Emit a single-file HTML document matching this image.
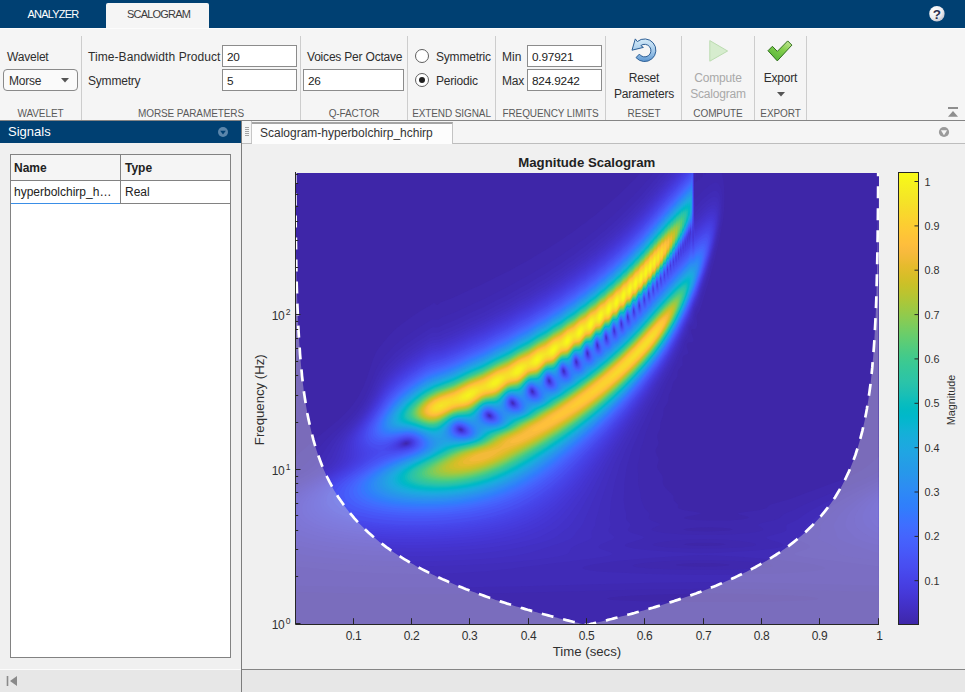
<!DOCTYPE html>
<html lang="en">
<head>
<meta charset="utf-8">
<title>Wavelet Time-Frequency Analyzer</title>
<style>
html,body{margin:0;padding:0;}
body{width:965px;height:692px;overflow:hidden;position:relative;background:#f0f0f0;font-family:"Liberation Sans",sans-serif;font-size:12px;color:#1f1f1f;}
.abs{position:absolute;}
#topbar{left:0;top:0;width:965px;height:28px;background:#004072;}
.ttab{position:absolute;top:3px;height:25px;line-height:23px;text-align:center;font-size:11px;color:#fff;letter-spacing:-0.8px;}
#tab1{left:20px;width:66px;}
#tab2{left:106px;width:101px;padding-left:2px;background:#f5f5f5;color:#3c3c3c;border-radius:2px 2px 0 0;}
#strip{left:0;top:28px;width:965px;height:91px;background:#f5f5f5;border-top:1px solid #fcfcfc;box-sizing:content-box;border-bottom:1px solid #858585;}
.sep{position:absolute;top:36px;width:1px;height:84px;background:#cdcdcd;}
.tl{position:absolute;font-size:12px;line-height:14px;color:#2e2e2e;white-space:nowrap;letter-spacing:-0.2px;}
.sl{position:absolute;top:108px;font-size:10px;line-height:12px;color:#5a5a5a;text-align:center;white-space:nowrap;letter-spacing:-0.1px;}
.inp{position:absolute;height:20px;border:1px solid #8c8c8c;background:#fff;box-sizing:content-box;font-size:11.8px;line-height:22px;color:#222;text-indent:4px;letter-spacing:-0.2px;}
.radio{position:absolute;width:12px;height:12px;border:1px solid #5f5f5f;border-radius:50%;background:#fff;}
.radio.on::after{content:"";position:absolute;left:3px;top:3px;width:6px;height:6px;border-radius:50%;background:#1f1f1f;}
.btxt{position:absolute;font-size:12px;line-height:16px;text-align:center;color:#2e2e2e;white-space:nowrap;letter-spacing:-0.2px;}
#sighead{left:0;top:121px;width:241px;height:22px;background:#004072;color:#fff;font-size:13px;line-height:22px;}
#leftbody{left:0;top:121px;width:242px;height:549px;background:#f0f0f0;border-right:1px solid #7d7d7d;box-sizing:border-box;}
#tbl{left:10px;top:154px;width:219px;height:502px;border:1px solid #828282;background:#fff;}
#docstrip{left:242px;top:121px;width:723px;height:22px;background:#f5f5f5;border-bottom:1px solid #bdbdbd;}
#doctab{left:252px;top:122px;width:201px;height:22px;background:#fdfdfd;border:1px solid #c3c3c3;border-top:2px solid #a4a4a4;border-left:none;border-bottom:none;box-sizing:border-box;font-size:12px;line-height:19px;color:#333;text-indent:8px;white-space:nowrap;}
#status{left:0;top:669px;width:965px;height:23px;background:#e7e7e7;border-top:1px solid #858585;box-sizing:border-box;}
#fig{left:242px;top:144px;width:723px;height:525px;background:#f0f0f0;}
svg text{font-family:"Liberation Sans",sans-serif;}
</style>
</head>
<body>
<div id="topbar" class="abs">
  <div id="tab1" class="ttab">ANALYZER</div>
  <div id="tab2" class="ttab">SCALOGRAM</div>
  <svg class="abs" style="left:928px;top:5px" width="18" height="18" viewBox="0 0 18 18"><defs><radialGradient id="gh" cx="0.35" cy="0.3" r="0.8"><stop offset="0" stop-color="#ffffff"/><stop offset="0.6" stop-color="#ececf0"/><stop offset="1" stop-color="#b9bcc8"/></radialGradient></defs><circle cx="8.9" cy="8.8" r="7.7" fill="url(#gh)"/><text x="8.9" y="13.6" text-anchor="middle" font-size="13.5" font-weight="bold" fill="#2b3050">?</text></svg>
</div>
<div id="strip" class="abs"></div>
<!-- WAVELET section -->
<div class="tl" style="left:7px;top:50px">Wavelet</div>
<div class="abs" style="left:3px;top:69px;width:73px;height:20px;border:1px solid #8a8a8a;border-radius:4px;background:#fafafa"></div>
<div class="tl" style="left:9px;top:74px">Morse</div>
<svg class="abs" style="left:61px;top:78px" width="8" height="5" viewBox="0 0 8 5"><path d="M0 0h8l-4 4.5z" fill="#555"/></svg>
<div class="sl" style="left:0;width:81px">WAVELET</div>
<div class="sep" style="left:81px"></div>
<!-- MORSE PARAMETERS -->
<div class="tl" style="left:88px;top:50px;letter-spacing:0.07px">Time-Bandwidth Product</div>
<div class="tl" style="left:88px;top:74px">Symmetry</div>
<div class="inp" style="left:222px;top:45px;width:73px">20</div>
<div class="inp" style="left:222px;top:69px;width:73px">5</div>
<div class="sl" style="left:82px;width:218px">MORSE PARAMETERS</div>
<div class="sep" style="left:300px"></div>
<!-- Q-FACTOR -->
<div class="tl" style="left:307px;top:50px">Voices Per Octave</div>
<div class="inp" style="left:303px;top:69px;width:99px">26</div>
<div class="sl" style="left:301px;width:106px">Q-FACTOR</div>
<div class="sep" style="left:407px"></div>
<!-- EXTEND SIGNAL -->
<div class="radio" style="left:415px;top:49px"></div>
<div class="radio on" style="left:415px;top:73px"></div>
<div class="tl" style="left:436px;top:50px">Symmetric</div>
<div class="tl" style="left:436px;top:74px">Periodic</div>
<div class="sl" style="left:408px;width:87px">EXTEND SIGNAL</div>
<div class="sep" style="left:495px"></div>
<!-- FREQUENCY LIMITS -->
<div class="tl" style="left:502px;top:50px;letter-spacing:0.1px">Min</div>
<div class="tl" style="left:502px;top:74px">Max</div>
<div class="inp" style="left:527px;top:45px;width:73px">0.97921</div>
<div class="inp" style="left:527px;top:69px;width:73px">824.9242</div>
<div class="sl" style="left:496px;width:109px">FREQUENCY LIMITS</div>
<div class="sep" style="left:605px"></div>
<!-- RESET -->
<svg class="abs" style="left:626px;top:34px" width="36" height="32" viewBox="0 0 36 32"><defs><linearGradient id="gr" x1="0" y1="0" x2="0" y2="1"><stop offset="0" stop-color="#d4eaf8"/><stop offset="0.55" stop-color="#a3c9ea"/><stop offset="1" stop-color="#5b95d0"/></linearGradient></defs><path d="M11.3 7.6A11.3 11.3 0 1 1 10 23.6L13.4 20.1A6.3 6.3 0 1 0 14.8 11.6L17.4 13.4 6 16.2 9.3 4.9z" fill="url(#gr)" stroke="#2d5f96" stroke-width="1" stroke-linejoin="round"/></svg>
<div class="btxt" style="left:607px;width:74px;top:70px">Reset<br>Parameters</div>
<div class="sl" style="left:607px;width:74px">RESET</div>
<div class="sep" style="left:681px"></div>
<!-- COMPUTE -->
<svg class="abs" style="left:706px;top:36px" width="26" height="30" viewBox="0 0 26 30"><path d="M3.8 4.6L21.6 15 3.8 25.2z" fill="#d6ecce" stroke="#bcdcb1" stroke-width="1" stroke-linejoin="round"/></svg>
<div class="btxt" style="left:682px;width:72px;top:70px;color:#a9a9a9">Compute<br>Scalogram</div>
<div class="sl" style="left:682px;width:72px">COMPUTE</div>
<div class="sep" style="left:754px"></div>
<!-- EXPORT -->
<svg class="abs" style="left:762px;top:34px" width="36" height="32" viewBox="0 0 36 32"><defs><linearGradient id="gc" x1="1" y1="0" x2="0.3" y2="1"><stop offset="0" stop-color="#cdeaa0"/><stop offset="0.45" stop-color="#86cf4e"/><stop offset="1" stop-color="#55b53a"/></linearGradient></defs><path d="M6 16.7L10.4 12.3 15.3 17.4 25.7 6.9 29.9 11.1 15.3 26.9z" fill="url(#gc)" stroke="#2f6f1c" stroke-width="1" stroke-linejoin="round"/></svg>
<div class="btxt" style="left:755px;width:51px;top:70px">Export</div>
<svg class="abs" style="left:776.5px;top:92px" width="8" height="5" viewBox="0 0 8 5"><path d="M0 0h8l-4 4.5z" fill="#555"/></svg>
<div class="sl" style="left:755px;width:51px">EXPORT</div>
<div class="sep" style="left:806px"></div>
<svg class="abs" style="left:947px;top:106px" width="12" height="12" viewBox="0 0 12 12"><path d="M1 2h10" stroke="#8e8e8e" stroke-width="2"/><path d="M6 5l5 5.8H1z" fill="#8e8e8e"/></svg>
<!-- Signals panel -->
<div id="leftbody" class="abs"></div>
<div id="sighead" class="abs"><span style="margin-left:8px">Signals</span>
  <svg class="abs" style="left:217px;top:5px" width="12" height="12" viewBox="0 0 12 12"><circle cx="6" cy="6" r="5" fill="#5b86ab"/><path d="M3.2 4.7h5.6L6 8.5z" fill="#004072"/></svg>
</div>
<div id="tbl" class="abs">
  <div class="abs" style="left:0;top:0;width:219px;height:25px;border-bottom:1px solid #828282;background:#f5f5f5"></div>
  <div class="abs" style="left:109px;top:0;width:1px;height:48px;background:#828282"></div>
  <div class="abs" style="left:0;top:26px;width:219px;height:22px;border-bottom:1px solid #828282"></div>
  <div class="abs" style="left:0;top:48px;width:109px;height:1px;background:#3a8ee6"></div>
  <div class="abs" style="left:3px;top:6px;font-weight:bold;font-size:12px;line-height:14px;color:#222">Name</div>
  <div class="abs" style="left:114px;top:6px;font-weight:bold;font-size:12px;line-height:14px;color:#222">Type</div>
  <div class="abs" style="left:3px;top:30px;font-size:12px;line-height:14px;color:#222;white-space:nowrap">hyperbolchirp_h…</div>
  <div class="abs" style="left:114px;top:30px;font-size:12px;line-height:14px;color:#222">Real</div>
</div>
<!-- Document tab strip -->
<div id="docstrip" class="abs"></div>
<div class="abs" style="left:242px;top:121px;width:9px;height:22px;background:#f5f5f5;border-right:1px solid #c6c6c6"></div>
<svg class="abs" style="left:244px;top:126px" width="6" height="11" viewBox="0 0 6 11"><path d="M1 1.5h4M1 3.5h4M1 5.5h4M1 7.5h4M1 9.5h4" stroke="#a3a3a3" stroke-width="1"/></svg>
<div id="doctab" class="abs">Scalogram-hyperbolchirp_hchirp</div>
<svg class="abs" style="left:938px;top:126px" width="12" height="12" viewBox="0 0 12 12"><circle cx="6" cy="6" r="5.1" fill="#9a9a9a"/><path d="M2.9 4.2h6.2L6 9.2z" fill="#f5f5f5"/></svg>
<!-- status bar -->
<div id="status" class="abs"></div>
<div class="abs" style="left:0;top:669px;width:241px;height:1px;background:#fbfbfb"></div>
<div class="abs" style="left:241px;top:669px;width:1px;height:23px;background:#7d7d7d"></div>
<svg class="abs" style="left:6px;top:675px" width="12" height="12" viewBox="0 0 12 12"><path d="M1.5 1v10" stroke="#8a8a8a" stroke-width="1.6"/><path d="M11 1v10L4 6z" fill="#8a8a8a"/></svg>
<svg class="abs" style="left:0;top:0" width="965" height="692" viewBox="0 0 965 692">
<text x="586.8" y="166.7" text-anchor="middle" font-size="13.2" font-weight="bold" fill="#222">Magnitude Scalogram</text>
<defs><clipPath id="axc"><rect x="296" y="173" width="583" height="451"/></clipPath></defs>
<g transform="translate(296,173)">
<rect x="0" y="0" width="583" height="451" fill="#3e26a8"/>
<path fill="#3f28ae" d="M343.8 0l56.4 0 -0.5 7.5 0.2 1 0.6 0.6 2 -3 1 1.4 0.6 -2 0.4 -2.7 1 2.2 1 -1.6 0.5 -3.4 1.2 0 0.3 1.6 1 -0.4 0.2 -1.2 16.2 0 1.5 7.5 0.6 6 0.4 12 -0.4 12 -1.1 10 -2.8 16 -5.1 22 -6.9 25 -7.8 26 -0.9 2 -1.9 2.7 -0.6 1.3 -0.2 2 0.5 7 -0.5 3 -1.2 1.5 -3 0 -1 0.5 -0.3 1 0.3 2.7 1.9 5.3 0.1 2.5 -1 1.3 -4 0.3 -1 0.6 -0.7 1.3 0 2 1.6 6 -0.4 1 -0.5 0.4 -3 1.4 -1 0.8 -0.8 1.4 -0.3 2 0.3 5 -0.4 1 -3.8 4 -0.7 2 -0.4 5 -1.1 2 -2.5 3 -1 2 -1.2 6 -2.2 4 -0.7 2 -0.4 5 -0.5 2 -3.3 5 -0.8 2 -0.5 6 -2.7 7 -0.3 6 -2.3 5 -0.6 2 0 2 1.1 4 0.2 2 -0.7 2 -2.1 4 -0.2 2 0.5 2 2.1 4 0.5 2 -0.2 2 -1.4 4 0 2 0.8 2 3.7 5 1 2 0.4 2 -0.3 4 0.9 3 1.6 2 6.2 6 1.7 2 0.4 1 0.1 3 0.3 1 4 4 0 3 0.9 1 4.7 1.5 15 2.5 2.8 1 -3.7 1 -10.9 2 -2.6 1 0.5 1 4.8 1 4.1 0.4 16 0.7 18 -0.2 14 -1 5.7 -0.9 1.8 -1 -1.5 -1.1 -7.9 -1.9 -2.3 -1 4.2 -1 17 -2.3 7.1 -1.7 1.6 -1 1.7 -2 1.8 -1 17.8 -5 51.4 -19 11.6 -5 9.5 -5 7.3 -5 10.2 -8.7 0.5 0 0 167.2 -583 0 0 -168.2 0.5 0 15.9 -14.3 25.5 -21 7.6 -7.3 7 -8 6 -8.7 5 -9.7 4 -10.5 5.8 -17.8 3.2 -7.1 2 -2.9 10 -12.2 5 -5.2 6 -5.3 13 -9.6 10 -6.4 8 -4.5 3 -2.4 1 0.1 2 1.9 1 0.2 3 -2.6 13.1 -5 15.9 -7.5 14 -6.2 13 -6.8 13 -6.3 10 -5.8 9 -4.7 10 -6.2 8 -4.5 7 -4.8 7 -4.2 7 -5.1 6.1 -3.9 6.9 -5.4 5 -3.3 5 -4.2 5 -3.6 5 -4.5 4 -2.9 16 -14.3 3 -3.3 4 -3.5 3 -3.4 3 -2.6 3 -3.8 1 -0.4 1 -1.5 1 -0.8zM398.5 4.1l0 8.8 0.9 -5.4 -0.2 -2zM360.5 421.5l-22.6 1 -14.4 1 -9 1 -3.8 1 2.4 1 4.4 0.5 21 1.1 35 0.8 43 0.2 44 -0.2 35 -0.8 21 -1.2 4 -0.4 2.3 -1 -3.8 -1 -9 -1 -14.4 -1 -37.1 -1.4 -49 -0.5zM402.5 354.5l-12 1 -3.2 1 3.3 1 3.9 0.4 17 0.5 18 -0.6 3.7 -0.3 3.5 -1 -2.8 -1 -8.4 -0.8 -11 -0.4zM390.5 370.5l-3.2 1 6.6 1 14.6 0.4 14.8 -0.4 6.6 -1 -2.9 -1 -12.5 -0.8 -13 0.1zM389.5 390.5l-9.4 1 0.4 1 5 0.5 8.9 0.5 12.1 0.2 12.7 -0.2 8.3 -0.5 5.5 -0.5 0.2 -1 -9.4 -1 -9.3 -0.4 -13 0z"/>
<path fill="#3f29b2" d="M357.1 0l41.2 0 -0.1 14.5 0.3 10.1 1 1 8.9 -9.1 6.1 -5.1 4 -1.8 2 -0.1 1 0.4 2 2.1 1.7 4.5 1 6 0.3 8 -0.3 9 -1.2 10 -2 12 -2.9 13 -5 19 -6.2 21 -5.8 18 -3.6 7.3 -1.3 9.7 -1 2 -2.3 2 -0.8 1 -0.7 2 -0.7 7 -0.5 1 -2.7 3.4 -0.8 1.6 -1.8 7 -3.2 6 -2.5 7 -3.1 6 -3.1 7 -4.3 8 -6.8 16 -4.6 9 -9.5 24 -2.5 9 -2.8 8 -1 8 -1.7 7 -0.2 3 0.5 7 -0.1 9 2.3 9 1 8 3.5 8 4.7 5 0.2 1 -1.1 3 0.2 1 0.9 1 1.9 1 7.8 3 0.7 1 -1 1 -6.6 3 -0.7 1 0.9 1 2.9 1 8.9 1.4 15 1.3 20 0.9 17 -0.1 18 -0.8 15 -1.3 9.3 -1.4 3.3 -1 1.2 -1 -0.4 -1 -4.8 -3 0 -1 2.1 -1 13 -3 5.3 -1.8 1.9 -1.2 2.9 -3 1.7 -1 10 -4 9.5 -5 58.5 -25 8.5 -4 7 -3.9 0.5 0 0 120.4 -97.5 -2.6 -69 -0.7 -70 0.8 -134 3.6 -61 1 -70 -0.2 -81.5 -1.8 0 -121.1 1.3 -0.5 4.2 -3 5.6 -5 3.5 -4 9.4 -12 4.4 -5 5.9 -6 17.2 -16.3 5 -5.3 4 -4.9 5 -7.3 4 -7.3 4 -8.9 5.6 -14 2.9 -6 3.2 -5 5.3 -6.5 8 -8.4 9 -7.6 13 -9 15 -9.3 2 -0.8 3 0.8 2 -0.2 4 -2.4 12 -4.6 16 -7.6 14.5 -6.4 12.5 -6.6 11 -5.3 10 -5.8 10 -5.2 9 -5.7 8 -4.4 8 -5.4 8 -4.9 6 -4.4 7 -4.5 5 -4 6 -4.1 5 -4.3 5 -3.5 5 -4.5 4 -2.9 5 -4.8 3 -2.2 4 -4 4 -3.4 3 -3.2 3 -2.6 3 -3.3 4 -3.8 2 -2.4 3 -2.8 2 -2.6 3 -3 2 -2.7 3 -3 2 -2.8 1 -0.8 1.6 -2.1zM393.5 366.5l-12 0.7 -13 1.4 -9 1.6 -1.1 0.3 -1.7 1 1.1 1 3.7 0.8 10 1.1 17 0.8 20 0.3 20 -0.3 17 -0.8 10 -1.1 3.5 -0.8 1.2 -1 -1.6 -1 -5.1 -1.2 -9 -1.3 -11 -1 -21 -0.9zM109.5 270.3l-0.2 0.2 0.2 0.2 1 0.1 0.4 -0.3 -0.4 -0.4zM384.5 387.5l-17 0.8 -15.3 1.2 -8.1 1 -5.1 1 -2.3 1 0.9 1 3.9 0.8 12.4 1.2 23.6 0.9 30 0.4 30 -0.4 23 -0.9 12 -1.1 4 -0.9 0.7 -1 -2.4 -1 -7.3 -1.2 -11 -1.2 -15 -1.1 -28 -0.8z"/>
<path fill="#402bb7" d="M364 0l34 0 0.1 22.5 0.4 7.6 1 3.8 7 -7.6 6 -5.4 3 -2 2 -0.8 2 -0.2 1 0.3 1 0.6 1.3 1.7 0.9 2 0.8 3.2 0.6 7.8 -0.4 10 -0.8 7 -1.9 11 -5.1 22 -6 21 -7.8 24 -1.5 4 -3.1 6.6 -1.6 8.4 -0.9 2 -2.9 4 -2.1 8 -3.5 6.6 -2.7 7.4 -6 13 -6.6 13 -4.7 8.3 -7.6 15.7 -5 9 -11.4 23.9 -7.2 17.1 -4.7 15 -0.9 4 -2.2 14 -0.8 19 1 8 1.5 5 -0.2 5 0.9 2 3 3 0.5 1 -0.1 1 -2.5 4 0.2 1 1 1 1.9 1 9.7 3 2.5 1 0.9 1 -1.1 1 -2.6 1 -13.3 4 -1.7 1 -0.5 1 1.1 1 3.6 1.1 6 1.1 9 1.1 28 2.2 27 1.3 17 -0.3 32 -1.9 20 -1.9 10.7 -1.7 3.1 -1 1.3 -1 -0.3 -1 -1.6 -1 -2.5 -1 -10 -3 -2.3 -1 -0.6 -1 1.4 -1 12.8 -3.5 4.1 -1.5 1.4 -1 0.6 -1 -0.5 -3 0.2 -1 0.9 -1 10.6 -5 8 -6 15.8 -9 13.8 -7 43.1 -20.3 0.5 0 0 108.5 -102.5 -2.8 -64 -0.8 -61 0.7 -136.6 3.7 -62.2 1 -73.2 -0.1 -83.5 -1.7 0 -109 0.5 0 4.2 -2.2 6.7 -4 4.1 -3 4 -3.7 4 -5 7.2 -11.3 5.1 -7 6.2 -7 13.5 -14 6 -7 5 -7 4 -6.8 4 -8.1 6.3 -14.1 2.7 -5.1 3.3 -4.9 4.7 -5.7 8 -8.2 8 -6.7 13 -9 14 -8.7 3 -1.1 3 0.3 2 -0.2 5 -2.5 10.7 -4.2 16.3 -7.7 13 -5.7 13 -6.8 11 -5.3 12 -6.8 9 -4.7 9 -5.7 8 -4.4 8 -5.4 7.5 -4.5 6.5 -4.8 6 -3.8 7 -5.5 5 -3.3 5 -4.3 5 -3.5 5 -4.5 4 -2.9 16 -14.4 18 -18.1 10 -11.3 6 -7.5 2 -1.8 2 -2.8 1 -0.8zM392.5 382.5l-39 2.5 -35 3.3 -22.3 3.2 -7.8 2 -1.7 1 0.2 1 0.6 0.3 1.9 0.7 4.1 0.8 9 1.1 12 0.9 40 1.8 49 0.8 50 -0.5 38 -1.4 15 -0.9 11 -1 8 -1.4 3.1 -1.2 -0.2 -1 -1.9 -1 -8.3 -2 -13.2 -2 -23.5 -2.6 -34 -2.8 -31 -1.9 -12 -0.2zM109.5 269.8l-0.8 0.7 0.8 0.6 1 0 1 -0.6 -1 -1zM164.5 256.3l-0.3 0.2 0.3 0.4 0.6 -0.4zM193.5 242.2l-0.5 0.3 0.5 0.5 0.4 -0.5zM236.5 218.1l-0.4 0.4 0.4 0.4 0.3 -0.4z"/>
<path fill="#412dbb" d="M368.5 0l29.2 0 -0.1 13.5 0.8 19 0.1 13.6 1 -6.7 3 -3.6 6 -6 5 -4.1 3 -1.6 2 -0.4 1 0.2 2 1.4 0.7 1.2 1.4 5 0.4 9 -1 11 -3.1 17 -5.9 23 -4.8 16 -6.4 19 -1.8 5 -2.5 5 -2.6 10 -3.4 5.8 -2.6 8.2 -3.4 6.8 -3.4 8.2 -6.2 13 -5.9 11 -6.5 11.2 -6.6 12.8 -6.4 11 -12 22.5 -9.1 18.5 -6.9 17 -4.5 16 -3.9 19 -0.8 8 -0.2 6 -0.8 5 1.2 4 0.1 2 -2 4 -0.2 1 0.2 1 0.6 1 3.7 3 1 1 0.3 1 -0.6 1 -1.4 1 -11.7 5 -1.4 1 -0.6 1 0.2 1 1.8 1.3 10.1 3.7 1.5 1 -0.3 1 -2.4 1 -4.3 1 -12.8 2 -76.8 9.6 -29 3.1 -34 2.1 -20 0.6 -20 0.1 -20 -0.2 -21 -0.7 -34 -2.2 -41.5 -4.4 0 -86.1 0.5 0 7.6 -3.9 8.7 -5 5.5 -4 5 -5 3.2 -4.7 6 -11.3 4.5 -7 5.7 -7 13.8 -15.4 7 -9.4 6 -10.3 7.7 -15.9 3.3 -6 4 -5.8 5.4 -6.2 7.6 -7.3 8 -6.4 11 -7.6 13 -8.1 3 -1.3 6 -0.4 5 -2.3 11 -4.4 16 -7.6 13 -5.6 14 -7.4 10 -4.7 11 -6.3 10 -5.2 9 -5.7 8.4 -4.7 7.6 -5.2 8 -4.8 6 -4.5 6 -3.8 7 -5.4 5 -3.4 5 -4.2 5 -3.6 5 -4.5 4 -2.9 16 -14.3 3 -3.3 3 -2.5 3 -3.4 3 -2.7 3 -3.5 3 -2.8 3 -3.7 2 -1.8 2 -2.7 3 -3.1 2 -2.7 2 -2 2 -2.7 2 -1.9 2 -2.8 5 -5.4 1 -1.4zM109.5 269.4l-1.4 1.1 0.4 0.7 0.6 0.3 1.4 -0.1 1.5 -0.9 -0.5 -1.1zM164.5 256l-0.6 0.5 0.6 0.7 1 -0.7zM193.5 242l-0.8 0.5 0.8 0.7 0.6 -0.7zM216.5 229.4l0 1.2 0.4 -0.1zM236.5 217.9l-0.5 0.6 0.5 0.7 0.4 -0.7zM291.5 179.9l-0.2 0.6 0.2 0.4 0.2 -0.4zM581.3 308.5l1.7 -0.6 0 85.5 -65.2 -7.9 -12.9 -2 -4.2 -1 -2.3 -1 0 -1 1.8 -1 10.3 -3.4 2.7 -1.6 0.3 -0.7 -0.4 -1.3 -1.3 -1 -10.7 -5 -1.1 -1 -0.2 -1 0.8 -1 5.9 -3.4 2 -1.6 0.7 -2 0 -3 1.2 -2 7 -5 4.2 -4 2.6 -2 13.4 -9 18.9 -10.6z"/>
<path fill="#422ebf" d="M372 0l25.5 0 0 20.3 0.7 13.2 0.3 14.6 1 -5.2 11 -10.7 3 -2.2 3 -1.5 2 -0.1 1 0.3 1 0.8 1 1.5 1 3.2 0.5 7.3 -0.8 11 -2.2 13 -4.1 17 -4.8 17 -9 27 -4.6 10.8 -2.2 8.2 -3.7 7 -2.4 7 -6.9 15 -7.5 15 -12.1 21 -6.6 12 -20.6 35.1 -9.3 16.9 -7.7 16 -6.5 17 -7.1 21 -3.4 13 -1.7 5 -0.7 6 -3.5 6 -0.1 2 0.5 3 -0.3 1 -0.8 1 -3.4 2 -10 4 -4.1 2 -2.5 2 -1.9 4 -1.2 1 -2.1 1 -3.2 1 -10.4 2 -14.9 2 -19 2 -20.7 1.8 -25 1.5 -25 1 -25 0.5 -26 -0.1 -24 -0.5 -25 -1.1 -25 -1.7 -26.5 -2.3 0 -77.2 0.5 0 11.2 -5.9 10.3 -6 5.5 -4 4.9 -5 3.2 -5 5.3 -12 3.5 -6 4.4 -6 12.7 -15 6 -7.9 6 -9.7 8.5 -16.4 3.4 -6 4.1 -5.8 5 -5.7 7 -6.7 8 -6.4 11 -7.6 13 -8.1 3 -1.2 5 -0.4 2 -0.5 5 -2.3 10 -4 16 -7.6 13.1 -5.7 12.9 -6.8 11 -5.2 11 -6.4 10 -5.2 9 -5.6 8.5 -4.8 7.5 -5.1 8 -4.8 6 -4.5 6 -3.8 7 -5.5 5 -3.3 5 -4.3 5 -3.5 5 -4.5 4 -2.9 16 -14.4 3 -3.2 3 -2.6 3 -3.3 3 -2.7 3 -3.5 3 -2.8 3 -3.7 2 -1.8 2 -2.7 3 -3.1 2 -2.8 2 -1.9 2 -2.8 2 -1.9 2 -2.7 8 -8.9 1.5 -2zM109.5 269.1l-0.9 0.4 -1 1 0.2 1 1.7 0.4 1 -0.1 1 -0.4 1 -0.9 -0.1 -1 -0.9 -0.5zM164.5 255.8l-0.9 0.7 0.9 1 1.1 0 0.2 -1zM192.5 242.4l1 1.1 0.8 -1 -0.8 -0.7zM216.5 229.2l-0.4 0.3 0.1 1 0.3 0.3 1 -0.2 -0.4 -1.1zM236.5 217.8l-0.7 0.7 0.7 0.9 0.6 -0.9zM253.5 207.4l-0.7 0.1 0.3 1 0.4 0.3 0.2 -0.3zM267.5 197.2l-0.2 0.3 0.2 1.3 0.4 -0.3zM280.5 188.3l-0.3 0.2 0.3 1.3zM291.5 179.6l-0.3 0.9 0.3 0.7 0.3 -0.7zM301.5 171.7l-0.3 0.8 0.3 0.6zM581.3 311.5l1.7 -0.6 0 76.6 -24.4 -3 -8.1 -1.5 -5.4 -1.5 -2 -1 -1 -1 -1.2 -4 -2.2 -2 -4 -2 -9.3 -4 -2.7 -2 -0.5 -1 0.2 -1 1.9 -3 0.8 -2 -0.5 -4 0.2 -2 1.4 -2 8.1 -9 9.7 -8 8.8 -6 13.5 -8z"/>
<path fill="#4230c3" d="M374.9 0l22.5 0 0.1 25.1 0.6 8.4 0.4 16.1 1 -3.8 1 -0.4 7 -7.1 5 -4.2 3 -1.6 2 -0.4 2 0.8 1.2 1.6 1 3 0.4 4 0 5 -0.5 6 -2.6 15 -4.1 17 -7.9 26 -5.9 17 -3.6 8.1 -2.6 8.9 -3.4 6.5 -3.3 8.5 -7.4 16 -6.7 13 -5.1 9 -7.4 12 -6.9 12 -20.2 32.7 -13.2 22.3 -9 17 -25.9 58 -1.9 2.8 -3.9 4.2 -2.5 4 -1.6 1.9 -3.2 2.1 -5.8 2.4 -28 9.2 -9 2.5 -10.5 1.9 -12.5 1.6 -14.7 1.4 -18.3 1.3 -24 1 -25 0.6 -25 -0.1 -24 -0.7 -24 -1.2 -23 -1.8 -17.2 -2.1 -12.3 -2.2 0 -67.2 0.5 0 14 -7.6 10.3 -6 7 -5 4.1 -4 2.2 -3 1.4 -2.5 4.7 -12.5 4.2 -8 4.3 -6 10.8 -13.3 5 -6.7 6 -9.5 8.3 -15.5 3.5 -6 4.2 -5.7 5 -5.5 7 -6.6 7 -5.5 10 -7 13 -8.1 4 -1.8 7 -1 14 -5.8 16 -7.6 14.6 -6.4 12.4 -6.5 11 -5.3 12 -6.9 9 -4.6 10 -6.3 8 -4.4 8 -5.5 6 -3.5 7 -5.2 6.1 -3.8 6.9 -5.4 5 -3.3 5 -4.3 5 -3.5 5 -4.5 4 -3 4 -3.8 5 -4 3 -3.2 4 -3.3 3 -3.3 3 -2.5 17 -17.9 7 -8.5 2 -1.9 2 -2.8 2 -1.9 2 -2.7 2 -2 8 -9.5 1 -0.8 1.4 -1.9zM108.5 269.2l-1.5 1.3 0 1 1.5 0.7 3 -0.5 1.5 -1.2 0 -1 -1.5 -0.8 -1 -0.1zM163.5 256.3l0 0.4 1 1 1 0.1 0.5 -0.3 0 -1 -0.5 -0.5 -1 -0.4zM192.5 241.9l-0.2 0.6 0.9 1 1.1 0 0.2 -1 -1 -0.9zM216.5 229l-0.7 0.5 0.2 1 0.5 0.5 1 -0.1 0.3 -0.4 -0.3 -0.8zM236.5 217.6l-0.9 0.9 0.9 1.1 0.7 -1.1zM252.5 207.3l0.3 1.2 0.7 0.5 0.4 -0.5 -0.2 -1 -0.2 -0.3zM267.5 197l-0.4 0.5 0.4 1.5 0.7 -0.5zM280.5 188.1l-0.5 0.4 0.1 1 0.4 0.5 0.3 -0.5zM291.5 179.4l-0.4 1.1 0.4 0.9 0.4 -0.9zM301.5 171.4l-0.4 1.1 0.4 0.8 0.3 -0.8zM580.9 314.5l2.1 -0.9 0 66.4 -6.5 -1.7 -25 -8.6 -7.6 -3.2 -1.4 -1 -1.6 -2 -0.8 -4 -2.3 -6 0 -1 0.7 -2 4.7 -8 2.6 -3 5.1 -5 4.9 -4 6.9 -5 7.9 -5z"/>
<path fill="#4331c8" d="M377.5 0l19.9 0 0.1 28.1 1 22.8 1 -2.3 1 -0.3 8 -8.1 5 -3.7 2 -0.9 2 -0.1 1 0.4 1 0.9 1 2.1 0.7 3.6 0.1 5 -1.2 12 -3.1 15 -5.1 19 -8.8 27 -2.9 8 -2.7 5.8 -3.3 10.2 -2.7 5.2 -3.6 8.8 -7 15 -6.7 13 -5.2 9 -15.9 26 -34.6 54 -8.8 15 -14.1 27 -12.6 22 -7.3 11 -2.5 3 -10.7 8.5 -3.7 2.5 -5.3 2.4 -8.4 2.6 -18.6 4.4 -18 3.3 -19 2.6 -20 1.8 -23 1.1 -24 0.6 -25 -0.2 -24 -0.9 -20 -1.4 -18 -1.9 -17 -2.7 -18.5 -3.7 0 -56.8 0.5 0 28 -16.2 7 -5 4.1 -4 2.2 -3 1.5 -3 4 -13 1.8 -4 2.2 -4 4.1 -6 10.1 -12.9 6 -8.4 5 -8.3 7.4 -13.4 3.7 -6 4.7 -6 5.2 -5.5 6 -5.4 7 -5.4 9 -6.2 13 -8.2 4 -1.7 7 -1.1 15.7 -6.5 15.3 -7.3 13.1 -5.7 12.9 -6.8 11 -5.2 11 -6.4 10 -5.1 9 -5.7 8.6 -4.8 7.4 -5.1 8 -4.8 6 -4.5 7 -4.5 6 -4.8 5 -3.3 5 -4.2 5 -3.6 5 -4.5 4 -2.9 4 -3.9 5 -4 3 -3.1 4 -3.3 3 -3.3 3 -2.5 17 -17.9 2 -2.7 3 -3.1 2 -2.8 2 -1.9 2 -2.8 2 -1.9 2 -2.7 2 -1.9 5 -6.1 4 -4.3 2 -2.7 2 -1.9zM109.5 268.5l-2.2 1 -0.9 1 -0.2 1 0.3 0.3 1.3 0.7 2.7 -0.1 2 -0.8 1 -1.1 0 -1 -1 -0.9 -1 -0.3zM164.5 255.4l-1 0.4 -0.4 0.7 0.6 1 0.8 0.4 1 0.1 0.9 -0.5 -0.1 -1 -0.8 -0.7zM192.5 241.5l-0.4 1 0.4 0.7 1 0.7 1.2 -0.4 -0.2 -1.3 -1 -0.8zM216.5 228.8l-0.9 0.7 0.2 1 0.7 0.7 1 0 0.5 -0.7 -0.4 -1zM236.5 217.4l-0.7 0.1 -0.4 1 1.1 1.3 0.7 -0.3 0.2 -1zM252.5 207l-0.2 0.5 0.2 1 1 0.8 0.6 -0.8 -0.2 -1 -0.4 -0.5zM267.5 196.8l-0.5 0.7 0 1 0.5 0.7 1 -0.7zM280.5 187.9l-0.7 0.6 0.1 1 0.6 0.8 0.5 -0.8zM291.5 179.2l-0.5 1.3 0.5 1.1 0.5 -1.1zM301.5 171.2l-0.5 1.3 0.5 1.1 0.4 -1.1zM310.5 164.1l-0.4 0.4 0.4 1.4zM325.5 149.9l-0.3 0.6 0.3 1.4zM337.5 136.8l0 1.9 0.2 -1.2zM582.1 316.5l0.9 -0.2 0 56 -6.5 -1.4 -8.4 -2.4 -5.4 -2 -3.2 -1.7 -2.8 -2.3 -6 -7 -1.1 -2 -0.4 -2 1.1 -5 1.5 -4 1.9 -3 4.3 -5 4.2 -4 6.3 -5z"/>
<path fill="#4433cc" d="M379.5 0l17.9 0 0.1 30.5 1 21.6 2 -1.5 8 -7.9 5 -3.6 2 -0.7 2 0.1 1 0.7 0.9 1.3 0.6 2 0.6 4 -0.1 5 -1.7 13 -3.9 17 -6.8 23 -6.1 18 -4.5 10.6 -3.5 10.4 -3.5 7.1 -3.7 8.9 -6.7 14 -9.1 17 -20 32 -33.4 50 -9 14 -20.1 33.9 -14 20.1 -3.2 4 -5.8 6.1 -3 2.7 -3 2.1 -10 5.7 -8 3.6 -9 2.8 -15 3.3 -18 2.9 -18 2.1 -19 1.5 -22 1.1 -23 0.3 -24 -0.3 -22 -1 -20 -1.6 -20 -2.4 -17 -2.9 -14.5 -3.3 0 -48.9 0.5 0 32.8 -19.8 6.6 -5 3.8 -4 1.4 -2 1.5 -3 3.5 -14 1.6 -4 2.1 -4 4 -6 9.7 -12.8 5 -7.1 15.5 -26.1 4.5 -5.8 5 -5.3 6 -5.4 8 -6.2 10 -6.8 11 -6.8 4 -1.6 7 -1.3 14.2 -5.8 15.8 -7.5 14.8 -6.5 12.2 -6.4 11.6 -5.6 11.4 -6.6 9 -4.6 9 -5.7 8 -4.4 9 -6.1 6.1 -3.6 6.9 -5 6.2 -4 6.8 -5.3 5 -3.3 5 -4.3 5 -3.5 5 -4.5 4 -3 4 -3.8 5 -4 3 -3.2 4 -3.3 3 -3.3 3 -2.5 17 -17.9 7 -8.5 2 -1.9 2 -2.8 2 -1.9 2 -2.7 2 -2 11 -13 1 -0.8 3 -3.5zM108.5 268.5l-1.8 1 -0.9 1 -0.3 1 0.8 1 2.2 0.5 2 -0.3 2 -0.7 1.5 -1.5 0 -1 -1.5 -1.3 -2 -0.2zM163.5 255.4l-0.6 1.1 0.6 1.1 1 0.5 1 0.1 1.2 -0.7 -0.2 -1 -1 -1 -1 -0.3zM192.5 241.3l-0.6 1.2 0.6 1 1 0.6 1 -0.2 0.5 -0.4 -0.1 -1 -1.4 -1.2zM215.5 229.3l0.1 1.2 0.9 0.9 1 0.1 0.7 -1 -0.7 -1.3 -1 -0.6zM235.5 217.3l-0.2 1.2 0.5 1 0.7 0.5 1 -0.4 0 -1.1 -0.6 -1 -0.4 -0.3zM252.5 206.6l-0.3 0.9 0.2 1 1.1 1 0.7 -1 -0.2 -1 -0.5 -0.7zM267.5 196.6l-0.7 0.9 0.1 1 0.6 0.9 1 -0.3 0.1 -0.6 -0.3 -1zM280.5 187.7l-1 0.8 0.3 1 0.7 1 0.6 -1zM291.5 179l-0.5 0.5 -0.1 1 0.6 1.3 0.6 -1.3zM301.5 171.1l-0.5 0.4 -0.1 1 0.6 1.3 0.5 -1.3zM310.5 163.8l-0.7 0.7 0.7 1.6 0.2 -0.6zM318.5 157l-0.5 0.5 0.5 1.3zM325.5 149.7l-0.4 0.8 0.4 1.6 0.2 -1.6zM331.5 142.8l0 2.2 0.3 -0.5zM337.5 136.5l0 2.5 0.3 -1.5zM581.7 319.5l1.3 -0.5 0 47.9 -4.7 -1.4 -4.8 -2.2 -5 -3 -5 -3.6 -2.3 -2.2 -1.4 -2 -0.6 -2 -0.3 -3 0.1 -3 0.9 -3 1.6 -3 2.7 -4 2.7 -3 4.3 -4z"/>
<path fill="#4434d0" d="M381.2 0l16.1 0 0.2 32.6 1 20.7 1 1 1 -1.6 6 -6 4 -3.4 3 -1.8 2 -0.6 2 0.5 1 1.2 1 2.8 0.4 4.1 -0.3 6 -0.9 7 -1.7 9 -4.9 19 -7 22 -4.3 12 -4.2 10 -3.6 10 -2.5 5 -4.3 10 -6.3 13 -5.8 11 -5.2 9 -17.8 28 -45.5 66 -19.1 29.7 -13.2 17.3 -5.8 6.8 -4 4.1 -8 6.7 -7 4.3 -12 5.3 -11.2 3.8 -12.6 3 -15.2 2.6 -18 2.1 -20 1.6 -24 1.1 -24 0.2 -24 -0.5 -23 -1.4 -21 -2.1 -18 -2.8 -13 -2.9 -12.5 -4.3 0 -39.9 0.5 0 12.8 -8.7 22.9 -14 6.6 -5 3.9 -4 2 -3 1.2 -3 2.3 -13 1.8 -5 2.1 -4 3.9 -6 13.5 -18.7 15 -24.8 4.3 -5.5 5.7 -5.9 6 -5.3 7 -5.4 9 -6.1 11 -7 4 -1.8 9 -2 13.4 -5.5 15.6 -7.4 15 -6.6 12 -6.4 11.8 -5.6 11.2 -6.5 9 -4.6 9 -5.7 8 -4.4 8 -5.5 7.3 -4.3 6.7 -5 7 -4.5 6 -4.7 5 -3.3 5 -4.3 5 -3.5 5 -4.5 4 -3 4 -3.8 5 -4.1 3 -3.1 4 -3.3 3 -3.3 3 -2.5 17 -17.9 7 -8.5 2 -2 2 -2.7 2 -1.9 2 -2.8 2 -1.9 11 -13 4 -4.2 1 -1.7 0.7 -0.5zM382.5 78.4l-0.2 2.1 0.2 2 0.2 -2zM394.5 57.1l-0.3 2.4 0.3 2.1zM108.5 268.2l-2.4 1.3 -1 1 -0.3 1 0.4 1 2.3 0.8 3 -0.2 3 -1.4 0.9 -1.2 0.1 -1 -0.7 -1 -1.3 -0.6 -2 -0.2zM163.5 255.2l-0.5 0.3 -0.3 1 0.8 1.3 2 0.7 1 -0.4 0.5 -0.6 -0.2 -1 -1 -1 -1.3 -0.5zM192.5 241.1l-0.6 0.4 -0.2 1 0.5 1 1.3 0.7 1 0 0.7 -0.7 -0.1 -1 -1.6 -1.4zM216.5 228.4l-1 0.5 -0.3 0.6 0.2 1 1.1 1.1 1 0.1 0.4 -0.2 0.5 -1 -0.9 -1.6zM235.5 217.1l-0.4 1.4 0.4 0.9 1 0.8 1 -0.2 0.2 -1.5 -0.6 -1 -0.6 -0.5zM252.5 206.4l-0.5 1.1 0.2 1 1.3 1.2 0.9 -1.2 -0.2 -1 -0.7 -0.9zM267.5 196.4l-0.8 1.1 0.1 1 0.7 1.2 1 -0.1 0.2 -1.1 -0.2 -0.9zM280.5 187.5l-1 0.5 -0.1 0.5 0.2 1 0.9 1.2 0.7 -1.2zM291.5 178.8l-0.7 0.7 -0.1 1 0.8 1.5 0.6 -0.5 0.2 -1zM301.5 170.9l-0.7 0.6 -0.1 1 0.8 1.5 0.6 -1.5zM310.5 163.6l-1 0.9 1 1.9 0.3 -0.9zM318.5 156.7l-0.9 0.8 0.9 1.6zM325.5 149.4l-0.5 1.1 0.5 1.9 0.3 -1.9zM331.5 142.6l-0.2 0.9 0.2 1.8 0.5 -0.8zM337.5 136.3l-0.2 1.2 0.2 1.7 0.4 -1.7zM352.5 119.5l0 2.3 0.2 -1.3zM364.5 104.3l0 2.6 0.2 -1.4zM374.5 90.9l-0.2 1.6 0.2 1.9 0.2 -1.9zM581.8 322.5l0.7 -0.6 0.5 0 0 38.8 -1.5 -0.5 -5.3 -2.7 -3.2 -2 -2.4 -2 -1.7 -2 -1.1 -2 -0.9 -3 -0.3 -2 0 -2 0.8 -3 1.4 -3 1.8 -3 4.4 -5z"/>
<path fill="#4536d4" d="M383 0l14.3 0 0.1 30.5 0.7 19 0.4 4.9 1 2.2 1 -2.1 6 -5.8 4 -3.3 3 -1.7 2 -0.4 1 0.3 1 0.7 1 1.9 0.5 2.3 0.2 5 -0.5 6 -2.8 15 -2.7 11 -3.2 11 -8.1 24 -5.4 13.1 -2.7 7.9 -8.6 19 -10.1 20 -8.9 15 -18.3 28 -12.6 18 -32.4 45 -18.4 26.7 -5 6.6 -7 8.2 -6 6.7 -6 6 -8 6.5 -9 5.6 -10 4.4 -12 4 -14 3.4 -15 2.6 -18 2.2 -21 1.6 -24 0.9 -25 0.1 -24 -0.9 -22 -1.8 -19 -2.4 -15 -2.9 -13 -3.8 -11.5 -4.7 0 -31.1 0.5 0 5.9 -4.9 7 -5 26.8 -17 5.3 -4 4 -4 2 -3 1.2 -3 0.6 -3 0.4 -7 0.7 -4 1.4 -4 2.4 -5 3.8 -6 12.5 -17.7 14 -22.8 5 -6.4 6 -6.1 6 -5.2 7 -5.2 19 -12.4 4 -1.8 9 -2.1 13 -5.3 16 -7.6 14.7 -6.4 12.3 -6.5 11.5 -5.5 11.5 -6.6 9 -4.7 10 -6.2 8 -4.5 7 -4.8 7 -4.2 7 -5.1 7 -4.5 6 -4.8 5 -3.3 5 -4.3 5 -3.5 5 -4.5 4 -2.9 4 -3.9 5 -4 3 -3.1 4 -3.4 3 -3.2 3 -2.5 17 -17.9 2 -2.7 3 -3.1 2 -2.8 2 -1.9 2 -2.8 2 -1.9 2 -2.7 2 -1.9 8 -9.6 7 -7.7 1 -1.5 2 -1.9zM384.5 74.3l0 3.6 0.2 -1.4zM394.5 56.7l-0.4 3.8 0.4 1.8 0.3 -2.8zM110.5 267.4l-3 0.9 -2 1.2 -1 1 -0.4 1 0.2 1 1.7 1 2.5 0.2 3 -0.6 2.8 -1.6 0.6 -1 0.1 -1 -0.6 -1 -1.9 -1zM163.5 255l-0.8 0.5 -0.2 0.6 0.4 1.4 1.6 1 2 -0.1 0.7 -0.9 -0.1 -1 -0.6 -0.7 -1 -0.7zM192.5 240.9l-0.9 0.6 -0.1 1 0.5 1 1.5 0.9 1 0.1 1 -1 -0.2 -1 -0.8 -1 -1 -0.6zM215.5 228.5l-0.4 1 0.4 1.4 1 0.9 1 0.1 0.8 -0.4 0.3 -1 -1.1 -1.8 -1 -0.5zM235.5 216.9l-0.4 0.6 -0.1 1 0.4 1 1.1 0.9 1 -0.1 0.5 -0.8 -0.5 -1.7 -1 -1zM252.5 206.2l-0.6 1.3 0.2 1 0.4 0.7 1 0.7 0.8 -0.4 0.2 -0.6 -0.2 -1.4 -0.8 -1.1zM267.5 196.3l-0.9 1.2 0.1 1 0.8 1.4 1 0 0.4 -1.4 -0.3 -1zM280.5 187.3l-1 0.2 -0.2 1 0.2 1.1 1 1.3 0.6 -0.4 0.3 -1 -0.2 -1zM291.5 178.6l-0.8 0.9 -0.1 1 0.9 1.8 0.8 -0.8 0.1 -1zM301.5 170.7l-0.9 0.8 0 1 0.9 1.7 0.5 -0.7 0.2 -1zM310.5 163.4l-1 0.2 -0.1 0.9 1.1 2.2 0.4 -1.2zM317.5 156.4l0 1.4 1 1.6 0.3 -0.9 -0.3 -2zM325.5 149.3l-0.6 1.2 0.6 2.1 0.4 -1.1zM331.5 142.4l-0.3 1.1 0.3 2.1 0.6 -1.1zM337.5 136.2l-0.3 1.3 0.3 2 0.5 -1zM343.5 131.3l-0.3 1.2 0.3 1.2zM348.5 125.9l-0.2 0.6 0.2 1.4zM352.5 119.3l0 2.8 0.3 -1.6zM364.5 104.1l0 3.1 0.3 -1.7zM371.5 95.2l-0.2 1.3 0.2 2.2 0.2 -2.2zM374.5 90.7l-0.3 1.8 0.3 2.2 0.3 -2.2zM382.5 78.2l-0.3 2.3 0.3 2.4 0.3 -2.4zM582.3 325.5l0.7 -0.2 0 29.6 -0.5 0 -3 -2 -3.3 -3.4 -2.3 -4 -0.7 -3 0.5 -4 1.5 -4 2.6 -4z"/>
<path fill="#4538d7" d="M384.7 0l12.5 0 0.2 30.5 0.6 21 0.2 3 1.3 3.8 1 -2.1 5 -4.8 4 -3.4 3 -1.9 2 -0.6 1 0.1 1 0.5 1.1 1.4 0.8 3 0.1 5 -0.5 6 -1.1 7 -2 9 -5.8 21 -8.2 24 -4.4 10.2 -3.5 9.8 -7.8 17 -7 14 -10.2 18 -15.7 24 -18.4 26 -33.5 45 -17.9 24.6 -10 11.9 -13 13.2 -9 7.4 -10 6.1 -10 4.6 -12 4 -15 3.7 -17 2.9 -19 2.2 -22 1.5 -24 0.6 -25 -0.3 -23 -1.3 -22 -2.3 -18 -3.1 -15 -3.9 -10 -3.9 -4.9 -2.9 -3.1 -2.6 -0.5 0 0 -20.2 0.5 0 5.7 -6.2 6 -5 8.5 -6 23.4 -15 5 -4 3.7 -4 1.9 -3 0.9 -3 0.3 -10 0.8 -5 1.4 -4 2 -4 3.8 -6 11.6 -16.7 13.2 -21.3 5.6 -7 6.2 -6.2 6 -5.1 7 -5.1 18 -11.7 5 -2.1 8 -1.9 14.6 -5.9 15.4 -7.3 13 -5.7 13 -6.8 11 -5.3 11 -6.3 10 -5.2 9 -5.7 8.5 -4.7 7.5 -5.2 8 -4.8 6 -4.5 7 -4.4 6 -4.8 5 -3.3 5 -4.3 5 -3.5 5 -4.5 4 -3 4 -3.8 5 -4 3 -3.2 4 -3.3 3 -3.3 3 -2.5 17 -17.9 2 -2.6 3 -3.2 2 -2.7 2 -1.9 2 -2.8 2 -1.9 2 -2.7 2 -1.9 8 -9.6 7 -7.7 1 -1.5 4 -3.9zM391.5 65.3l0 3.8 0.2 -2.6zM394.5 56.3l-0.7 5.2 -0.6 2 0.3 3.3 0.6 -3.3 0.4 -0.4 0.2 -1.6 0.1 -3zM397.5 59.2l-0.7 0.3 -0.2 1 0.9 4.3zM109.5 267.3l-3 1.1 -1.7 1.1 -1.5 2 0.2 1.2 0.9 0.8 1.1 0.4 3 0.1 4 -0.9 2.3 -1.6 0.6 -1 0.1 -1 -1 -1.4 -2 -0.9zM162.5 255.4l-0.3 1.1 0.3 0.8 1.4 1.2 1.6 0.4 1 -0.2 1 -1.1 -0.2 -1.1 -1.8 -1.6 -2 -0.2zM191.5 241.3l-0.2 1.2 1.2 1.7 2 0.5 1 -0.7 0.2 -0.5 -0.2 -1 -1 -1.2 -1 -0.6 -1 0zM215.5 228.3l-0.6 1.2 0.6 1.6 1 0.9 1 0.2 1 -0.5 0.2 -1.2 -0.3 -1 -0.9 -1 -1 -0.4zM235.5 216.6l-0.6 0.9 -0.1 1 0.4 1 1.3 1.1 1 0 0.6 -1.1 -0.1 -1 -0.5 -1 -1 -0.9zM252.5 206l-0.7 1.5 0.2 1 0.5 0.9 1 0.7 1 -0.5 0.2 -1.1 -0.9 -2zM267.5 196.1l-0.7 0.4 -0.3 0.7 0 1.3 1 1.6 1 0.1 0.4 -0.7 0.1 -1 -0.5 -1.4zM279.5 187.3l-0.3 1.2 0.2 1 1.1 1.6 0.9 -0.6 -0.1 -2 -0.8 -1.4zM291.5 178.4l-1 1.1 0 1 1 2 1 -1 -0.3 -2zM301.5 170.5l-1 1 0 1 1 2 0.7 -1 0.1 -1zM309.5 163.3l0 2.1 1 1.5 0.5 -1.4 0 -1 -0.5 -1.3zM317.5 156.1l0 2.1 1 1.4 0.4 -1.1 -0.3 -2 -0.1 -0.3zM325.5 149.1l-0.5 0.4 -0.3 1 0.8 2.4 0.5 -1.4zM331.5 142.2l-0.3 1.3 0.3 2.3 0.5 -0.3 0.3 -1zM337.5 136l-0.3 1.5 0.3 2.2 0.6 -1.2zM343.5 131.1l-0.4 0.4 -0.1 1 0.5 1.6 0.2 -1.6zM348.5 125.5l-0.4 1 0.4 1.7zM352.5 119.1l0 3.2 0.4 -1.8zM364.5 103.9l0 3.5 0.3 -1.9zM371.5 95l-0.3 1.5 0.3 2.6 0.3 -2.6zM374.5 90.4l-0.3 2.1 0.3 2.5 0.3 -2.5zM382.5 77.9l-0.3 2.6 0.3 2.8 0.4 -2.8zM384.5 73.9l0 4.5 0.3 -1.9zM582.2 330.5l0.3 -0.5 0.5 0 0 17.8 -0.7 -0.3 -2.1 -3 -0.7 -2 -0.4 -2 0 -2 0.6 -3z"/>
<path fill="#463adb" d="M385.7 0l11.5 0 0.1 30.5 0.6 24 0.3 2 0.3 0.3 1 3 1 -2 5 -4.8 4 -3.3 3 -1.7 2 -0.4 1 0.2 0.9 0.7 1 2 0.4 2 0.1 5 -0.6 6 -1.4 8 -1.8 8 -5 18 -8.2 24 -4.4 10.4 -3.5 9.6 -7.8 17 -8 16 -9.2 16 -17.3 26 -18.8 26 -49.4 64.5 -10 11.8 -13 12.9 -9 7.5 -9 5.9 -11 5.5 -12 4.4 -15 3.9 -17 3.1 -18 2.2 -21 1.6 -25 0.8 -24 -0.3 -23 -1.2 -21 -2.3 -18 -3.1 -8 -2 -7 -2.1 -5.4 -2.1 -4.6 -2.3 -3.9 -2.7 -3.1 -2.9 -1.6 -2.1 -1.2 -3 -0.4 -2 0.2 -3 0.5 -2 1.3 -3 1.9 -3 2.5 -3 5.1 -5 6.3 -5 7.2 -5 17.1 -11 5.6 -4 4.5 -4 2.5 -3 1.6 -3 0.7 -3 -0.5 -9 0.3 -4 1.1 -4 2.2 -5 3.5 -6 11.6 -16.9 12.7 -20.1 5.3 -6.7 6 -6 6 -5 6 -4.5 11 -7.4 8 -5 5 -2.1 9 -2.2 12.5 -5.1 15.5 -7.4 15 -6.6 12 -6.3 11.9 -5.7 11.1 -6.4 9 -4.7 9 -5.7 8 -4.4 8 -5.4 7.3 -4.4 6.7 -4.9 7 -4.5 6 -4.8 5 -3.3 5 -4.3 5 -3.5 5 -4.5 4 -2.9 4 -3.9 4.3 -3.4 3.7 -3.7 4 -3.4 3 -3.2 3 -2.6 17 -17.9 2 -2.6 3 -3.1 2 -2.8 2 -1.9 2 -2.8 2 -1.9 2 -2.7 5 -5.4 5 -6.1 7 -7.6 1 -1.5 4 -4 1.2 -1.8zM389.5 68.4l-0.3 2.1 0.3 2.5 0.3 -2.5zM391.5 64.5l-0.4 3 0.4 2.7 0.5 -3.7zM394.5 55.9l-0.7 4.6 -0.9 3 0.6 4.5 1.3 -6.5 0.1 -3zM396.5 57l0 6.7 1 2.7 0.3 -7.9 -0.3 -1.2zM108.5 267.3l-2.9 1.2 -2.4 2 -0.6 1 -0.2 1 0.7 1 1.4 0.7 2 0.3 4 -0.4 3.7 -1.6 1.1 -1 0.6 -1 0 -1 -0.4 -1 -1.2 -1 -2.8 -0.7zM163.5 254.5l-1.4 1 -0.2 1 0.6 1.2 2 1.2 2 0 0.8 -0.4 0.5 -1 -0.2 -1 -0.8 -1 -1.3 -0.8zM192.5 240.5l-1.3 1 -0.1 1 0.4 1 2 1.3 1 0.1 1 -0.4 0.5 -1 -0.5 -1.4 -1 -1zM215.5 228l-0.8 1.5 0.8 1.9 1 0.7 1 0.3 1 -0.4 0.4 -0.5 0 -1 -0.4 -1.1 -1 -1.1 -1 -0.4zM235.5 216.4l-0.8 1.1 0.4 2 1.4 1.3 1 0 0.8 -1.3 -0.1 -1 -0.7 -1.2 -0.9 -0.8zM252.5 205.8l-0.6 0.7 -0.1 2 0.7 1.2 1 0.6 1 -0.3 0.4 -1.5 -0.3 -1 -1.1 -1.5zM267.5 195.9l-1 0.7 -0.1 1.9 1.1 1.8 1 0.2 0.6 -1 0 -1 -0.6 -1.7zM279.5 187l-0.4 1.5 0.2 1 1.2 1.8 1.1 -0.8 -0.2 -2 -0.9 -1.6zM291.5 178.3l-1 0.7 -0.1 0.5 0.3 2 0.8 1.2 1 -0.5 0.1 -0.7 -0.3 -2zM301.5 170.3l-1 0.6 -0.1 0.6 0.1 1.4 1 1.8 0.9 -1.2 -0.3 -2zM309.5 163l-0.1 2.5 1.1 1.6 0.4 -0.6 0.1 -2 -0.5 -1.5zM317.5 155.8l0 2.7 1 1.4 0.5 -1.4 -0.3 -2 -0.2 -0.5zM325.5 148.9l-0.7 0.6 -0.2 1 0.9 2.6 0.5 -1.6zM331.5 142l-0.4 1.5 0.4 2.5 0.9 -0.5 0 -1zM337.5 135.8l-0.4 1.7 0.4 2.4 0.5 -0.4 0.2 -1zM343.5 130.8l-0.6 0.7 0 1 0.6 1.9 0.3 -1.9zM348.5 125.3l-0.5 1.2 0.5 2.1 0.2 -2.1zM352.5 118.9l-0.2 1.6 0.2 2.1 0.5 -1.1zM364.5 103.7l-0.2 1.8 0.2 2.2 0.4 -2.2zM371.5 94.8l-0.3 1.7 0.3 2.9 0.3 -2.9zM374.5 90.2l-0.3 2.3 0.3 2.8 0.4 -2.8zM377.5 87l-0.2 1.5 0.2 2.4zM382.5 77.7l-0.4 2.8 0.4 3.2 0.4 -3.2zM384.5 73.6l-0.2 2.9 0.2 2.4 0.4 -2.4z"/>
<path fill="#463cde" d="M387 0l10.1 0 0.6 52.5 -0.2 3 -1 0.1 -0.3 5.9 0.3 4.1 1 2 1 -9.6 1 3.1 1 -1.8 7 -6.5 3 -2.2 3 -1.1 1 0 1.4 1 0.6 1 0.7 3 0.1 4 -0.5 6 -3 15 -5.6 20 -8 23 -3.7 8.7 -4.3 11.3 -7.4 16 -7.6 15 -9.2 16 -16.8 25 -21.3 29 -46.4 58.8 -11 12.8 -11 10.9 -10 8.6 -10 6.9 -10 5.4 -12 4.8 -14 4 -15 3.1 -17 2.4 -19 1.8 -24 1.1 -25 0.1 -24 -1.1 -21 -2.1 -18 -3 -8 -1.8 -7 -2 -6 -2.3 -5 -2.4 -4 -2.6 -3 -2.7 -2 -2.7 -0.9 -2 -0.5 -2 -0.1 -3 0.5 -2 1.1 -3 1.8 -3 2.4 -3 5 -5 6.2 -5 28.1 -19 4.7 -4 3.3 -4 1.4 -3 0.3 -2 0 -2 -1.1 -7 0.2 -5 1 -4 2.1 -5 3 -5 10.5 -15.6 12.3 -19.4 5.5 -7 6.2 -6.2 5 -4.3 7 -5.3 18 -11.8 5 -2.3 10 -2.7 13.4 -5.4 15.6 -7.4 13 -5.7 14 -7.3 10 -4.8 11 -6.3 10 -5.2 9 -5.7 8.3 -4.6 7.7 -5.2 7.9 -4.8 6.1 -4.5 7 -4.5 6 -4.8 5 -3.3 5 -4.3 5 -3.5 5 -4.5 4 -2.9 4 -3.9 5 -4 3 -3.2 4 -3.3 3 -3.2 3 -2.6 17 -17.9 2 -2.6 3 -3.1 2 -2.8 2 -1.9 2 -2.8 2 -1.9 2 -2.7 2 -1.9 8 -9.6 7 -7.6 1 -1.5 3 -3.3 1 -0.8 1 -1.6 1 -0.7zM387.5 73.4l-0.2 1.1 0.2 1.5zM389.5 67.9l-0.5 2.6 0.5 3.4 0.5 -3.4 -0.2 -2zM391.5 64l-0.4 1.5 -0.2 2 0.6 3.6 0.7 -5.6 0 -1zM394.5 55.6l-1 5.3 -0.7 0.6 -0.3 1 0.4 4 0.6 2.5 1.5 -7.5 0 -3zM107.5 267.3l-2.6 1.2 -2.5 2 -0.9 2 0.4 1 1.6 1 1 0.2 2 0.2 3 -0.3 3 -0.8 2 -1.1 1.3 -1.2 0.5 -1 0.1 -1 -0.4 -1 -1 -1 -1.5 -0.7 -3 -0.2zM163.5 254.3l-1 0.4 -0.6 0.8 -0.2 1 0.8 1.5 1 0.7 2 0.6 1 -0.1 1.2 -0.7 0.4 -1 -0.3 -1 -0.8 -1 -1.5 -1zM192.5 240.3l-1 0.4 -0.6 0.8 0 1 0.4 1 1.1 1 1.1 0.5 2 -0.2 0.7 -1.3 -0.2 -1 -1.5 -1.6zM215.5 227.8l-0.7 0.7 -0.2 1 0.8 2 1.1 0.8 1 0.3 1 -0.3 0.6 -0.8 0 -1 -0.4 -1 -1.2 -1.4 -1 -0.4zM235.5 216.2l-1 1.3 0.4 2 0.6 0.9 1 0.6 1 0.1 0.7 -0.6 0.3 -1 -0.2 -1 -0.5 -1 -1 -1zM252.5 205.6l-0.8 0.9 0 2 0.8 1.4 1 0.6 1 -0.2 0.5 -0.8 -0.3 -2 -1.2 -1.7zM266.5 196.3l-0.3 1.2 0.3 1.6 1 1.4 1 0.2 0.8 -1.2 -0.3 -2 -0.5 -0.9 -1 -0.9zM279.5 186.8l-0.5 1.7 0.2 1 0.3 1 1.2 1 0.8 -0.3 0.2 -0.7 -0.2 -2 -1 -1.7zM291.5 178.1l-1 0.5 -0.2 0.9 0.3 2 0.9 1.4 1 -0.2 0.3 -1.2 -0.4 -2zM300.5 170.5l0 2.8 1 1.6 0.7 -0.4 0.3 -0.9 -0.1 -1.1 -0.9 -2.4zM309.5 162.7l-0.1 2.8 1.1 1.9 0.6 -0.9 0 -2 -0.6 -1.7zM317.5 155.5l-0.1 3 1.1 1.7 0.4 -0.7 0.1 -2 -0.5 -1.7zM325.5 148.7l-0.9 0.8 -0.1 1 1 2.9 0.6 -1.9zM331.5 141.8l-0.4 1.7 0.4 2.8 1 -0.3 0.1 -0.5 -0.3 -2zM337.5 135.6l-0.4 1.9 0.4 2.7 0.8 -0.7 0.1 -1zM343.5 130.6l-0.8 0.9 0 1 0.8 2.2 0.3 -2.2zM348.5 125.1l-0.5 0.4 -0.2 1 0.7 2.4 0.3 -1.4zM352.5 118.7l-0.3 1.8 0.3 2.4 0.6 -1.4zM357.5 115.4l-0.4 1.1 0.4 1.2zM364.5 103.5l-0.3 2 0.3 2.5 0.5 -2.5zM368.5 100.3l-0.3 1.2 0.3 2.4zM371.5 94.6l-0.4 1.9 0.4 3.2 0.4 -3.2zM374.5 90l-0.4 2.5 0.4 3.1 0.4 -3.1zM377.5 86.7l-0.3 1.8 0.3 2.9 0.3 -2.9zM379.5 82.4l0 3 0.3 -0.9zM382.5 77.4l-0.4 3.1 0.4 3.6 0.5 -3.6zM384.5 73.3l-0.3 3.2 0.3 2.9 0.4 -0.9 0.1 -2z"/>
<path fill="#463ee1" d="M388.1 0l9 0 0.5 50.5 -0.1 3 -1 1 -0.4 5 0.1 5 0.6 3 0.7 1.1 1 -9.3 1 2.9 1 -1.5 4 -3.9 3 -2.6 3 -2 2 -0.8 2 0.1 1 0.9 0.6 1.1 0.6 3 0 5 -0.7 6 -3.2 15 -5.8 20 -7 20 -3.5 8 -4.6 12 -8 17 -6.6 13 -10.5 18 -15.7 23 -19.2 26 -20.4 25.6 -33 40.1 -8 8.8 -8 7.8 -11 9.4 -9 6.4 -10 5.7 -11 4.8 -13 4.2 -15 3.5 -18 2.9 -18 1.9 -24 1.3 -24 0.2 -24 -1 -21 -2 -18 -2.8 -8 -1.9 -6.6 -1.9 -6.4 -2.4 -5 -2.4 -4 -2.6 -2.9 -2.6 -1.5 -2 -1 -2 -0.7 -2 -0.2 -3 0.4 -2 1 -3 1.8 -3 2.3 -3 4.9 -5 6.1 -5 27.7 -19 4.5 -4 2.5 -3 1.5 -3 0.4 -3 -1.8 -8 -0.2 -5 0.8 -4 2 -5 4.1 -7 20.9 -32 5.4 -6.8 6 -6.1 5 -4.3 7 -5.3 10 -6.8 8 -5 5 -2.3 10 -2.7 14 -5.7 14 -6.7 14.4 -6.3 12.6 -6.6 11.3 -5.4 11.7 -6.7 9 -4.7 9 -5.7 8.8 -4.9 8.2 -5.6 7 -4.2 6 -4.4 7 -4.5 6 -4.8 5 -3.3 5 -4.3 5 -3.5 5 -4.5 4 -2.9 4 -3.9 5 -4 3 -3.2 4 -3.3 3 -3.2 3 -2.6 17 -17.9 2 -2.6 3 -3.1 2 -2.8 2 -1.9 2 -2.8 2 -1.9 2 -2.7 5 -5.4 5 -6.1 4 -4.2 2 -2.6 1 -0.8 4 -4.8 1 -0.8 1 -1.6 1 -0.7 1.6 -2.1zM389.5 67.4l-0.4 1.1 -0.2 2 0.6 4.2 0.5 -2.2 0.2 -3 -0.1 -1zM394.5 55.3l-1 5 -1 0.5 -0.3 1.7 -0.7 1 -0.6 2 0 4 0.6 2.4 0.6 -2.4 0.4 -3.7 0.4 2.7 0.6 1.5 1.2 -5.5 0.4 -5zM109.5 266.4l-3.4 1.1 -3.3 2 -1.9 2 -0.3 1 0.1 1 1 1 1.8 0.6 5 0 5 -1.4 1.9 -1.2 0.9 -1 0.6 -2 -0.4 -1 -0.9 -1 -1.1 -0.6 -2 -0.6zM162.5 254.4l-0.9 1.1 -0.1 1 0.3 1 1 1 2.7 1 1 -0.1 1.5 -0.9 0.3 -1 -0.2 -1 -1.6 -1.7 -2 -0.7zM191.5 240.4l-0.8 1.1 0 1 0.4 1 1 1 1.4 0.7 1 0.1 1 -0.3 0.7 -0.5 0.2 -1 -0.9 -2 -2 -1.3 -1 -0.1zM215.5 227.6l-0.9 0.9 -0.2 1 0.8 2 1.3 1 1 0.3 1 -0.2 0.8 -1.1 -0.4 -2 -1.4 -1.6 -1 -0.4zM235.5 216l-0.6 0.5 -0.5 1 0.3 2 0.8 1.1 1 0.6 1 0.1 1 -0.8 0 -2 -1.4 -2 -0.6 -0.4zM252.5 205.4l-1 1.1 0.1 2 0.9 1.6 1 0.6 1 -0.1 0.7 -1.1 -0.3 -2 -1.4 -1.9zM266.5 196l-0.4 1.5 0.4 1.9 1 1.3 1 0.2 0.6 -0.4 0.4 -1 -0.4 -2 -0.6 -1.1 -1 -0.8zM279.5 186.6l-0.6 1.9 0.5 2 1.1 1.2 1 -0.1 0.4 -1.1 -0.2 -2 -1.2 -1.9zM290.5 178.3l-0.3 1.2 0.3 2.1 1 1.5 1 -0.1 0.4 -1.5 -0.4 -2 -1 -1.6zM300.5 170.3l-0.3 1.2 0.3 2 1 1.6 1 -0.6 0 -2 -1 -2.5zM309.5 162.5l-0.3 1 0.1 2 0.2 0.8 1 1.3 0.7 -1.1 0 -2 -0.7 -1.9zM317.5 155.3l-0.3 1.2 0.1 2 0.2 0.7 1 1.2 0.5 -0.9 0.1 -2 -0.6 -1.9zM324.5 149.3l0 2.2 1 2.1 0.6 -1.1 0 -2 -0.6 -2zM331.5 141.6l-0.5 1.9 0.2 2 0.3 1 1 0.1 0 -2.8zM337.5 135.4l-0.5 2.1 0.5 2.9 1 -0.9 -0.2 -2zM343.5 130.4l-1 1.1 0.4 2 0.6 1.4 0.4 -2.4zM348.5 124.9l-0.7 0.6 -0.1 1 0.8 2.7 0.3 -1.7zM352.5 118.6l-0.3 1.9 0.3 2.6 0.5 -0.6 0.2 -1zM357.5 115.1l-0.8 0.4 0.8 2.6zM361.5 110.5l-0.5 1 0.5 1.5zM364.5 103.4l-0.3 2.1 0.3 2.8 0.5 -1.8zM368.5 100l-0.4 1.5 0.4 2.8 0.2 -1.8zM371.5 94.4l-0.4 2.1 0.4 3.5 0.4 -3.5zM374.5 89.8l-0.4 2.7 0.4 3.5 0.5 -3.5zM377.5 86.4l-0.4 2.1 0.4 3.4 0.3 -3.4zM379.5 82l0 4 0.4 -0.5 0.1 -1zM382.5 77.2l-0.5 3.3 0.5 4.1 0.6 -4.1zM384.5 73.1l-0.3 3.4 0.3 3.5 0.6 -2.5zM386.5 72.2l0 1.4 1 3.6 0.3 -3.7 -0.3 -1z"/>
<path fill="#4740e3" d="M389.1 0l8 0 0.4 49.5 -0.4 3 -0.6 1 -0.5 7 0 4 0.5 3.8 1 1.3 1 -9 1 2.7 6 -6 5 -3.6 2 -0.7 1 0 1 0.5 1 1.5 0.7 3.5 0 4 -0.7 6 -1.5 8 -2 8 -5 17 -6.9 20 -3.6 8.3 -4.5 11.7 -9.9 21 -10.3 19 -9.6 15 -18.3 26 -12.2 16 -10.2 12.7 -42 50.1 -8 8.8 -8 7.9 -11 9.4 -10 7.3 -10 5.9 -11 5 -13 4.4 -13 3.2 -16 2.9 -18 2.1 -23 1.6 -24 0.4 -24 -0.8 -22 -1.9 -18 -2.8 -8 -1.8 -7 -2.1 -6 -2.2 -5 -2.4 -4.3 -2.7 -2.7 -2.5 -1.8 -2.5 -1 -2 -0.5 -2 0 -3 0.4 -2 1.3 -3 3.4 -5 4.9 -5 6.1 -5 21.9 -15 5.3 -4 4.4 -4 2.4 -3 1.4 -3 0.1 -2 -0.4 -2 -2.1 -6 -0.6 -5 0.7 -4 1.8 -5 3.9 -7 19.5 -30 5.9 -7.6 6 -6 6 -5.1 6 -4.5 11 -7.5 7 -4.4 5 -2.3 10 -2.7 14 -5.7 14 -6.7 14.8 -6.5 12.2 -6.4 11.7 -5.6 11.3 -6.5 9 -4.7 9 -5.7 8 -4.4 8 -5.5 7.2 -4.2 6.8 -5 7 -4.5 6 -4.8 5 -3.3 5 -4.3 5 -3.5 5 -4.5 4 -2.9 4 -3.9 4.2 -3.3 3.8 -3.8 4 -3.4 3 -3.2 3 -2.5 17 -17.9 2 -2.7 3 -3.1 2 -2.8 2 -1.9 2 -2.8 2 -1.9 2 -2.7 2 -1.9 8 -9.6 4 -4.2 2 -2.6 1 -0.8 1 -1.5 4 -4.1 1 -1.5 1 -0.8 1 -1.6 1 -0.8zM389.5 66.9l-0.7 1.6 -0.1 2 0.2 3 0.6 2 0.7 -3 0.2 -4 -0.1 -1zM394.5 55l-1 4.8 -1 0.2 -0.6 2.5 -0.6 1 -0.6 2 0.1 5 0.7 2.3 0.7 -2.3 0.3 -2.3 0.3 1.3 0.7 1.3 1.4 -6.3 0.3 -5zM108.5 266.4l-4 1.5 -3.6 2.6 -1.3 2 -0.1 1 0.6 1 1.4 0.7 2 0.4 3 0.1 3 -0.4 3 -0.8 2 -0.9 2.3 -2.1 0.5 -2 -0.3 -1 -1.5 -1.5 -3 -1zM162.5 254.2l-1.2 1.3 -0.1 1 0.4 1 0.9 1.1 1 0.6 2 0.5 2 -0.4 0.9 -0.8 0.2 -1 -0.3 -1 -1.8 -1.9 -2 -0.7zM191.5 240.2l-1 1.3 0 1 0.4 1 0.9 1 1.7 0.9 1 0.1 1 -0.2 1 -0.8 0.2 -1 -0.3 -1 -0.9 -1.2 -2 -1.3 -1 -0.1zM215.5 227.4l-1.1 1.1 -0.2 1 0.3 1.2 1 1.4 1 0.6 2 0.2 0.5 -0.4 0.6 -1 -0.5 -2 -1.6 -1.7 -1 -0.5zM235.5 215.8l-0.9 0.7 -0.3 1 0.3 2 0.9 1.3 1 0.6 1.1 0.1 1.2 -1 -0.1 -2 -1.2 -1.9 -1 -0.7zM252.5 205.2l-1.1 1.3 0 2 1.1 1.8 1 0.6 1 0 0.8 -1.4 -0.3 -2 -1.4 -2zM267.5 195.4l-1 0.4 -0.3 0.7 -0.1 2 1 2 1.4 0.7 0.9 -0.7 0.1 -2 -0.8 -2zM279.5 186.4l-0.7 2.1 0.5 2 1.2 1.5 1 -0.2 0.5 -1.3 -0.2 -2 -1.3 -2.1zM290.5 178.1l-0.4 1.4 0.4 2.4 1 1.4 1 0 0.5 -1.8 -0.4 -2 -1.1 -1.7zM300.5 170l-0.3 1.5 0.2 2 1.1 1.9 1 -0.5 0.1 -2.4 -1.1 -2.7zM309.5 162.3l-0.4 1.2 0.1 2 0.3 1.1 1 1.2 0.9 -1.3 -0.1 -2 -0.8 -2.1zM317.5 155.1l-0.3 1.4 0.1 2 0.2 1 1 1.2 0.6 -1.2 0.1 -2 -0.7 -2.1zM325.5 148.3l-1 0.7 -0.1 1.5 0.1 1.2 1 2.1 0.7 -1.3 0.1 -1zM331.5 141.5l-0.5 2 0.1 2 0.4 1.3 1 0.2 0.2 -1.5 -0.2 -2zM337.5 135.3l-0.5 2.2 0.5 3.2 1 -0.4 0.1 -0.8 -0.2 -2zM343.5 130.2l-0.8 0.3 -0.2 1 0.2 2 0.8 1.7 0.5 -2.7zM348.5 124.6l-0.9 0.9 -0.1 1 1 3 0.4 -2zM352.5 118.4l-0.4 2.1 0.4 2.9 0.8 -0.9 0 -1zM356.5 114.8l0 1.3 1 2.5 0.2 -2.1 -0.2 -1.7zM360.5 109.9l0 1.1 1 2.5 0 -3.4zM364.5 103.2l-0.3 2.3 0.3 3 0.6 -2zM368.5 99.8l-0.5 1.7 0.5 3.2 0.3 -2.2zM371.5 94.2l-0.5 2.3 0.5 3.9 0.5 -3.9zM374.5 89.6l-0.5 2.9 0.5 3.8 0.5 -3.8zM377.5 86.2l-0.5 2.3 0.5 3.8 0.4 -2.8zM379.5 81.7l0 4.9 0.4 -0.1 0.4 -1zM382.5 77l-0.5 3.5 0.5 4.5 0.4 -1.5 0.2 -3zM384.5 72.8l-0.4 3.7 0.4 4 0.7 -1 0.1 -1 -0.2 -3zM386.5 71.1l0 3.9 1 3.1 0.5 -2.6 -0.1 -3z"/>
<path fill="#4742e6" d="M390.1 0l6.9 0 0.4 47.5 -0.2 3 -0.7 2.1 -0.7 9.9 0.7 6.9 1 1.1 1 -8.4 1 2.1 6 -5.7 4 -2.9 2 -0.9 2 0.1 1 0.9 0.4 0.8 0.7 3 0 4 -0.6 6 -3 14 -4.9 17 -7.3 21 -7.7 19 -7.9 17 -7.2 14 -10 17 -17.3 25 -19 25 -19.2 23.4 -34 39.2 -7 7.5 -7 6.8 -10 8.6 -11 8 -10 6 -11 5.2 -13 4.6 -13 3.3 -16 3 -17 2.2 -23 1.6 -23 0.5 -23 -0.7 -22 -1.9 -18 -2.8 -8 -1.8 -7 -2 -6 -2.2 -5 -2.5 -4 -2.6 -2.5 -2.4 -1.6 -2 -1 -2 -0.5 -2 -0.1 -3 0.4 -2 1.1 -3 3.4 -5 4.8 -5 6.1 -5 20.3 -14 6.7 -5 4.3 -4 2.4 -3 1.1 -3 -0.2 -2 -3.1 -7 -0.6 -2.1 -0.4 -2.9 0.4 -4 1.7 -5 4.3 -8 18.3 -28 5.7 -7.4 6 -6.1 6 -5.1 6 -4.5 11 -7.5 7 -4.3 5 -2.3 10.1 -2.8 12.9 -5.2 15 -7.2 15 -6.6 12 -6.3 11.9 -5.7 11.1 -6.4 9 -4.6 9 -5.7 8 -4.5 8 -5.4 7.4 -4.4 6.6 -4.9 7 -4.5 6 -4.8 5 -3.3 5 -4.2 5 -3.6 5 -4.5 4 -2.9 4 -3.9 4.3 -3.4 3.7 -3.7 4 -3.3 3 -3.3 3 -2.5 17 -17.9 2 -2.7 3 -3.1 2 -2.8 2 -1.9 2 -2.7 2 -1.9 2 -2.8 2 -1.9 5 -6.1 1 -0.8 8 -9.5 1 -0.7 4 -4.9 1 -0.7 1 -1.6 1 -0.8 3.6 -4.4zM394.5 54.6l-1 4.8 -1 0 -0.5 2.1 -1 2 -0.5 2 -1 1 -0.9 2 0.1 5 0.8 2.8 0.6 -1.8 0.4 -3.7 0.3 1.7 0.7 1.1 1 -3.1 1 1.2 0.6 -2.2 0.9 -4 0.3 -3 -0.1 -4zM107.5 266.3l-4 1.8 -3.4 2.4 -1.6 2 -0.2 1 0.3 1 1.4 1 2.5 0.5 6 -0.2 3 -0.7 3 -1.2 2 -1.4 0.8 -1 0.5 -2 -0.3 -1 -0.8 -1 -1.2 -0.9 -2 -0.7 -2 -0.2zM162.5 254l-1 0.8 -0.5 1.7 0.3 1 1.2 1.3 1 0.6 2 0.5 2 -0.3 1 -0.8 0.4 -1.3 -0.3 -1 -1.1 -1.4 -1 -0.7 -2 -0.7zM191.5 240l-1 1.1 -0.2 1.4 1.2 2 1 0.7 2 0.5 1 -0.1 1 -0.7 0.4 -1.4 -0.3 -1 -1.1 -1.5 -2 -1.2zM215.5 227.2l-1.3 1.3 -0.1 1 0.4 1.6 1 1.2 1 0.6 2 0.2 0.9 -0.6 0.4 -1 -0.5 -2 -1.8 -1.9 -1 -0.4zM234.5 216.4l-0.4 2.1 0.9 2 1.5 1.1 1 0.2 1 -0.5 0.5 -0.8 0.1 -1 -0.7 -2 -0.8 -1 -1.1 -0.7 -1 -0.2zM252.5 205l-0.7 0.5 -0.6 1 0.1 2 1.2 2.1 1 0.5 1 0 0.7 -0.6 0.3 -1 -0.3 -2 -1.4 -2zM267.5 195.2l-1 0.3 -0.5 1 0 2 0.9 2 0.6 0.6 1 0.3 1.1 -0.9 0.1 -2 -0.8 -2zM279.5 186.2l-0.7 1.3 -0.1 1 0.4 2 1.4 1.7 1 -0.1 0.7 -1.6 -0.3 -2 -1.4 -2.3zM290.5 177.9l-0.4 1.6 0.4 2.7 1 1.4 1 0 0.6 -1.1 0 -1 -0.4 -2 -1.2 -1.9zM300.5 169.8l-0.4 1.7 0.2 2 1.1 2 0.6 0 0.5 -0.2 0.3 -0.8 0 -2 -1.3 -2.9zM309.5 162.1l-0.4 1.4 0 2 0.4 1.4 1 1.2 0.7 -0.6 0.3 -0.8 -0.1 -2.2 -0.9 -2.2zM317.5 154.9l-0.4 1.6 0.1 2 0.3 1.2 1 1.2 0.8 -1.4 -0.1 -2 -0.7 -2.3zM325.5 148.2l-1 0.4 -0.2 1.9 0.2 1.6 1 2 0.5 -0.6 0.4 -2zM331.5 141.3l-0.6 2.2 0.2 2 0.4 1.5 1 0.3 0.3 -2.8 -0.3 -1.4zM337.5 135.1l-0.6 2.4 0.6 3.4 1 -0.1 0.2 -1.3 -0.2 -2zM342.5 130.4l0 2.8 1 2.3 0.5 -2 -0.1 -2 -0.4 -1.5zM348.5 124.4l-1 0.8 0 1.3 1 3.3 0.5 -2.3zM352.5 118.2l-0.4 2.3 0.4 3.2 1 -1.2 -0.2 -2zM356.5 114.3l0 2.5 1 2.1 0.3 -2.4 -0.3 -2zM360.5 109.3l0 2.4 1 2.2 0.2 -2.4 -0.2 -1.7zM364.5 103l-0.4 2.5 0.4 3.3 0.7 -1.3 0 -1zM368.5 99.5l-0.6 2 0.6 3.5 0.4 -2.5zM371.5 94l-0.5 2.5 0.5 4.2 0.5 -3.2zM374.5 89.4l-0.5 3.1 0.5 4.2 0.6 -3.2zM377.5 85.9l-0.6 2.6 0.6 4.2 0.5 -3.2zM379.5 81.4l-0.2 3.1 0.2 2.6 1 0.8 0 -2.9zM382.5 76.8l-0.6 3.7 0.6 5 0.6 -2 0.1 -2 -0.2 -3zM384.5 72.6l-0.4 3.9 0.4 4.6 0.9 -0.6 0.2 -1 -0.4 -4zM386.5 70.5l-0.2 5 1.2 3.4 0.7 -3.4 0.1 -4 -0.8 -0.2z"/>
<path fill="#4744e8" d="M391 0l6 0 0.3 46.5 -0.2 3 -0.6 2.2 -0.9 10.8 0.2 4 0.7 3.9 1 0.9 1 -7.6 1 1.5 7 -6.3 4 -2.4 2 -0.3 1 0.5 0.7 0.8 0.7 2 0.3 3 -0.4 6 -1.2 7 -1.8 8 -2.7 10 -8 24 -8.4 21 -9.8 21 -10.8 20 -8.2 13 -17.7 25 -17.2 22 -19.5 23.3 -33 37.1 -13 13.1 -11 9.4 -11 7.9 -10 5.9 -11 5.2 -12 4.3 -13 3.5 -15 2.9 -17 2.3 -22 1.7 -23 0.6 -23 -0.6 -21 -1.8 -17 -2.5 -8 -1.8 -7 -1.9 -6 -2.2 -5 -2.3 -4 -2.5 -3 -2.6 -1.6 -2 -1.1 -2 -0.6 -2 -0.1 -3 0.3 -2 1.2 -3 3.3 -5 4.9 -5 6 -5 20.2 -14 6.6 -5 4.3 -4 2.3 -3 0.8 -2 -0.1 -2 -4.4 -8 -1 -4 0.2 -4 1.4 -5 1.9 -4 2.9 -5 16.6 -25.4 6 -7.8 6 -6.2 6 -5.1 7 -5.2 10 -6.8 7 -4.3 5 -2.3 11 -3.2 12 -4.9 15 -7.1 14 -6.1 13 -6.8 12 -5.8 11 -6.4 9 -4.6 9 -5.7 8 -4.4 8 -5.5 7.4 -4.4 6.6 -4.9 7 -4.4 5 -4.1 6 -4 5 -4.3 5 -3.5 5 -4.5 4 -2.9 4 -3.9 4.4 -3.5 3.6 -3.7 4 -3.3 3 -3.3 3 -2.5 17 -17.9 2 -2.6 3 -3.2 2 -2.7 2 -1.9 2 -2.8 2 -1.9 2 -2.7 2 -1.9 5 -6.2 1 -0.8 8 -9.4 1 -0.8 4 -4.8 1 -0.8 1 -1.5 1 -0.8 1 -1.5 3 -3.2zM394.5 54.3l-1 4.7 -1 0 -0.6 2.5 -1.1 2 -0.7 2 -1.4 2 -0.7 3 -0.5 0.4 -1 -0.8 -0.5 6.4 -0.5 0.6 -1 -4.7 -0.5 5.1 0.5 4.3 1 -0.1 0.7 -4.2 0.3 -0.2 1 2.4 0.6 -2.2 0.4 -3.5 0.2 1.5 0.8 1.5 0.6 -1.5 0.4 -2.1 1 1 1 -2.1 1 0.2 1.5 -6 0.4 -3 -0.1 -5zM110.5 265.5l-4.4 1 -4.1 2 -3.8 3 -1.2 2 0 1 0.8 1 1.7 0.7 3 0.4 3 -0.1 6 -1 4.4 -2 1.6 -1.6 0.7 -1.4 0 -1 -0.7 -1.7 -1.5 -1.3 -1.5 -0.6zM163.5 253.5l-2 0.9 -0.7 1.1 0 1 0.7 1.6 1 1 2 0.8 2 0.1 1.6 -0.5 0.9 -1 0.2 -1 -1 -2 -2.7 -1.8zM191.5 239.8l-0.9 0.7 -0.5 1 0.4 2 0.7 1 2.3 1.2 2 0.1 1 -0.5 0.6 -0.8 0.1 -1 -1 -2 -1.1 -1 -1.6 -0.8zM215.5 227l-1 0.7 -0.5 0.8 -0.1 1 0.6 2 1 1 2 0.9 1 -0.1 1 -0.5 0.5 -1.3 -0.1 -1 -1.1 -2 -1.3 -1.1 -1 -0.4zM235.5 215.5l-1.2 1 -0.3 1 0.2 2 1.3 1.7 1 0.6 1 0.2 1 -0.4 0.7 -1.1 0.1 -1 -0.8 -2 -1 -1.3 -1 -0.6zM252.5 204.8l-1 0.7 -0.4 1 0.1 2 1.3 2.3 1 0.5 1 0.1 1 -0.9 0.2 -1 -0.4 -2 -1.3 -2zM266.5 195.3l-0.7 2.2 0.3 2 1.4 1.8 1 0.4 1 -0.6 0.3 -0.6 0.1 -1 -0.4 -2 -1.3 -2 -0.7 -0.4zM279.5 186l-0.8 1.5 0.3 3 0.5 1 1 0.9 1 0 0.7 -0.9 0.1 -1 -0.3 -2 -1.5 -2.4zM291.5 177.4l-1 0.2 -0.5 2.9 0.5 2 1 1.3 1 0.1 0.7 -1.4 -0.1 -2 -0.6 -1.8zM301.5 169.5l-1 0.1 -0.5 1.9 0.5 3 1 1.3 1 -0.1 0.5 -2.2 -0.4 -2zM309.5 161.9l-0.5 1.6 0 2 0.5 1.7 1 1.1 1 -0.8 0.1 -2 -0.9 -3 -0.2 -0.4zM317.5 154.7l-0.5 1.8 0.1 2 0.4 1.5 1 1.2 0.6 -0.7 0.3 -1 -0.1 -2 -0.8 -2.4zM324.5 148.4l-0.2 3.1 0.2 1 1 1.8 0.8 -0.8 0 -3 -0.8 -2.5zM331.5 141.2l-0.6 2.3 0.1 2 0.5 1.8 1 0.4 0.3 -1.2 0 -2 -0.3 -1.6zM337.5 135l-0.6 2.5 0.1 2 0.5 1.7 1 0 0.3 -1.7 -0.2 -2zM342.5 130.1l0 3.5 1 2.2 0.6 -2.3 -0.1 -2 -0.5 -1.7zM348.5 124.2l-1 0.5 -0.1 1.8 0.1 1.1 1 2.5 0.5 -2.6zM352.5 118.1l-0.4 2.4 0.4 3.4 1 -0.4 0.1 -1 -0.2 -2zM356.5 113.9l0 3.3 1 2.1 0.3 -2.8 -0.2 -2zM360.5 108.9l0 3.3 1 2.1 0.3 -2.8 -0.3 -2zM364.5 102.9l-0.4 2.6 0.4 3.6 0.6 -0.6 0.2 -1 -0.1 -2zM368.5 99.3l-0.7 2.2 0.7 3.9 0.4 -2.9zM371.5 93.9l-0.6 2.6 0.6 4.5 0.6 -3.5zM374.5 89.3l-0.6 3.2 0.6 4.5 0.6 -3.5zM377.5 85.7l-0.6 2.8 0.6 4.7 0.5 -3.7zM379.5 81.1l-0.2 5.4 0.2 1.2 1 1.1 0.2 -3.3zM382.5 76.5l-0.6 4 0.1 3 0.5 2.5 0.5 -1.5 0.3 -3 -0.3 -3z"/>
<path fill="#4746ea" d="M392 0l4.9 0 0.3 41.5 -0.2 7 -0.5 2.3 -1 10.5 -0.3 -3.8 -0.7 -3.4 -1 4.4 -1 0.1 -0.8 2.9 -1.9 4 -1.3 1.9 -0.4 2.1 -0.6 1 -1 -0.8 -0.5 4.8 -0.5 1.8 -1 -4.2 -0.5 6.4 0.1 3 0.4 0.9 1 0.3 1 -4.2 1 1.9 0.7 -1.9 0.3 -2.2 1 1.5 1 -2.6 1 0 1 -1.4 1 -0.5 2 -8.3 1 6.4 1 0.7 1 -6.7 1 0.7 1 -0.5 5 -4.7 4 -2.7 2 -0.5 1 0.1 1 0.8 1 2.8 0.2 3.1 -0.4 5 -1.2 7 -4.3 17 -7.9 24 -8 20 -9.8 21 -10.8 20 -8.2 13 -17.8 25 -17.3 22 -18.5 21.8 -34 37.5 -13 13 -11 9.4 -11 7.9 -11 6.5 -11 5.2 -12 4.3 -14 3.8 -15 2.9 -15 2 -21 1.7 -22 0.6 -22 -0.5 -21 -1.6 -18 -2.7 -14 -3.5 -6 -2.1 -4.7 -2.2 -4.3 -2.7 -2.7 -2.3 -1.7 -2 -1.1 -2 -0.6 -2 -0.2 -3 0.3 -2 1.2 -3 3.3 -5 4.9 -5 6 -5 20.1 -14 6.6 -5 4.4 -4 2.3 -3 0.7 -2 -0.5 -2 -4.7 -6 -1.7 -4 -0.4 -2 0.1 -3 1.3 -5 1.7 -4 2.9 -5 15.6 -24 6.1 -8 6.1 -6.3 6 -5.2 7 -5.2 10 -6.8 7 -4.3 5 -2.3 10.1 -2.9 12.9 -5.2 15 -7.1 14 -6.1 13 -6.9 12 -5.7 11 -6.4 9 -4.6 9 -5.7 8 -4.4 8 -5.5 7.4 -4.4 6.6 -4.9 7 -4.4 5 -4.1 6 -4 5 -4.3 5 -3.5 5 -4.5 4 -2.9 4 -3.9 4.4 -3.5 3.6 -3.7 4 -3.3 3 -3.3 3 -2.5 17 -17.9 2 -2.6 3 -3.2 2 -2.7 2 -1.9 2 -2.8 2 -1.9 2 -2.7 2 -1.9 5 -6.2 1 -0.8 8 -9.4 1 -0.7 4 -4.9 1 -0.8 1 -1.5 1 -0.8 5.5 -6.5zM108.5 265.5l-5.5 2 -4.7 3 -2.8 3 -0.3 1 0.4 1 1.7 1 3.2 0.5 4 0 4 -0.5 3 -0.7 3.4 -1.3 1.6 -1 1.8 -2 0.4 -2 -0.3 -1 -0.6 -1 -1.3 -1.1 -2 -0.9 -2 -0.3zM163.5 253.3l-2 0.8 -0.9 1.4 0.2 2 0.7 1 2 1.3 2 0.5 2 -0.3 1.1 -0.5 0.7 -1 0.1 -1 -1 -2 -1.9 -1.5zM192.5 239.3l-1 0.2 -1.2 1 -0.4 1 0.4 2 1.2 1.5 2 0.9 2 0.1 1 -0.4 0.8 -1.1 0.1 -1 -0.9 -1.9 -2 -1.7zM214.5 227.4l-0.6 1.1 -0.2 1 0.8 2.2 2 1.6 2 0.3 1 -0.5 0.5 -0.6 0.2 -1 -0.1 -1 -1.1 -2 -1.5 -1.3 -1 -0.4 -1 0zM235.5 215.3l-1 0.6 -0.4 0.6 -0.3 1 0.3 2 1.4 2 1 0.5 1 0.2 1 -0.3 0.9 -1.4 -0.2 -2 -1.7 -2.5 -1 -0.6zM251.5 205.3l-0.6 2.2 0.6 2.2 1 1.3 1 0.6 1.3 -0.1 0.7 -0.6 0.4 -1.4 -0.9 -3 -1.5 -1.6 -1 -0.2zM266.5 195.1l-0.7 1.4 -0.1 1 0.3 2 1.5 2 1 0.4 1 -0.4 0.5 -1 0 -2 -1.5 -2.9 -1 -0.7zM279.5 185.8l-0.9 1.7 0.3 3 0.6 1.2 0.9 0.8 1.1 0.2 0.9 -1.2 -0.3 -3 -0.6 -1.4 -1 -1.2zM290.5 177.4l-0.6 2.1 0.2 2 0.4 1.3 1 1.2 1 0.2 0.9 -1.7 -0.4 -3 -1.5 -2.2zM300.5 169.4l-0.6 2.1 0.5 3 1.1 1.6 1 -0.1 0.6 -1.5 -0.4 -3 -1.2 -2.2zM309.5 161.7l-0.6 1.8 0.1 2 0.5 1.9 1 1.2 1 -0.7 0.2 -2.4 -0.9 -3 -0.3 -0.6zM317.5 154.5l-0.5 2 0 2 0.5 1.8 1 1.1 0.9 -0.9 0.1 -0.7 -0.1 -2.3 -0.9 -2.6zM324.5 148.1l-0.2 3.4 0.2 1.3 1 1.8 1 -1.1 -0.1 -3 -0.9 -2.7zM331.5 141l-0.7 2.5 0.1 2 0.6 2 1 0.5 0.4 -1.5 0 -2 -0.4 -1.9zM337.5 134.8l-0.7 2.7 0.2 2 0.5 1.9 1 0.2 0.3 -3.1 -0.4 -2zM342.5 129.8l-0.1 3.7 1.1 2.5 0.6 -1.5 -0.1 -3 -0.5 -1.9zM347.5 124.4l0 3.6 1 2.4 0.5 -1.9 -0.1 -3 -0.4 -1.4zM352.5 117.9l-0.5 2.6 0.5 3.7 1 -0.1 0.1 -1.6 -0.2 -2zM356.5 113.6l0 4 1 2 0.4 -2.1 -0.1 -2 -0.3 -1.4zM360.5 108.6l0 4 1 2 0.3 -2.1 -0.1 -2 -0.2 -1.2zM364.5 102.7l-0.4 2.8 0.4 3.9 0.9 -0.9 0 -1 -0.3 -3zM368.5 99.1l-0.7 1.4 -0.1 1 0.8 4.2 0.5 -3.2zM371.5 93.7l-0.6 2.8 0.6 4.9 0.5 -1.9 0.1 -2zM374.5 89.1l-0.6 3.4 0.6 4.9 0.6 -1.9 0.1 -2zM377.5 85.4l-0.7 3.1 0.2 3 0.5 2.1 0.5 -2.1 0.1 -2zM379.5 80.9l-0.3 3.6 0.2 3 0.1 0.7 1 1.3 0.3 -2 0 -3zM382.5 76.3l-0.7 5.2 0.2 3 0.5 2 0.7 -2 0.1 -2 -0.2 -4z"/>
<path fill="#4848ec" d="M392.9 0l4 0 0 47.5 -1.4 12.4 -0.3 -3.4 -0.7 -2.7 -1 4.4 -1 0 -1 3.3 -1 1.6 -0.4 1.4 -1.6 2.4 -0.6 2.6 -0.4 0.6 -1 -0.8 -1 6.4 -1 -3.8 -0.6 4.6 0.1 6 0.5 0.7 1 0.4 1 -3.8 1 1.3 1 -3 1 0.4 1 -1.9 3 -2.5 2 -7 1 5.2 1 0.6 1 -6 1 0.1 1 -0.3 3 -3 3 -2.5 2 -1.3 2 -0.7 1 -0.1 1 0.4 0.8 1 0.6 2 0.3 3 -0.4 5 -1.1 7 -1.9 8 -2.8 10 -7 21 -8.8 22 -9.9 21 -10.4 19 -8.9 14 -18.1 25 -16.4 20.6 -18 20.9 -34 36.9 -12 12 -10 8.7 -11 8.1 -11 6.9 -11 5.5 -13 4.9 -13 3.7 -15 3.1 -15 2.2 -21 1.9 -22 0.7 -22 -0.4 -20 -1.5 -18 -2.7 -14 -3.3 -6 -2.1 -5 -2.3 -4 -2.5 -3 -2.6 -2.5 -3.7 -0.7 -2 -0.2 -3 0.4 -2 1.1 -3 3.4 -5 3.8 -4 5.9 -5 21.3 -15 6.6 -5 4.6 -4 2.5 -3 0.6 -2 -0.3 -1 -6.2 -6 -1.4 -2 -0.9 -2 -0.5 -2 -0.1 -3 1.1 -5 1.6 -4 2.8 -5 14.3 -22 5.9 -8 6.9 -7.3 6 -5.2 7 -5.2 10 -6.9 7 -4.3 5 -2.2 12 -3.7 12 -4.9 14 -6.7 15 -6.6 12 -6.3 11.9 -5.7 11.1 -6.4 9 -4.6 9 -5.7 8 -4.5 8 -5.4 7.4 -4.4 6.6 -4.9 7 -4.5 6 -4.8 5 -3.3 5 -4.2 5 -3.6 5 -4.5 4 -2.9 4 -3.9 4.4 -3.4 3.6 -3.7 4 -3.3 3 -3.3 3 -2.5 17 -17.9 2 -2.7 3 -3.1 2 -2.8 2 -1.9 2 -2.7 2 -1.9 2 -2.8 2 -1.9 8 -9.6 1 -0.8 2 -2.6 1 -0.7 2 -2.6 1 -0.8 1 -1.5 3 -3.4 1 -0.7 1 -1.6 1 -0.7 1 -1.5 5 -5.4zM107.5 265.4l-5.3 2.1 -4.9 3 -3.4 3 -0.6 1 -0.2 1 0.4 0.6 0.4 0.4 1.6 0.6 3 0.5 4 0 5 -0.5 4 -0.9 3 -1.2 2.6 -1.5 1.7 -2 0.3 -2 -0.2 -1 -0.6 -1 -1.8 -1.4 -2 -0.9 -2 -0.3zM162.5 253.3l-1.7 1.2 -0.5 1 0.3 2 0.9 1.3 2 1.2 2 0.5 2 -0.2 1.5 -0.8 0.7 -1 0 -1 -1.2 -2.2 -1 -0.9 -2 -1 -2 -0.3zM191.5 239.3l-1 0.7 -0.8 1.5 0.4 2 0.6 1 1.3 1 1.5 0.6 2 0.1 1.5 -0.7 0.6 -1 0 -1 -1.1 -2.2 -2.5 -1.8 -1.5 -0.3zM214.5 227.2l-0.8 1.3 -0.1 1 0.1 1 0.8 1.5 2 1.5 2 0.3 1 -0.4 0.8 -0.9 0.2 -1 -0.6 -2 -0.7 -1 -1 -1 -1.7 -0.9 -1 0zM235.5 215.1l-1 0.5 -0.6 0.9 -0.2 1 0.2 2 1.6 2.2 2 0.7 1 -0.2 0.8 -0.7 0.4 -1 -0.3 -2 -1.9 -2.7 -1 -0.6zM252.5 204.5l-1.3 1 -0.3 1 0 2 0.6 1.5 1 1.2 1 0.6 1 0.1 1 -0.6 0.4 -0.8 0 -2 -1.4 -2.9 -1 -0.9zM266.5 194.9l-0.8 1.6 0.2 3 0.6 1.3 1 1 1 0.3 1 -0.3 0.7 -1.3 -0.4 -3 -1.3 -2.1 -1 -0.7zM279.5 185.6l-1 1.9 0.3 3 1.3 2 0.4 0.4 1 0.1 1.1 -1.5 -0.3 -3 -0.8 -1.6 -1 -1.2zM290.5 177.2l-0.7 2.3 0.2 2 0.8 2 0.7 0.7 1 0.2 0.8 -0.9 0.2 -0.8 -0.2 -2.2 -0.7 -2 -0.7 -1 -0.4 -0.4zM300.5 169.2l-0.7 2.3 0.5 3 1.2 1.8 1 0 0.7 -1.8 -0.4 -3 -1.3 -2.4zM309.5 161.5l-0.6 2 0 2 0.6 2.2 1 1.1 1 -0.4 0.3 -2.9 -0.9 -3 -0.4 -0.8zM317.5 154.3l-0.6 2.2 0.1 2 0.5 2.1 1 1.1 1 -1 0.1 -2.2 -0.4 -2 -0.7 -1.8zM324.5 147.9l-0.3 3.6 0.3 1.6 1 1.7 1 -0.8 0.1 -2.5 -0.3 -2 -0.8 -1.8zM331.5 140.8l-0.6 1.7 0 3 0.6 2.3 1 0.5 0.5 -1.8 0 -2 -0.5 -2.1zM337.5 134.7l-0.6 1.8 0 3 0.6 2.2 1 0.3 0.4 -1.5 0 -2 -0.4 -2zM343.5 129.4l-1 0.1 -0.2 2 0.2 2.9 1 1.9 0.5 -0.8 0.2 -2zM347.5 124.1l0 4.4 1 2.1 0.6 -2.1 -0.1 -3 -0.5 -1.6zM352.5 117.7l-0.5 2.8 0.1 2 0.4 2 1 0.1 0.2 -2.1 -0.2 -2zM356.5 113.4l0 4.6 1 1.9 0.4 -2.4 0 -2 -0.4 -1.7zM360.5 108.3l0 4.7 1 2 0.4 -2.5 -0.1 -2 -0.3 -1.5zM364.5 102.5l-0.5 3 0.5 4.2 1 -0.7 0.1 -1.5 -0.4 -3zM368.5 98.9l-0.5 0.6 -0.4 2 0.2 2 0.7 2.6 0.5 -3.6zM371.5 93.5l-0.7 3 0.2 3 0.5 2.2 0.5 -1.2 0.2 -2 0 -2zM374.5 88.9l-0.7 3.6 0.2 3 0.5 2.3 0.5 -1.3 0.2 -3zM377.5 85.2l-0.5 1.3 -0.3 2 0.2 3 0.6 2.5 0.5 -1.5 0.2 -3zM379.5 80.7l-0.3 2.8 0.1 4 0.2 1.3 1 1.4 0.5 -2.7 -0.1 -3zM382.5 76.1l-0.5 2.4 -0.2 3 0.2 4 0.5 1.5 0.7 -1.5 0.2 -2 -0.2 -5z"/>
<path fill="#484aee" d="M393.6 0l3.2 0 0.2 42.5 -1.2 14 -0.3 2.4 -1 -5.4 -1 4.3 -1 0 -1 3.5 -1 1.3 -0.6 1.9 -1.4 1.9 -0.9 3.1 -0.1 0.2 -1 -0.7 -1 6.2 -1 -3.5 -1 10.5 -0.3 -3.7 -0.7 -2.6 -0.6 2.6 -0.2 3 0.1 4 0.6 2 0.8 -1 0.6 -2 0.7 -0.6 1 0.4 1 -3.2 1 0.7 1 -2.2 1 -0.3 1 -1.5 3 -2.9 2 -6.3 1 4.5 1 0.6 1 -5.3 2 -0.8 3 -2.9 3 -2.4 2 -1.2 2 -0.6 1 0.1 1 0.7 0.6 1.2 0.5 2 0.1 3 -0.6 6 -1.3 7 -4.9 18 -6.8 20 -8.1 20 -10 21 -5.9 11 -5.1 9 -9.2 14 -16.7 23 -16.6 20.7 -18 20.7 -21 22.6 -16 16.7 -9 8.8 -10 8.7 -11 8.2 -11 6.8 -11 5.6 -12 4.7 -13 3.9 -14 3.1 -15 2.3 -21 2.1 -22 0.8 -22 -0.3 -20 -1.5 -17 -2.5 -14 -3.3 -6 -2 -4.7 -2.1 -4.3 -2.6 -3 -2.4 -1.7 -2 -1.1 -2 -0.7 -2 -0.1 -3 0.3 -2 1.2 -3 3.4 -5 3.8 -4 4.7 -4 28.1 -20 7.4 -6 2.9 -3 0.3 -1 -0.7 -1 -6.8 -3.8 -2 -1.6 -2 -2.6 -1 -2.2 -0.5 -2.8 0.6 -5 1.4 -4 3.1 -6 12.9 -20 6.6 -9 6.9 -7.4 5 -4.4 6 -4.6 10 -6.9 8 -5.1 6 -2.8 11 -3.3 13 -5.3 14 -6.7 14.9 -6.5 12.1 -6.4 11.7 -5.6 11.3 -6.5 9 -4.6 9 -5.7 8 -4.5 8 -5.4 7.2 -4.3 6.8 -5 7 -4.5 6 -4.8 5 -3.3 5 -4.2 5 -3.6 5 -4.5 4 -2.9 4 -3.9 4.2 -3.3 3.8 -3.8 4 -3.3 3 -3.3 3 -2.5 17 -17.9 2 -2.7 3 -3.1 2 -2.8 2 -1.9 2 -2.7 2 -1.9 2 -2.8 5 -5.3 2 -2.7 1 -0.8 5 -6.1 1 -0.7 7 -8.3 1 -0.7 1 -1.5 1 -0.8 1 -1.5 5 -5.3 1.1 -1.6zM106.5 265.4l-5.1 2.1 -5.2 3 -5.3 4 -1 1 -0.4 1 1.3 1 4.7 0.7 5 0 6 -0.6 4 -0.8 4 -1.4 3.2 -1.9 1.6 -2 0.3 -1 -0.3 -2 -1.5 -2 -1.7 -1 -2.6 -0.7 -2 -0.2zM162.5 253.1l-1 0.5 -1 0.9 -0.4 1 0.2 2 1.2 1.6 2 1.1 2 0.5 2.1 -0.2 1.8 -1 0.6 -1 0 -1 -0.3 -1 -1.2 -1.5 -3 -1.8 -2 -0.3zM191.5 239.1l-1 0.6 -1 1.8 0.3 2 0.7 1 2 1.5 2 0.5 2 -0.3 0.9 -0.7 0.5 -1 0 -1 -1.4 -2.5 -2 -1.5 -2 -0.5zM215.5 226.5l-1 0.4 -1 1.6 0 1.6 0.5 1.4 0.7 1 1.8 1.2 2 0.3 1 -0.3 1.1 -1.2 0.1 -1 -0.6 -2 -1.6 -2 -1 -0.7zM234.5 215.4l-1 2.1 0.3 2 0.4 1 1.3 1.4 1 0.5 2 0.1 1 -0.9 0.4 -1.1 -0.1 -1 -0.7 -2 -1.6 -1.9 -1 -0.5 -1 -0.2zM252.5 204.3l-1 0.5 -0.4 0.7 -0.4 1 0.1 2 0.7 1.8 1 1.1 1 0.6 1 0.1 1 -0.4 0.7 -1.2 -0.1 -2 -1.5 -3 -1.1 -0.9zM266.5 194.7l-0.9 1.8 0.1 3 0.8 1.5 1 1 1 0.3 1 -0.2 0.9 -1.6 -0.5 -3 -1.4 -2.3 -1 -0.7zM279.5 185.4l-0.8 1.1 -0.3 1 0.2 3 0.9 1.7 1 0.9 1 0.1 1 -0.9 0.1 -2.8 -1.2 -3 -0.9 -0.9zM290.5 177l-0.8 2.5 0.2 2 0.7 2 0.9 1 1 0.2 1 -1.2 -0.1 -3 -0.6 -2 -0.7 -1 -0.6 -0.6zM300.5 169l-0.7 2.5 0.4 3 1.3 2 1 0.1 0.7 -1.1 0.1 -1 -0.4 -3 -1.4 -2.5zM309.5 161.3l-0.7 2.2 0 2 0.7 2.5 1 1.1 1.1 -0.6 0.3 -3 -0.9 -3 -0.5 -0.9zM317.5 154.1l-0.7 2.4 0.1 2 0.6 2.3 1 1.1 1 -0.7 0.2 -2.7 -0.4 -2 -0.8 -2zM325.5 147.5l-1 0.2 -0.4 2.8 0.4 2.9 1 1.7 1 -0.6 0.3 -2 -0.5 -3zM331.5 140.7l-0.7 1.8 0 3 0.7 2.6 1 0.5 0.6 -2.1 0 -2 -0.6 -2.3zM337.5 134.5l-0.7 2 0 3 0.7 2.5 1 0.3 0.5 -1.8 -0.1 -2 -0.4 -2.1zM342.5 129.3l-0.2 4.2 0.2 1.2 1 1.9 0.8 -2.1 -0.2 -3 -0.6 -2.2zM347.5 123.9l-0.1 4.6 1.1 2.4 0.6 -1.4 0.1 -3 -0.7 -2.8zM352.5 117.6l-0.6 2.9 0.1 2 0.5 2.3 1 0.2 0.2 -3.5 -0.4 -2zM356.5 113.1l-0.1 4.4 0.1 0.9 1 1.9 0.5 -1.8 -0.1 -3 -0.4 -1.9zM360.5 108.1l-0.2 2.4 0.2 2.9 1 1.9 0.4 -1.8 0 -3 -0.4 -1.7zM364.5 102.4l-0.5 3.1 0.5 4.6 1 -0.3 0.1 -1.3 -0.4 -4zM368.5 98.6l-0.7 0.9 -0.3 2 0.4 3 0.6 1.9 0.5 -1.9 0.1 -2zM371.5 93.3l-0.6 2.2 -0.1 2 0.7 4.6 0.6 -1.6 0.2 -2 -0.2 -3zM374.5 88.7l-0.7 3.8 0.1 3 0.6 2.6 0.7 -1.6 0.1 -2 -0.1 -3zM377.5 85l-0.6 1.5 -0.3 3 0.3 3 0.6 2 0.6 -2 0.2 -2 -0.2 -3zM379.5 80.4l-0.4 3.1 0 4 0.4 2 1 1.3 0.6 -2.3 0 -4z"/>
<path fill="#484df0" d="M394.1 0l2.7 0 0.2 42.5 -1.3 15 -0.2 1.1 -1 -5.2 -1 4.3 -1 0 -1 3.5 -1 1.3 -0.7 2 -1.3 1.8 -0.9 3.2 -1.1 -0.6 -1 6.1 -1 -3.4 -1 10.1 -0.2 -3.2 -0.8 -2.6 -0.6 2.6 -0.2 3 0.1 4 0.5 2 0.2 0.3 0.3 -0.3 1.4 -3 0.3 -0.3 1 0.4 1 -3.1 1 0.5 1 -2 1 -0.5 4 -4.3 2 -6.1 1 4.3 1 0.5 1 -5 2 -1 3 -2.9 3 -2.4 2 -1.1 2 -0.6 1 0.2 1.3 1.4 0.6 2 0.1 3 -0.5 6 -1.3 7 -4.6 17 -7.1 21 -8.1 20 -10 21 -5.9 11 -5.2 9 -9.1 14 -16.8 23 -17.4 21.6 -18 20.5 -20 21.5 -17 17.6 -8 7.7 -11 9.5 -11 8.1 -11 6.7 -11 5.5 -12 4.7 -13 3.8 -14 3 -15 2.3 -21 2 -21 0.8 -22 -0.4 -20 -1.5 -17 -2.5 -7 -1.5 -7 -1.9 -6 -2.1 -5 -2.4 -4 -2.5 -2.7 -2.5 -2.1 -3 -0.9 -3 0 -3 1.3 -4 1.8 -3 3.3 -4 4.2 -4 6.3 -5 21.6 -15 16.2 -12.5 1 -0.2 7 0.6 5 0.1 9 -0.9 4 -1 4 -1.5 2.4 -1.6 1.5 -2 0.3 -1 -0.2 -2 -0.6 -1 -1.4 -1.3 -2 -1 -2 -0.5 -2 -0.2 -3 0.3 -4 1.2 -5.3 2.5 -5 3 -7.7 5.5 -1 0.2 -5 -1.1 -5 -2.4 -2 -1.4 -1.8 -1.8 -1.7 -3 -0.6 -3 0.2 -4 1.6 -5 2.6 -5 8.1 -13 8.1 -12 4.7 -6 5.8 -6.1 6 -5.2 7 -5.2 10 -6.9 7 -4.2 5 -2.3 10.4 -3.1 12.6 -5 16 -7.6 13 -5.7 14 -7.3 10 -4.7 11 -6.4 10 -5.2 9 -5.7 8.1 -4.4 7.9 -5.4 7.6 -4.6 6.4 -4.7 7 -4.5 5 -4 6 -4.1 5 -4.3 5 -3.5 5 -4.5 4 -2.9 4 -3.9 4.6 -3.6 3.4 -3.5 4 -3.3 3 -3.3 3 -2.5 17 -17.9 2 -2.7 3 -3.1 2 -2.8 2 -1.9 2 -2.8 2 -1.8 2 -2.8 2 -1.9 8 -9.6 20 -22.2 1 -1.5 0.6 -0.4zM161.5 253.5l-1.1 1 -0.4 2 0.8 2 1.1 1 2.6 1.1 2 0.1 2 -0.5 1 -0.7 0.6 -1 0 -1 -1 -2 -1 -1 -1.6 -1 -2 -0.6 -2 0.1zM191.5 239.1l-1 0.5 -1 1.9 0.3 2 0.7 1.1 2 1.4 2 0.5 2 -0.3 1 -0.6 0.5 -1.1 0 -1 -1.5 -2.5 -2 -1.6 -2 -0.5zM215.5 226.4l-1 0.4 -1 1.7 0 2 0.4 1 0.7 1 1.9 1.3 2 0.3 1 -0.3 1.1 -1.3 0.2 -1 -0.6 -2 -1.6 -2 -1.1 -0.7zM234.5 215.3l-0.8 1.2 -0.2 1 0.2 2 0.5 1 1.3 1.5 1 0.5 1 0.2 1.1 -0.2 0.9 -0.7 0.4 -1.3 0 -1 -0.8 -2 -1.6 -1.9 -1 -0.6 -1 -0.1zM252.5 204.3l-1 0.4 -0.5 0.8 -0.3 1 0 2 0.8 1.9 1 1.1 1 0.6 1 0.1 1 -0.4 0.7 -1.3 0 -2 -1.6 -3 -1.1 -1zM267.5 194.5l-1 0.2 -0.6 0.8 -0.4 1 0 2 1 2.6 1 1 1 0.3 1 -0.2 0.6 -0.7 0.3 -2 -0.9 -3 -1 -1.4zM279.5 185.4l-0.8 1.1 -0.3 1 0.2 3 0.9 1.8 1 0.9 1 0.1 1 -0.8 0.3 -1 -0.1 -2 -1.3 -3 -0.9 -1zM290.5 177l-0.7 1.5 0 3 0.8 2 0.9 1 1 0.3 1.1 -1.3 -0.1 -3 -1.4 -3 -0.6 -0.6zM300.5 168.9l-0.8 2.6 0.4 3 0.4 0.9 1 1.2 1 0.1 0.7 -1.2 0.2 -1 -0.5 -3 -1.4 -2.6zM309.5 161.3l-0.7 2.2 0 2 0.7 2.6 1 1 1 -0.2 0.2 -0.4 0.3 -3 -0.9 -3 -0.6 -1zM317.5 154.1l-0.7 2.4 0.1 2 0.6 2.4 1 1.1 1 -0.6 0.3 -2.9 -0.4 -2 -0.9 -2zM325.5 147.4l-1 0.2 -0.4 2.9 0.4 3 1 1.7 1 -0.5 0.3 -2.2 -0.4 -3zM331.5 140.6l-0.7 1.9 0 3 0.7 2.6 1 0.6 0.5 -1.2 0.1 -3 -0.6 -2.4zM337.5 134.4l-0.7 2.1 0 3 0.7 2.5 1 0.4 0.5 -1.9 0 -2 -0.5 -2.2zM342.5 129.3l-0.2 4.2 0.2 1.3 1 1.9 0.7 -1.2 0.1 -1 -0.1 -3 -0.7 -2.3zM347.5 123.8l-0.1 4.7 1.1 2.5 0.6 -1.5 0.1 -3 -0.7 -2.9zM352.5 117.5l-0.6 3 0.1 2 0.5 2.4 1 0.2 0.3 -3.6 -0.4 -2zM356.5 113.1l-0.2 4.4 0.2 1 1 1.9 0.5 -1.9 -0.1 -3 -0.4 -2zM360.5 108.1l-0.1 4.4 0.1 1.1 1 1.9 0.4 -2 0 -3 -0.4 -1.8zM364.5 102.3l-0.5 3.2 0.5 4.7 1 -0.2 0.2 -1.5 -0.5 -4zM368.5 98.6l-0.7 0.9 -0.3 2 0.3 3 0.7 2 0.6 -2 0 -2zM371.5 93.3l-0.6 2.2 -0.1 2 0.7 4.7 0.7 -1.7 0.1 -2 -0.2 -3zM374.5 88.7l-0.7 2.8 0 2 0.2 3 0.5 1.8 0.7 -1.8 0.1 -2 -0.1 -3zM377.5 84.9l-0.6 1.6 -0.3 3 0.3 3 0.6 2.1 0.7 -2.1 0.1 -2 -0.2 -3zM379.5 80.4l-0.4 4.1 0.1 4 0.3 1.2 1 1.3 0.6 -2.5 0.1 -4 -0.2 -1z"/>
<path fill="#4853f5" d="M395.5 0l1.2 0 0.2 34.5 -0.2 10 -1.2 12.3 -1 -4.1 -1 4.1 -1 0.1 -1 3.4 -1 1.2 -1 2.8 -1 1 -1 3.5 -1 -0.6 -1 5.6 -1 -2.7 -1 8.1 -0.5 -2.7 -0.5 -1.2 -0.7 3.2 -0.3 3.4 -1 -0.2 -1 -1.9 -1 10.6 -0.3 -3.9 -0.7 -2.1 -1 2.7 -0.2 4.4 0.5 3 0.7 1.4 0.8 -1.4 0.5 -2 0.7 -0.9 1 0.9 0.8 -2 0.2 -1.5 1 0.4 1 -0.7 1 -2.2 1 -0.1 1 -1.9 1 -0.6 4 -4.5 1 -0.8 1 -1.4 2 -4.8 1 3.1 1 0.3 1 -3.7 1 -1.6 1 -0.2 3 -2.8 3 -2.1 3 -1.1 1 0.2 1 1 0.6 2 0.2 3 -0.4 5 -1.3 7 -4.6 17 -6.2 18 -8.1 20 -10.5 22 -10 18 -9.2 14 -17 23 -17.5 21.3 -17 19.1 -20 20.8 -24 23.6 -11 9.7 -11 8.3 -11 7 -11 5.9 -11 4.7 -13 4.3 -13 3.2 -15 2.6 -19 2.2 -21 1.1 -21 0 -20 -1.3 -17 -2.2 -14 -3.3 -6 -2 -4.6 -2 -4.4 -2.6 -2.8 -2.4 -2.3 -3 -1 -3 -0.1 -3 0.8 -3 1.6 -3 3 -4 4.1 -4 6.1 -5 22.6 -15.4 9 -5.3 4 -1.6 3 -0.9 15 -2.5 6 -1.6 5 -2.3 1.8 -1.4 1.2 -1.6 0.4 -2.4 -0.2 -1 -1.2 -1.8 -3 -2 -3 -0.8 -4 0.1 -4 0.8 -4.6 1.7 -10.4 4.5 -3 0.8 -3 0.4 -4 -0.4 -3.2 -1.3 -2.8 -2.1 -1.8 -2.9 -0.7 -3 0.4 -4 1.2 -4 2.5 -5 6.1 -10 8.1 -12 5.2 -6.6 5 -5.2 5 -4.4 7 -5.4 10 -6.9 7 -4.4 6 -2.8 11 -3.4 12.3 -4.9 15.7 -7.5 13 -5.6 14 -7.4 10 -4.7 11 -6.3 10 -5.2 9 -5.7 8.3 -4.6 7.7 -5.3 7.9 -4.7 6.1 -4.6 7 -4.4 6 -4.8 5 -3.3 5 -4.3 5 -3.5 5 -4.5 4 -3 4 -3.8 4.7 -3.8 3.3 -3.4 4 -3.3 3 -3.3 3 -2.5 17 -17.9 2 -2.6 3 -3.1 2 -2.8 2 -1.9 2 -2.8 2 -1.9 2 -2.7 2 -1.9 8 -9.6 4 -4.1 2 -2.6 1 -0.8 4 -4.9 1 -0.7 1 -1.5 1 -0.7 1 -1.5 5 -5.3 1 -1.5 1 -0.6zM162.5 252.5l-2 1 -1.1 2 0.2 2 1.4 2 2.5 1.3 3 0.5 2.9 -0.8 1.1 -1 0.3 -2 -0.9 -2 -1 -1 -1.4 -1 -2 -0.9zM192.5 238.5l-2 0.5 -1.3 1.5 -0.2 2 0.8 2 1.7 1.6 2 0.8 2 0.2 2 -0.6 0.9 -1 0.3 -1 -0.1 -1 -1 -2 -2.1 -2zM214.5 226.3l-1.1 1.2 -0.5 2 0.5 2 0.6 1 1.5 1.3 2 0.8 2 -0.1 1 -0.6 0.8 -1.4 0.1 -1 -1.3 -3 -2.6 -2.2 -2 -0.4zM235.5 214.4l-1 0.4 -1 1.2 -0.4 1.5 0.2 2 1 2 1.2 1.1 2 0.7 1 -0.1 1.3 -0.7 0.6 -1 0.1 -1 -0.4 -2 -2.1 -3 -1.5 -1zM251.5 204.2l-0.9 1.3 -0.3 2 0.8 3 1.4 1.6 1 0.5 2 0 1 -1 0.3 -1.1 -0.5 -3 -1.2 -2 -1.6 -1.4 -1 -0.3zM266.5 194.2l-1 1.3 -0.3 1 0 2 0.3 1.5 1 1.8 1 0.9 1 0.3 1 -0.1 1 -0.8 0.4 -1.6 -0.5 -3 -1.9 -2.8 -1 -0.6zM279.5 184.9l-1 1.2 -0.4 1.4 0.2 3 1.2 2.5 1 0.8 1 0.2 1 -0.5 0.6 -1 0 -3 -1.6 -3.5 -1 -0.9zM290.5 176.5l-0.9 2 -0.1 3 1 2.7 1 1 1 0.3 1 -0.6 0.5 -1.4 -0.2 -3 -1.3 -3.1 -1 -1zM300.5 168.4l-0.6 1.1 -0.4 2 0.3 3 1 2 0.7 0.8 1 0.1 0.9 -0.9 0.3 -1 -0.2 -3 -1.2 -3 -0.8 -1zM309.5 160.8l-0.9 2.7 0.1 3 0.8 2.3 1 1 1 0 0.7 -1.3 0.1 -1 -0.3 -3 -1.2 -3 -0.3 -0.4zM317.5 153.6l-0.7 1.9 -0.1 3 0.7 3 1.1 1.2 1 -0.3 0.4 -0.9 0.1 -3 -1.2 -4 -0.3 -0.5zM324.5 147.1l-0.6 2.4 0.1 3 0.5 1.9 1 1.5 1 -0.2 0.5 -1.2 0 -3 -1.2 -4 -0.3 -0.5zM331.5 140.2l-0.9 2.3 0 3 0.9 3.4 1 0.6 0.7 -1 0.2 -1 0 -2 -0.5 -3zM337.5 134.1l-0.9 2.4 0 3 0.9 3.3 1 0.5 0.7 -1.8 0 -3 -0.7 -2.8zM342.5 128.7l-0.4 2.8 0 2 0.4 2.3 1 1.6 1 -1.5 -0.1 -3.4 -0.9 -3.7zM347.5 123.2l-0.3 2.3 0 3 0.3 1.5 1 1.8 0.8 -1.3 0 -4 -0.8 -3.3zM352.5 117.1l-0.7 3.4 0.2 3 0.5 2.2 1 0.5 0.4 -1.7 0 -3 -0.4 -2.2zM356.5 112.5l-0.4 3 0.2 3 0.2 1 1 1.7 0.6 -1.7 0 -4 -0.6 -2.5zM360.5 107.5l-0.3 3 0.1 3 0.2 1.1 1 1.8 0.6 -1.9 -0.1 -4 -0.5 -2.3zM364.5 101.9l-0.6 3.6 0.1 3 0.5 2.6 1 0.3 0.4 -1.9 -0.1 -3zM368.5 98.1l-1 1 -0.2 2.4 0.2 3 1 3 0.7 -2 0.1 -2 -0.2 -3zM371.5 92.8l-0.6 1.7 -0.3 3 0.2 3 0.7 2.7 0.6 -0.7 0.5 -2 -0.4 -5zM374.5 88.2l-0.6 2.3 -0.3 3 0.3 4 0.6 1.9 1 -1.4 0.3 -2.5 -0.6 -5z"/>
<path fill="#4758f8" d="M396 0l0.6 0 0.2 36.5 -0.5 12 -0.8 6.9 -1 -3.4 -1 4 -1 0.2 -1 3.4 -1 1.1 -1 2.9 -1 0.9 -1 3.5 -1 -0.5 -1 5.4 -1 -2.3 -1 7.1 -1 -2.9 -1 4.7 -0.5 1 -0.5 0.5 -1 -1.7 -1 8.4 -0.3 -2.2 -0.7 -1.6 -1 2 -0.5 4.6 -0.5 1.5 -0.4 -2.5 -0.6 -1.7 -0.3 0.7 -0.6 3 -0.2 5 -0.9 0.4 -0.3 -2.4 -0.7 -2.1 -0.7 2.1 -0.3 3 0.1 4 0.9 2.8 1 -0.6 0.3 -1.2 0.7 -5.8 0.3 2.8 0.7 1.1 1 -0.6 1 -4.1 1 1.3 0.8 -0.7 1.2 -2.7 1 0.2 1.6 -2.5 1.4 -1 1 -1.7 1 -0.7 4 -4.6 3 -2.9 3 -5.3 1 2.1 1 0.2 2 -4.9 1 -0.3 4 -3.3 2 -1.1 2 -0.5 1 0.2 0.7 0.8 0.9 3 -0.2 5 -1.1 7 -2 8 -2.9 10 -4.1 12 -8.8 22 -9.9 21 -5.9 11 -5.2 9 -9.2 14 -15.8 21 -15.5 18.9 -17 19 -19 19.5 -23 22.2 -12 10.8 -11 8.8 -11 7.6 -11 6.3 -12 5.7 -12 4.4 -13 3.6 -14 2.9 -19 2.6 -20 1.5 -20 0.2 -20 -0.9 -18 -2.2 -14 -3.1 -6 -1.9 -5 -2.1 -4 -2.3 -3 -2.5 -2.3 -3 -1.1 -3 0 -3 0.8 -3 1.6 -3 3.1 -4 4.2 -4 4.9 -4 15.8 -10.8 6 -3.7 6 -3.2 8 -3 14 -3.3 6 -1.7 5 -2.4 2 -1.6 1 -1.3 0.5 -1 0.1 -2 -0.7 -2 -0.8 -1 -2.7 -2 -3.4 -1.1 -3 -0.3 -4 0.4 -4 1.1 -12 4.1 -6 0.9 -4 -0.5 -3 -1.4 -2 -1.7 -1.5 -2.5 -0.6 -3 0.5 -4 1.4 -4 2.5 -5 6.2 -10 6.2 -9 5.3 -6.6 5 -5.1 6 -5.1 6 -4.5 10 -6.9 7 -4.2 5 -2.3 11 -3.5 9.7 -3.8 18.3 -8.6 12.6 -5.4 14.4 -7.5 11 -5.3 10 -5.8 10 -5.2 9 -5.7 8.2 -4.5 7.8 -5.4 7.8 -4.6 6.2 -4.7 7 -4.4 6 -4.8 5 -3.3 5 -4.3 5 -3.5 5 -4.5 4 -2.9 5 -4.7 3 -2.3 4 -4 4 -3.3 3 -3.3 3 -2.5 3 -3.4 3 -2.7 3 -3.5 3 -2.8 2 -2.6 3 -2.9 2 -2.7 3 -3.1 2 -2.8 2 -1.9 2 -2.8 2 -1.8 2 -2.8 2 -1.9 1 -1.5 2 -1.9 2 -2.7 1 -0.8 5 -6 4 -4.1 1 -1.5 12 -13 1 -1.4 1 -0.7 1.3 -3.2zM161.5 252.3l-1.7 1.2 -1 2 0.1 2 1.2 2 2.4 1.5 3 0.8 3 -0.3 2.1 -1 0.8 -1 0.2 -2 -1 -2 -0.9 -1 -2.2 -1.6 -2 -0.8 -2 -0.2zM190.5 238.4l-1.3 1.1 -0.8 2 0.3 2 1.2 2 1.6 1.2 3 0.9 2 -0.1 2.1 -1 0.6 -1 0.1 -2 -1.9 -3 -1.9 -1.5 -2 -0.9 -2 0zM215.5 225.5l-1 0.2 -1 0.8 -0.9 2 0 2 0.8 2 1.1 1.2 2 1.2 2 0.3 2 -0.4 1 -0.9 0.5 -1.4 0 -1 -0.7 -2 -1.5 -2 -1.3 -1.1 -2 -0.9zM234.5 214.2l-1.2 1.3 -0.6 2 0.2 2 0.6 1.6 1.1 1.4 1.9 1.1 2 0.2 1 -0.2 1 -0.9 0.5 -1.2 -0.1 -2 -0.8 -2 -1.5 -2 -1.1 -0.9 -2 -0.6zM252.5 203.4l-1 0.3 -1.2 1.8 -0.4 2 0.3 2 1 2 1.3 1.2 2 0.7 1 -0.1 1 -0.6 0.7 -1.2 -0.1 -3 -0.9 -2 -1.5 -2 -1.2 -0.9zM266.5 193.7l-1 1.1 -0.6 1.7 0 2 0.4 2 1.2 2 1 0.8 2 0.4 1 -0.6 0.8 -1.6 -0.2 -3 -0.8 -2 -1.5 -2 -1.3 -0.9zM279.5 184.5l-1 0.9 -0.4 1.1 -0.3 2 0.2 2 0.5 1.7 1 1.5 1 0.7 1 0.2 1 -0.2 0.8 -0.9 0.3 -1 0 -2 -0.4 -2 -1 -2 -1.7 -1.9zM290.5 176.1l-1.2 2.4 -0.1 2 0.3 2 1 2.4 1 0.9 1 0.4 1 -0.4 0.8 -1.3 0.1 -3 -0.5 -2 -1.4 -2.6 -1 -0.9zM300.5 168l-1.1 2.5 0.1 4 1 2.5 1 0.9 1 0.3 1 -0.6 0.5 -1.1 0 -3 -1.5 -4.3 -1 -1.1zM309.5 160.4l-1 2.2 0 4.2 1 2.8 1 0.9 1 0.1 0.9 -1.1 0.3 -1 -0.2 -3 -0.5 -2 -0.9 -2 -0.6 -0.9zM317.5 153.2l-0.6 1.3 -0.4 2 0.2 4 0.8 2 1 0.9 1 -0.1 0.9 -1.8 -0.3 -4 -1.6 -3.9zM324.5 146.7l-0.7 2.8 0.2 4 0.5 1.8 0.9 1.2 1.1 0.1 0.9 -2.1 -0.3 -4 -1.6 -3.9zM331.5 139.8l-1 2.5 -0.1 3.2 0.6 3 0.5 1.2 1 0.6 0.8 -0.8 0.4 -1 0 -3 -1 -4zM337.5 133.7l-1 2.8 -0.1 3 0.3 2 0.8 2 1 0.6 0.9 -1.6 0.1 -3 -0.8 -4zM342.5 128.3l-0.6 3.2 0.1 3 0.5 2.2 1 1.5 1 -0.7 0.4 -2 -0.1 -2 -1.2 -5zM347.5 122.8l-0.5 2.7 0.1 3 0.4 2.5 1 1.6 1 -1.1 0.2 -4 -1.2 -4.8zM352.5 116.8l-0.7 2.7 0 4 0.7 3 1 0.6 0.7 -2.6 -0.1 -3 -0.6 -2.9zM356.5 112.1l-0.5 3.4 0.1 3 0.4 2.1 1 1.5 0.8 -1.6 0 -4 -0.8 -4zM360.5 107l-0.4 3.5 0 3 0.4 2.2 1 1.6 0.8 -1.8 0 -4 -0.8 -3.8zM364.5 101.5l-0.7 4 0.1 4 0.6 2.6 1 0.5 0.6 -2.1 0 -4zM367.5 98.4l-0.2 6.1 0.3 2 0.9 2 1 -2 0.1 -3 -0.5 -4 -0.6 -1.9z"/>
<path fill="#465efb" d="M396.4 1.5l0.1 -0.6 0.2 35.6 -0.5 11 -0.7 6.6 -1 -2.8 -1 3.9 -1 0.2 -1 3.5 -1 1 -1 3 -1 0.8 -1 3.6 -1 -0.4 -1 5.1 -1 -1.9 -1 6.4 -1 -2.2 -1.1 4.2 -0.9 1.8 -1 -1.5 -1 7.4 -1 -2.8 -0.8 1.1 -1.2 6.3 -1 -3.5 -0.7 2.2 -0.8 5 -0.5 1.1 -1 -3.6 -0.9 2.5 -0.5 5 -0.6 1.7 -1 -4.1 -1 0.7 -0.5 7.7 0.2 2 1.3 2.1 1 -1.1 1 -4.8 0.9 1.8 1.1 -0.3 1 -3.5 1 0.3 1 -0.4 1 -2.6 2 -1 1 -2 1 -0.5 2 -2.6 1 -0.7 1 -1.4 8 -8.4 2 -3.7 1 -1 1 1.5 1 0 2 -4.4 6 -3.9 2 -0.5 1 0.3 1 1.3 0.5 3.5 -0.4 5 -1.1 6 -4.4 16 -6 17 -7.9 19 -9.2 19 -10.2 18 -9.9 15 -17.6 23 -15.8 18.7 -19 20.4 -21 20.7 -20 18.4 -10 8.7 -11 8.6 -10 6.7 -11 6.3 -13 6.1 -13 4.6 -13 3.6 -9 1.9 -10 1.6 -20 2.2 -21 0.9 -21 -0.4 -18 -1.7 -9 -1.5 -7 -1.5 -7 -2.1 -5.5 -2.2 -4.5 -2.5 -3 -2.5 -2 -2.5 -1.1 -2.5 -0.3 -3 0.7 -3 1.4 -3 3.1 -4 2.9 -3 4.7 -4 12.6 -8.8 12 -6.9 9 -3.7 15 -4.1 6 -2.1 4.5 -2.4 1.5 -1.2 1.3 -1.8 0.4 -1 0.2 -2 -0.8 -2 -0.7 -1 -2.4 -2 -4 -1.6 -4 -0.5 -4 0.4 -14 3.9 -6 0.8 -3 -0.2 -3 -0.9 -2.7 -1.9 -1.4 -2 -0.7 -3 0.3 -4 1.4 -4 2.4 -5 4.9 -8 6.3 -9 4.5 -5.6 5 -5.2 6 -5.2 7 -5.3 9 -6.1 7 -4.3 6 -2.6 11 -3.5 8.1 -3.2 18.9 -8.8 12 -5.2 14 -7.3 11.9 -5.7 11.1 -6.4 9 -4.6 9 -5.7 8 -4.4 8 -5.5 7.4 -4.4 6.6 -4.9 7 -4.5 5 -4 6 -4 5 -4.3 5 -3.5 5 -4.6 4 -2.9 5 -4.7 3 -2.2 4 -4.1 4 -3.3 3 -3.3 3 -2.5 3 -3.4 3 -2.6 3 -3.6 3 -2.8 2 -2.5 3 -3 2 -2.7 3 -3.1 2 -2.7 2 -1.9 2 -2.8 2 -1.9 2 -2.7 2 -1.9 11 -13 1 -0.7 2 -2.6 1 -0.7 1 -1.5 3 -3.4 1 -0.7 1 -1.5 1 -0.7 1 -1.5 4 -4.3 1 -0.8 1 -1.4 1 -0.6 1 -2.8 0.4 -0.4zM162.5 251.5l-2.5 1 -1.6 2 -0.3 1 0.1 2 1.3 2.2 2.7 1.8 3.3 0.8 2 0 2 -0.5 2.2 -1.3 0.6 -1 0.1 -2 -0.4 -1 -1.4 -2 -2.1 -1.6 -2 -1 -2 -0.5zM190.5 237.9l-1.8 1.6 -0.8 2 0.2 2 1.4 2.3 2 1.4 3 0.9 3 -0.3 2 -1.2 0.5 -1.1 0 -2 -1 -2 -1.5 -1.6 -2 -1.5 -2 -0.7 -2 -0.1zM214.5 225.2l-1.5 1.3 -0.9 2 0.3 3 1.1 2 2 1.5 2 0.7 2 0 2 -0.8 1 -1.4 0.2 -1 -0.4 -2 -1 -2 -1.8 -1.9 -2 -1.3 -2 -0.3zM234.5 213.8l-1 0.7 -0.6 1 -0.5 2 0.1 2 0.7 2 1.3 1.6 1 0.7 2 0.6 2 -0.1 1.2 -0.8 0.7 -1 0.3 -2 -0.5 -2 -1.2 -2 -1.9 -2 -1.6 -0.9zM251.5 203.2l-1.2 1.3 -0.6 2 0 2 0.8 2.8 1 1.3 2 1.2 2 0.2 1 -0.4 1 -1.1 0.3 -1 0 -2 -0.6 -2 -1.1 -2 -1.6 -1.7 -2 -0.9zM266.5 193.3l-1.2 1.2 -0.7 2 -0.1 2 0.4 2 1.6 2.7 1 0.7 2 0.4 1 -0.3 1.2 -1.5 0.2 -2 -0.3 -2 -0.9 -2 -1.4 -2 -1.8 -1.3zM279.5 184.1l-1 0.8 -0.7 1.6 -0.3 2 0.4 3 0.6 1.6 1 1.3 1 0.7 1 0.2 1 -0.1 0.9 -0.7 0.5 -1 0.3 -2 -0.3 -2 -0.8 -2 -1.2 -2 -1.4 -1.3zM290.5 175.6l-1 1.5 -0.4 1.4 -0.1 3 0.4 2 1 2 1.1 1 1 0.4 1 -0.2 1 -1.1 0.4 -1.1 0.1 -2 -0.5 -2 -0.7 -2 -1.2 -2 -1.1 -0.9zM300.5 167.6l-1 1.7 -0.3 1.2 0 4 1.3 3.3 1 0.9 1 0.2 1 -0.4 0.7 -1 0.4 -2 -0.2 -2 -0.5 -2 -1.4 -2.8 -1 -1.1zM309.5 160l-1.2 2.5 -0.2 3 0.2 2 1.2 2.9 1 0.8 1 0.2 1 -0.8 0.4 -1.1 0.2 -2 -0.2 -2 -1.5 -4 -0.9 -1.3zM317.5 152.8l-1.1 2.7 -0.2 3 0.2 2 1.1 2.8 1 0.9 1 0 1.1 -1.7 0.2 -2 -0.2 -2 -1.3 -4 -0.8 -1.4zM324.5 146.2l-0.9 3.3 0.1 4 0.8 2.7 1 1.2 1 0.1 0.8 -1 0.4 -1 0 -3 -0.6 -3 -0.8 -2 -0.8 -1.3zM331.5 139.4l-1 2.1 -0.2 5 0.7 3 0.5 1 1 0.6 1 -0.6 0.4 -1 0.2 -3 -1.1 -5zM337.5 133.3l-1 2.2 -0.2 5 0.7 3 0.5 0.9 1 0.6 1.1 -1.5 0.3 -3 -1 -5zM342.5 127.8l-0.6 2.7 -0.1 4 0.6 3 1.1 1.6 1 -0.4 0.5 -1.2 0.1 -4 -1.3 -5 -0.3 -0.6zM347.5 122.3l-0.6 3.2 0.1 4 0.5 2.6 1 1.4 1 -0.6 0.2 -0.4 0.4 -4 -0.3 -2 -1.2 -4zM352.5 116.4l-0.8 3.1 0 5 0.8 3 1 0.5 1 -2.5 -0.1 -3 -0.7 -4zM356.5 111.6l-0.6 3.9 0.1 4 0.5 2.2 1 1.3 1 -1.5 0.2 -4 -1 -5 -0.2 -0.4zM360.5 106.6l-0.6 3.9 0.1 4 0.5 2.4 1 1.3 1 -1.6 0.3 -3.1 -0.8 -5 -0.5 -1.3zM364.5 101.1l-0.8 4.4 0.1 5 0.7 2.7 1 0.5 0.8 -2.2 0.1 -4 -0.5 -3z"/>
<path fill="#4564fd" d="M395.5 5.5l0.7 1 0.3 2 0.1 19 -0.3 16 -0.8 9.4 -1 -2.3 -1 3.9 -1 0.3 -1 3.4 -1 1 -1 3 -1 0.9 -1 3.5 -1 -0.3 -1 4.9 -1 -1.6 -1 5.9 -1 -1.6 -1.4 4.6 -0.6 1.1 -1 -1.3 -1 6.7 -1 -2.1 -1 1.4 -1 5.5 -1 -2.9 -0.9 2.6 -1.1 5.2 -1 -3.2 -0.8 2 -1.2 6.5 -1 -3.3 -1 0.5 -1 9 -0.6 -2.7 -1.4 -2.7 -0.8 3.7 -0.2 5 -1 0.9 -1 -3.7 -1 -0.5 -0.6 3.3 -0.1 5 0.2 3 1.5 1.7 1 -0.9 0.5 -1.8 0.5 -5.6 0.3 2.6 0.7 0.9 1 0.3 0.8 -1.2 1.2 -3.5 1 0.7 1 -0.7 1 -2.9 2 -0.6 1 -2.1 0.8 -0.9 1.2 -0.5 1.6 -2.5 1.4 -1 1 -1.6 13 -13.9 2 -3.4 1 -0.7 1 0.9 1 0 2 -3.9 4 -2.7 2 -0.9 1 -0.2 1 0.3 0.8 1.1 0.5 2 0 4 -0.7 5 -1.6 7 -2.2 8 -6.3 18 -7.8 19 -9.2 19 -9 16 -9.8 15 -18.4 24 -13.3 15.7 -18 19.5 -20 19.7 -14 12.9 -19 16.6 -10 8 -11 7.7 -11 6.6 -12 5.9 -13 5.1 -13 3.9 -18 3.7 -20 2.6 -21 1.1 -21 -0.2 -18 -1.6 -9 -1.4 -7 -1.6 -7 -2 -5 -2 -4 -2.2 -3.7 -3 -1.6 -2 -1.2 -3 -0.1 -3 0.8 -3 1.6 -3 2.3 -3 2.9 -3 4.7 -4 10.3 -7.2 11 -6.3 9 -3.8 16 -4.9 5 -1.9 5.1 -2.9 1.2 -1 1.4 -2 0.3 -1 0.1 -2 -1.5 -3 -2.6 -2.3 -4 -1.8 -4 -0.6 -4 0.2 -14 3.1 -6 0.7 -3 -0.4 -3 -1.1 -2 -1.7 -1.3 -2.1 -0.5 -3 0.3 -3 1.3 -4 2.5 -5 4.3 -7 5.4 -7.8 4.2 -5.2 4.8 -5 5 -4.5 7 -5.4 9 -6.2 7 -4.4 6 -2.8 14 -4.7 9.8 -4 14.2 -6.8 14.3 -6.2 12.7 -6.7 11.2 -5.3 10.8 -6.3 10 -5.1 9 -5.7 8.7 -4.9 7.3 -5 8 -4.8 6 -4.5 7 -4.5 6 -4.8 5 -3.2 5 -4.3 5 -3.5 5 -4.6 4 -2.9 4 -3.8 4 -3.1 4 -4.1 4 -3.3 3 -3.3 3 -2.5 17 -17.9 2 -2.7 3 -3.1 2 -2.8 2 -1.8 2 -2.8 2 -1.9 2 -2.7 2 -1.9 1 -1.5 2 -1.9 2 -2.7 1 -0.8 5 -6 1 -0.8 7 -8.1 1 -0.7 1 -1.6 1 -0.7 1 -1.4 5 -5 1 -1.5 1 -0.5zM161.5 251.2l-2.3 1.3 -0.9 1 -0.8 2 0 2 0.4 1 1.6 2.1 3 1.6 4 0.6 2 -0.1 2 -0.6 2.1 -1.6 0.6 -1 0 -2 -1 -2 -1.9 -2 -2.8 -1.7 -2 -0.7 -2 -0.2zM190.5 237.4l-1.6 1.1 -1.3 2 -0.1 3 1 2 2 1.8 3 1.2 3 0.1 2 -0.5 1.1 -0.6 0.9 -1 0.4 -2 -0.6 -2 -1.4 -2 -2.4 -2 -2 -1 -2 -0.4zM213.5 225.3l-1.5 2.2 -0.4 2 0.2 2 1 2 1.7 1.6 3 1.1 2 0.1 2.3 -0.8 1 -1 0.6 -2 -0.4 -2 -1.9 -3 -1.6 -1.5 -2 -1.1 -2 -0.4zM234.5 213.3l-1.4 1.2 -0.9 2 -0.2 3 0.6 2 1.6 2 2.3 1.3 2 0.3 2 -0.6 1.2 -1 0.6 -2 -0.2 -2 -0.9 -2 -1.4 -2 -2.3 -1.9 -2 -0.5zM251.5 202.7l-1.5 1.8 -0.6 2 0 3 0.7 2 1.4 1.8 1 0.7 2 0.6 2 -0.3 1.1 -0.8 0.9 -2 -0.1 -2 -0.6 -2 -1.2 -2 -2.1 -2.2 -2 -0.8zM266.5 192.8l-1 0.8 -1.1 2.9 -0.1 3 0.5 2 1.3 2 1.4 1.1 2 0.4 1 -0.2 1 -0.8 0.8 -1.5 0.2 -2 -0.4 -2 -0.9 -2 -1.7 -2.4 -2 -1.3zM278.5 184.3l-0.9 2.2 -0.3 2 0.5 4 0.7 1.5 1 1.1 1 0.6 2 0.2 1 -0.5 1 -1.9 0.2 -2 -0.7 -3 -1 -2 -1.5 -2 -1 -0.7 -1 -0.2zM290.5 175.2l-1 1.2 -0.6 2.1 -0.2 3 0.3 2 0.5 1.5 1 1.5 1 0.8 1 0.3 1 -0.1 1 -0.7 0.7 -1.3 0.3 -2 -0.2 -2 -1.1 -3 -1.2 -2 -1.5 -1.3zM300.5 167.2l-1 1.4 -0.5 1.9 -0.2 3 0.3 2 0.7 2 0.7 1.1 1 0.8 1 0.3 1 -0.3 0.9 -0.9 0.4 -1 0.3 -2 -0.3 -2 -1 -3 -1.1 -2 -1.2 -1.3zM309.5 159.6l-1 1.5 -0.4 1.4 -0.1 5 0.5 2 1 1.8 1 0.7 1 0.1 1 -0.5 0.7 -1.1 0.4 -2 -0.1 -2 -0.5 -2 -1.2 -3 -1.3 -1.7zM317.5 152.4l-0.7 1.1 -0.6 2 -0.1 5 0.5 2 0.9 1.7 1 0.8 1 0 1 -0.8 0.6 -1.7 0 -4 -1 -3 -1 -2 -0.6 -0.8zM324.5 145.8l-1 3.7 0.1 5 0.9 2.7 1 1 1 0.1 1 -0.8 0.6 -2 -0.1 -4 -1 -3 -1 -2 -0.5 -0.7zM331.5 139.1l-1.2 2.4 -0.3 3 0.1 3 0.8 3 0.6 0.9 1 0.6 1 -0.5 0.6 -1 0.4 -2 0 -2 -0.3 -2 -1 -3 -0.7 -1.4zM337.5 132.9l-1.1 2.6 -0.3 6 0.8 3 0.6 0.9 1 0.4 1 -0.6 0.3 -0.7 0.5 -2 0 -2 -0.3 -2 -0.9 -3zM342.5 127.4l-0.7 3.1 -0.1 5 0.6 3 1.2 1.4 1 -0.2 0.7 -1.2 0.3 -4 -0.4 -3 -1.1 -3 -0.5 -1zM347.5 121.9l-0.7 3.6 0 5 0.3 2 1.4 1.9 1 -0.4 0.6 -1.5 0.3 -4 -0.3 -2 -1.3 -4 -0.3 -0.6zM352.5 116l-0.9 3.5 -0.2 5 0.5 3 0.6 1 1 0.5 1 -1.5 0.5 -4 -1.1 -5zM356.5 111.2l-0.7 4.3 0 5 0.4 2 1.3 1.4 1 -0.8 0.2 -0.6 0.4 -2 0.1 -3 -1.3 -5 -0.4 -0.8z"/>
<path fill="#426afe" d="M395.3 7.5l0.2 -0.6 0.7 3.6 0.3 12 -0.2 18 -0.8 11.3 -1 -1.9 -1 3.9 -1 0.3 -1 3.4 -1 1.1 -1 3 -1 0.9 -1 3.5 -1 -0.2 -1 4.7 -1 -1.4 -1 5.5 -1 -1.2 -2 5.6 -1 -1.1 -1 6.1 -1 -1.6 -1 1.4 -1 5.1 -1 -2.4 -0.8 2 -1.2 5.3 -1 -2.6 -0.2 0.3 -0.8 2 -1 5.5 -1 -2.7 -1 0.5 -1 7.6 -2 -4 -0.8 3.1 -0.5 4 -0.7 1.8 -0.9 -2.8 -1.1 -0.7 -0.7 3.7 -0.3 5.2 -1 -0.5 -1 -3 -1 -0.4 -0.7 3.7 -0.3 5.8 -1 -0.2 -0.8 -2.6 -1.2 -1.8 -0.9 2.8 -0.7 7 -0.4 1.2 -0.2 -1.2 -1.8 -4 -1 0 -0.9 5 0.1 7 0.5 1 1.3 0.8 1 -0.3 0.9 -1.5 1.1 -5 1 1.1 1 0.3 0.5 -0.4 1 -2 0.5 -3.5 2 0.9 1 -0.6 1.3 -3.8 0.7 -0.7 1 0.4 1 -0.6 1.1 -3.1 0.9 -0.7 1 0 0.3 -0.3 0.8 -1 0.9 -2.4 2 -0.8 1.7 -2.8 1.3 -0.7 2 -2.9 1 -0.6 2 -2.7 14 -14.9 3 -4.3 1 -0.6 1 0.6 1 -0.1 2.4 -3.8 3.6 -2.3 2 -0.5 1 0.3 0.5 0.5 0.7 2 0.1 3 -0.5 5 -1.5 7 -2 7 -5.8 17 -7.8 19 -8.2 17 -10 18 -9.1 14 -16.9 22 -13.5 16.1 -17 18.4 -19 18.8 -17 15.5 -20 17.1 -11 8.7 -10 7 -12 7.2 -12 5.8 -12 4.8 -13 3.9 -9 2.2 -9 1.7 -19 2.5 -20 1.2 -21 -0.2 -10 -0.8 -9 -1 -8 -1.3 -6.8 -1.6 -6.2 -1.9 -4.9 -2.1 -4.1 -2.4 -2.9 -2.6 -1.4 -2 -1 -3 -0.1 -2 0.7 -3 1.6 -3 2.3 -3 2.9 -3 4.7 -4 10.2 -7 10 -5.4 7 -3 17 -5.6 6 -2.6 3.7 -2.4 1.3 -1.4 1 -1.6 0.3 -1 0 -2 -1.4 -3 -2.9 -2.6 -4 -1.9 -4 -0.8 -4 0 -4 0.5 -11 2.2 -5 0.3 -3 -0.5 -2 -0.8 -1.9 -1.4 -1.4 -2 -0.6 -3 0.3 -3 1.3 -4 2.5 -5 4.3 -7 4.5 -6.3 4.7 -5.7 4.3 -4.4 5 -4.3 7 -5.4 8 -5.5 7 -4.3 6 -2.9 15 -5.1 9.9 -4.1 13.1 -6.3 14 -6.1 13 -6.9 12 -5.7 11 -6.4 9 -4.6 9 -5.7 8 -4.4 8 -5.5 7.5 -4.4 6.5 -4.8 7 -4.5 5 -4.1 6 -4 5 -4.3 5 -3.5 5 -4.5 4 -2.9 4 -3.9 4.5 -3.5 3.5 -3.6 4 -3.3 3 -3.3 3 -2.5 17 -17.9 2 -2.7 3 -3.1 2 -2.8 2 -1.9 2 -2.8 2 -1.8 2 -2.8 2 -1.8 5 -6.2 1 -0.7 2 -2.7 1 -0.8 2 -2.6 1 -0.7 2 -2.6 1 -0.7 4 -4.8 1 -0.7 1 -1.6 1 -0.6 1 -1.5 5 -4.9 1 -1.4 1 -0.5zM162.5 250.5l-3 1.1 -1.1 0.9 -1.3 2 -0.3 3 0.7 1.8 0.9 1.2 3.1 2 4 0.8 4 -0.3 3.2 -1.5 0.9 -1 0.6 -2 -0.5 -2 -1.4 -2 -2.4 -2 -2.4 -1.3 -3 -0.7zM189.5 237.4l-1.9 2.1 -0.7 2 0.4 3 1.3 2 2.9 1.9 3 0.7 2 0.1 2 -0.4 2.1 -1.3 1 -2 -0.2 -2 -1 -2 -1.7 -2 -2.2 -1.6 -3 -1.1 -2 -0.1zM214.5 224.3l-2 1.5 -1.2 2.7 0 3 0.9 2 1.9 2 2.4 1.1 3 0.3 1.8 -0.4 1.2 -0.6 1.2 -1.4 0.4 -2 -0.4 -2 -1.1 -2 -1.8 -2 -2.3 -1.7 -2 -0.6zM233.5 213.4l-1.4 2.1 -0.5 2 0.2 3 0.8 2 1.9 2 2 0.9 3 0.2 2 -0.9 1 -1.2 0.5 -2 -0.3 -2 -1.5 -3 -1.8 -2 -1.9 -1.3 -2 -0.6zM251.5 202.3l-1.3 1.2 -1.2 3 0 3 0.5 2 1.4 2 1.6 1.2 2 0.6 2 -0.3 1.1 -0.5 1.3 -2 0.2 -2 -0.4 -2 -1.5 -3 -1.8 -2 -1.9 -1.2zM266.5 192.4l-1.3 1.1 -0.9 2 -0.4 3 0.4 3 1 2 1.2 1.2 2 0.9 2 -0.1 1.5 -1 1 -2 0.1 -2 -0.5 -2 -1.5 -3 -1.6 -1.9 -2 -1.2zM279.5 183.2l-1 0.7 -1.2 2.6 -0.4 3 0.4 3 0.9 2 1.3 1.4 1 0.6 2 0.1 1 -0.4 1.4 -1.7 0.4 -2 -0.2 -2 -1 -3 -1.3 -2 -2.1 -2zM290.5 174.8l-1 1.1 -0.8 2.6 -0.3 3 0.4 3 0.7 1.6 1 1.3 1 0.6 2 0.2 1.2 -0.7 1.1 -2 0.2 -2 -0.2 -2 -0.7 -2 -1.7 -3 -1.9 -1.7zM300.5 166.8l-1 1.3 -0.7 2.4 -0.1 5 1 3 0.8 1 2 0.9 1 -0.2 1 -0.8 0.5 -0.9 0.5 -2 -0.2 -3 -0.6 -2 -1.6 -3 -1.6 -1.7zM309.5 159.2l-1 1.3 -0.5 2 -0.3 3 0.1 3 1.1 3 1.6 1.3 1 0.1 1 -0.3 1 -1.4 0.5 -1.7 0 -3 -0.9 -3 -1 -2 -1.6 -2.1zM317.5 152l-0.9 1.5 -0.5 2 -0.3 3 0.1 3 1 3 1.6 1.3 1 0 1 -0.5 0.9 -1.8 0.4 -2 -0.1 -2 -0.8 -3 -0.9 -2 -1.5 -2.2zM324.5 145.4l-0.8 2.1 -0.4 2 0 6 0.6 2 0.6 0.8 1 0.8 1 0.1 1 -0.7 0.9 -2 0.2 -4 -0.4 -2 -1.3 -3 -1.4 -2.1zM331.5 138.7l-1 1.5 -0.3 1.3 -0.4 3 0 4 0.4 2 0.5 1 0.8 0.9 1 0.4 1 -0.3 1 -1.6 0.5 -2.4 0.1 -2 -1.1 -4 -1.5 -2.9zM337.5 132.6l-1 1.6 -0.3 1.3 -0.3 7 0.2 2 0.6 1 0.8 0.9 1 0.3 1 -0.5 0.9 -1.7 0.5 -3 -0.1 -2 -1.8 -5zM342.5 127l-0.8 3.5 -0.3 6 0.5 3 1.6 1.4 1 -0.2 1.2 -2.2 0.5 -3 0.1 -3 -0.8 -0.4 -0.4 -1.6 -1.6 -3.4z"/>
<path fill="#3e70ff" d="M395.5 8.5l0.7 5 0.2 13 -0.2 15 -0.7 9.1 -1 -1.4 -1 3.9 -1 0.4 -1 3.4 -1 1.1 -1 3 -1 0.9 -1 3.5 -1 -0.1 -1 4.6 -1 -1.2 -1 5.1 -1 -0.9 -2 5.5 -1 -1 -1 5.7 -1 -1.1 -1 1.2 -1 5 -1 -2.1 -1 2.4 -1 4.6 -1 -2.3 -1 2.2 -1 5.1 -1 -2.3 -1 0.5 -1 6.8 -2 -3 -2 8.3 -1 -2.5 -1 -0.5 -1 6.7 -1 1.3 -1 -2.6 -1 -0.4 -1.2 7.1 -0.8 1.6 -0.5 -1.6 -1.5 -2.2 -1 3.1 -1 6.5 -2 -3.8 -1 0 -0.6 2.4 -0.9 6 -0.5 1.1 -2 -3.9 -1 0 -0.8 2.8 -1.2 7.3 -1.8 -3.3 -1.2 -1.3 -1.2 2.3 -0.8 7.3 -0.4 0.7 -0.6 0.3 -1.8 -3.3 -1 -1 -0.3 0 -0.9 1.2 -0.4 1.8 -0.7 7 -0.4 1 -0.5 0.3 -3 -4.8 -1 0.1 -1 2.4 -0.5 3 -0.3 7 0.4 1 2.4 1.5 1 0 1 -0.5 1.2 -2 0.8 -4.1 1 -0.5 2 0.8 1 -0.3 1.4 -1.9 0.8 -3 0.8 -1.4 2 0.5 1 -0.4 1.1 -1.7 0.9 -3.3 1 -0.6 1 0.2 1.2 -0.3 0.8 -1 1.6 -4 0.4 -0.3 1 0.1 1 -0.3 1.1 -1.5 0.9 -3 1 -0.6 1 0 1 -0.8 2 -4.2 1 0 1 -0.5 2 -4 1 -0.1 1 -0.6 2 -3.5 1 -0.3 1 -0.9 1 -2 2 -1.5 2 -2.9 1 -0.6 2 -2.7 17 -18.1 3 -4.1 1 -0.6 1 0.4 1 -0.1 2 -3.1 1 -0.9 3 -1.4 1 -0.2 1.1 0.3 1.1 2 0.1 3 -0.4 4 -2.8 12 -5.6 17 -7.8 19 -8.2 17 -10 18 -9.1 14 -13.7 18 -14.7 17.6 -16 17.4 -17 16.9 -14 12.9 -16 13.8 -18 14.8 -13 9.5 -12 7.5 -12 6.1 -12 5 -12 3.9 -17 4.1 -19 2.8 -20 1.5 -20 0 -18 -1.3 -8 -1.2 -8 -1.6 -6 -1.8 -5 -1.9 -4 -2.2 -3.6 -2.8 -1.5 -2 -1.2 -3 -0.1 -2 0.6 -3 1.6 -3 2.2 -3 6.5 -6 8.6 -6 9.9 -5.5 7 -3.1 17 -5.9 5.7 -2.5 4.5 -3 2.2 -3 0.2 -3 -1.5 -3 -3.3 -3 -4.8 -2.2 -4 -0.8 -4 0 -14 2.1 -5 0.1 -2 -0.3 -2.4 -0.9 -1.6 -1.2 -1.4 -1.8 -0.7 -3 0.3 -3 1.3 -4 2 -4 3.6 -6 4.2 -6 4.1 -5 4.6 -4.8 5 -4.4 7 -5.4 8 -5.6 7 -4.3 7 -3.3 12.5 -4.2 9.9 -4 15.6 -7.4 13 -5.6 13 -6.9 11 -5.2 11 -6.4 10 -5.1 9 -5.7 8 -4.4 8 -5.5 8 -4.8 6 -4.5 7 -4.4 6 -4.8 5 -3.3 5 -4.3 5 -3.5 5 -4.5 4 -2.9 4 -3.9 4.9 -3.9 3.1 -3.3 4 -3.3 3 -3.3 3 -2.4 17 -17.9 2 -2.7 3 -3.1 2 -2.8 2 -1.9 2 -2.8 2 -1.8 2 -2.8 2 -1.9 1 -1.5 2 -1.9 2 -2.7 1 -0.8 5 -6 1 -0.7 2 -2.6 1 -0.7 1 -1.5 3 -3.3 1 -0.7 1 -1.5 1 -0.6 1 -1.5 5 -4.9 1 -1.4 1 -0.4zM161.5 250.2l-2 0.8 -1.8 1.5 -1.5 3 0.1 3 1.2 2 1 1 2 1.2 2 0.7 4 0.4 4 -0.5 1.9 -0.8 1.4 -1 1.1 -2 0 -2 -0.9 -2 -1.8 -2 -2.7 -1.9 -3 -1.2 -3 -0.5zM190.5 236.4l-1.9 1.1 -0.9 1 -1.3 3 0.2 3 0.9 1.7 1 1.1 3 1.7 4 0.7 3 -0.3 2 -0.9 1 -0.9 0.9 -2.1 -0.2 -2 -0.9 -2 -1.8 -2 -2.8 -2 -2.2 -1 -2 -0.3zM213.5 224.3l-2 2.2 -0.8 3 0.3 3 1.1 2 2.4 1.9 3 1 3 -0.1 2 -0.6 1 -0.8 1 -1.4 0.4 -2 -0.9 -3 -1.4 -2 -2.2 -2 -2.9 -1.5 -2 -0.3zM234.5 212.4l-1 0.6 -1 1 -1.1 2.5 -0.3 3 0.8 3 1.6 2 3 1.5 3 0.2 2 -0.7 1.2 -1 0.9 -2 0 -2 -1 -3 -1.5 -2 -2.6 -2.3 -2 -0.9zM251.5 201.9l-1.7 1.6 -0.9 2 -0.4 3 0.5 3 1.5 2.5 2 1.4 2 0.5 2.6 -0.4 1.5 -1 1 -2 0.2 -2 -0.8 -3 -2 -3 -2.3 -2 -1.2 -0.6zM266.5 192l-1 0.6 -0.7 0.9 -0.8 2 -0.4 3 0.2 3 0.8 2 1.9 2 2 0.8 2 -0.1 2 -1.2 0.9 -1.5 0.4 -2 -0.5 -3 -1.6 -3 -1.7 -2 -1.5 -1.1 -1 -0.4zM278.5 183.4l-1 1.7 -0.7 2.4 -0.2 3 0.5 3 1 2 1.4 1.3 2 0.6 2 -0.4 1.6 -1.5 0.7 -2 0 -3 -0.6 -2 -1.9 -3 -1.8 -1.9 -1 -0.6 -1 -0.2zM290.5 174.4l-1.1 1.1 -1 3 -0.3 3 0.2 3 0.7 2 1.5 1.8 1 0.5 2 0.2 1.1 -0.5 1.5 -2 0.5 -2 -0.2 -3 -0.6 -2 -2 -3 -2.1 -2zM300.5 166.4l-1 1.1 -0.9 3 -0.3 4 0.3 3 0.9 2 1 1 1 0.5 2 0 1 -0.6 1.2 -1.9 0.5 -2 -0.1 -3 -1.3 -3 -2.1 -3 -1.2 -1.1zM309.5 158.8l-1 1.2 -0.7 2.5 -0.4 4 0.1 3 0.5 2 0.7 1 1.5 1 1.3 0.2 1 -0.3 1 -0.9 0.6 -1 0.5 -2 0.2 -3 -0.5 -2 -2.4 -4 -1.4 -1.5zM317.5 151.7l-1 1.4 -0.6 2.4 -0.4 4 0.2 4 0.2 1 1.6 1.7 2 0.5 1 -0.5 1.2 -1.7 0.7 -3 0 -3 -0.1 -1 -2.6 -4 -1.2 -1.6z"/>
<path fill="#3876fe" d="M395.3 10.5l0.2 -0.7 0.6 4.7 0.2 11 -0.1 15 -0.7 9 -1 -1 -1 3.9 -1 0.5 -1 3.4 -1 1.1 -1 3 -1 0.9 -1 3.5 -1 0 -1 4.4 -1 -1 -1 4.9 -1 -0.6 -2 5.4 -1 -0.9 -1 5.4 -1 -0.9 -1 1.2 -1 4.8 -1 -1.8 -1 2.4 -1 4.3 -1.1 -1.9 -0.9 1.9 -1 4.9 -1 -1.9 -1 0.5 -1 6.1 -1 -0.7 -1 -1.6 -2 7.9 -1 -2.1 -1 -0.5 -1 5.7 -1 2 -1 -2.3 -1 -0.3 -1.3 6.4 -0.7 1.7 -0.8 -1.7 -1.2 -1.5 -0.9 2.5 -1.1 6.1 -1 -0.9 -1 -1.9 -1 -0.1 -2 8.7 -2 -3 -1 -0.1 -0.7 2.2 -1.3 6.8 -1 -0.7 -1 -1.8 -1 -0.9 -1 1.3 -1.1 6.3 -0.9 2.1 -2 -2.8 -1 -0.8 -0.4 0.5 -1 2 -1 6 -0.6 1.7 -1 -0.8 -2 -2.7 -1 0 -1.2 2.8 -0.9 6 -0.9 1.7 -3 -3.7 -1 -0.2 -1 1.3 -0.6 1.9 -1.4 8.1 -1 -0.4 -3 -3.6 -1.1 -0.1 -0.9 1 -0.7 2 -1.3 9.2 -1 -0.4 -2.3 -2.8 -1.7 -1.4 -1 -0.1 -1 1.1 -0.9 2.4 -0.5 3 -0.1 7 1.5 1.5 2 0.9 2 -0.1 1 -0.5 1.5 -1.8 1.5 -5.6 3 0.6 2 -0.2 1 -0.7 0.8 -1.1 1.2 -3.8 0.7 -1.2 0.3 -0.3 3 0.3 1.7 -1 1.2 -2 1.1 -3.3 1 -0.4 2 0.1 1 -0.5 1.5 -1.9 1.5 -3.6 3 -0.6 1.6 -1.8 1.4 -3.4 3 -0.9 0.7 -0.7 2.3 -4.4 2 -0.5 1 -0.9 2 -4 2 -0.7 0.5 -0.5 2.2 -4 2.3 -1.3 2 -3.7 2 -1 2 -3.5 2 -1.2 2 -3.2 2 -1.4 1.9 -2.7 1.1 -0.9 2 -2.6 20 -21.4 3 -3.9 1 -0.5 1 0.2 1 -0.2 3 -3.7 3 -1 1 0.3 1.1 1.7 0.3 3 -0.4 4 -2.6 11 -4.9 15 -7.8 19 -8.1 17 -8.8 16 -9.6 15 -12.9 17 -15.3 18.3 -15 16.3 -17 16.9 -14 12.9 -15 12.9 -21 17 -13 9.4 -11 7 -11 5.8 -12 5.3 -13 4.4 -17 4.2 -18 2.9 -19 1.6 -20 0.2 -18 -1.3 -8 -1.1 -7 -1.4 -7 -2 -5 -2 -4.1 -2.3 -2.9 -2.4 -1.8 -2.6 -0.7 -2 -0.2 -2 0.6 -3 0.9 -2 2.1 -3 2.8 -3 3.4 -3 8.5 -6 9.4 -5.2 8 -3.4 16 -5.9 5.5 -2.5 4.2 -3 2 -3 0.2 -3 -1.5 -3 -3.2 -3 -2.2 -1.3 -3 -1.3 -4 -0.9 -4 -0.2 -13 1.5 -5 0.2 -3 -0.6 -2 -0.8 -1.9 -1.6 -0.7 -1 -0.6 -2 0 -3 1.1 -4 1.8 -4 3 -5 4.3 -6.2 4 -4.9 4.7 -4.9 5.3 -4.6 6 -4.7 9 -6.2 6 -3.7 7 -3.3 13.2 -4.5 9.8 -4 14 -6.7 14.5 -6.3 12.5 -6.6 11.3 -5.4 10.7 -6.2 10 -5.1 9 -5.7 8 -4.4 9 -6.2 6 -3.4 7 -5.2 7 -4.5 6 -4.8 5 -3.2 5 -4.3 5 -3.5 5 -4.6 4 -2.9 4 -3.8 4.1 -3.2 3.9 -4 4 -3.3 3 -3.3 3 -2.5 17 -17.9 2 -2.7 3 -3.1 2 -2.7 2 -1.9 2 -2.8 2 -1.9 2 -2.7 2 -1.9 1 -1.5 2 -1.9 2 -2.7 1 -0.8 5 -6 1 -0.7 2 -2.5 1 -0.7 1 -1.6 3 -3.3 1 -0.6 1 -1.6 1 -0.6 1 -1.4 1 -0.8 3 -3.4 1 -0.6 1 -1.4 1 -0.4zM163.5 249.5l-2 0.2 -2 0.8 -1.5 1 -1.6 2 -0.8 2 -0.2 2 0.5 2 0.6 1 1 1.1 2 1.3 2 0.8 3 0.6 5 -0.2 2.1 -0.6 2 -1 1.9 -2 0.4 -2 -0.4 -2 -1.3 -2 -2.2 -2 -2.5 -1.5 -3 -1.1zM189.5 236.4l-2.4 2.1 -1.2 3 0.1 3 0.9 2 0.9 1 1.7 1.3 1.6 0.7 4.4 0.7 2 -0.1 2.4 -0.6 1.6 -0.9 1 -1 0.8 -2.1 -0.2 -2 -1 -2 -1.7 -2 -2.6 -2 -3.3 -1.4 -3 -0.3zM214.5 223.4l-2 1.2 -1.8 2.9 -0.5 2 0 2 1.1 3 2.2 2.1 3 1.2 4 0.1 3 -1.1 1.3 -1.3 0.8 -2 -0.3 -3 -1.1 -2 -1.7 -2 -3 -2.1 -3 -1.1zM233.5 212.5l-1.7 2 -1 3 -0.1 3 1.1 3 1.7 1.9 3 1.3 3 0.1 3 -1.2 1.6 -2.1 0.4 -2 -0.6 -3 -1.1 -2 -1.9 -2 -3.4 -2.3 -2 -0.4zM251.5 201.5l-1 0.6 -1 1.3 -0.9 2.1 -0.5 4 0.6 3 1.2 2 2.6 1.6 3 0.4 2 -0.4 2 -1.6 0.9 -2 0.2 -2 -0.7 -3 -2.2 -3 -2.2 -2 -2 -1.1zM265.5 192.2l-1.5 2.3 -0.7 3 -0.1 3 0.6 3 1.4 2 1.6 1 2.7 0.5 2 -0.4 1.5 -1.1 1.1 -2 0.4 -3 -0.7 -3 -1.4 -2 -3 -3 -1.9 -0.9 -1 0zM279.5 182.5l-1.4 1 -1.3 3 -0.6 4 0.3 3 0.6 2 1.4 1.6 2 0.9 2 0.1 2 -0.9 1.4 -1.7 0.7 -3 -0.2 -3 -0.9 -2 -2.5 -3 -1.5 -1.4 -1 -0.5zM290.5 174l-1.3 1.5 -1 3 -0.5 4 0.3 4 1.3 2 1.2 0.8 2 0.5 1 -0.1 2 -1 1.4 -2.2 0.5 -3 0 -3 -0.4 -1 -4.5 -4.9 -1 -0.6z"/>
<path fill="#327cfc" d="M395.4 11.5l0.1 -0.3 0.5 5.3 0.2 12 -0.1 12 -0.6 7.9 -1 -0.6 -1 3.9 -1 0.6 -1 3.4 -1 1.1 -1 3.1 -1 0.9 -1 3.4 -1 0.1 -1 4.3 -1 -0.8 -1 4.7 -1 -0.4 -2 5.3 -1 -0.8 -1 5.1 -1 -0.6 -1 1.1 -1 4.6 -1 -1.5 -1 2.3 -1 4.1 -1 -1.7 -0.8 1.5 -1.2 5.1 -1 -1.5 -1 0.4 -1 5.7 -1 -0.4 -1 -1.4 -2 7.5 -1 -1.8 -1 -0.4 -1 5 -1 2.3 -1 -1.9 -1 -0.4 -1.3 5.8 -0.7 1.9 -2 -2.8 -1 2.6 -1 5.3 -1 -0.4 -1 -1.7 -1 0 -2 8 -1 -0.8 -1 -1.6 -1 -0.1 -0.9 2.6 -1.1 5.6 -1 -0.2 -0.9 -1.4 -1.1 -1 -1 1.3 -1.2 5.7 -0.8 2.1 -3 -2.9 -0.8 0.8 -0.7 2 -1.5 6.5 -1 -0.3 -2 -2.4 -1 0 -1.1 2.2 -0.9 4.8 -1 2.7 -1 -0.6 -2 -2.2 -1 -0.3 -0.5 0.6 -1 2 -1.5 7.2 -1 0.4 -3 -2.9 -1 -0.1 -1 1 -0.6 1.4 -1.4 7.1 -1 1.4 -4 -3.3 -1 -0.1 -1 1 -0.8 1.9 -1.4 7 -0.8 1.8 -1 -0.4 -2.6 -2.4 -1.4 -0.9 -1 0 -1 0.9 -1.3 3 -1.1 7 -0.6 1.7 -1 -0.2 -4 -3.3 -1 -0.5 -1 -0.1 -1 0.5 -0.7 0.9 -1 2 -0.9 5 -0.1 6 1.1 1 2.6 1.1 3 0.2 1.1 -0.3 1.6 -1 1.4 -2 1.2 -4 0.7 -1.4 4 0.5 2 -0.4 1 -0.6 1.7 -2.1 1.4 -4 0.9 -0.8 4 -0.1 1.9 -1.1 1.1 -1.6 2 -4.2 3 -0.3 2 -0.9 1.5 -2 1.5 -3.3 1 -0.6 2 -0.2 1.6 -0.9 0.9 -1 2.2 -4 3.3 -1.2 1.7 -1.8 1.5 -3 0.8 -0.6 2 -0.7 1 -0.7 2.4 -4 3.3 -2 2.3 -3.8 3 -2 2 -3.4 3 -2.3 2 -3.4 2 -1.4 2 -3.2 2 -1.6 2 -2.9 2.3 -2 1.7 -2.5 2 -1.7 2 -2.7 23 -24.7 3 -3.6 1 -0.6 2 -0.1 3 -3.3 1 -0.4 2 0.1 0.5 0.5 0.6 1 0.3 3 -0.8 6 -2.5 10 -3.7 11 -6.7 17 -4.1 9 -7 14 -7.3 13 -5.6 9 -6.3 9 -6.9 9 -11.5 14.2 -17 19 -19 19.1 -15 13.8 -16 13.7 -21 16.8 -12 8.8 -11 7.1 -12 6.6 -12 5.4 -12 4.3 -9 2.6 -8 1.9 -18 3.1 -19 1.7 -19 0.3 -18 -1.1 -8 -1.1 -8 -1.6 -6 -1.8 -5 -2 -4 -2.3 -2.9 -2.5 -1.4 -2 -0.7 -2 -0.2 -2 0.6 -3 1 -2 2.1 -3 5 -5 7.5 -5.4 9 -5 9 -4 15 -5.6 6 -2.9 4.2 -3.1 1.9 -3 0.2 -3 -1.6 -3 -3.7 -3.4 -5 -2.5 -4 -1.1 -4 -0.4 -4 0.1 -10 1.1 -4 -0.1 -4 -1 -2 -1.5 -0.9 -1.2 -0.7 -2 0 -3 1.2 -4 1.9 -4 3 -5 3.5 -5 4 -4.8 4 -4.1 6 -5.2 7 -5.3 8 -5.5 6 -3.6 6 -2.8 13.7 -4.7 9.3 -3.8 14 -6.7 14.9 -6.5 12.1 -6.4 11.7 -5.6 11.3 -6.6 9 -4.5 9 -5.8 8 -4.3 8 -5.5 7.2 -4.3 6.8 -5 7 -4.5 6 -4.8 5 -3.2 5 -4.3 5 -3.5 5 -4.6 4 -2.9 4 -3.9 4 -3 4 -4.1 4 -3.3 3 -3.3 3 -2.5 17 -17.9 2 -2.7 3 -3.1 2 -2.7 2 -1.9 2 -2.8 2 -1.9 2 -2.7 2 -1.9 1 -1.5 2 -1.9 2 -2.7 1 -0.7 5 -6 1 -0.7 2 -2.6 1 -0.7 1 -1.5 3 -3.3 1 -0.6 1 -1.6 1 -0.6 1 -1.5 1 -0.6 3 -3.4 1 -0.6 1 -1.4 1 -0.4zM161.5 249.2l-2 0.7 -2.2 1.6 -1.6 2 -0.8 2 -0.2 2 0.4 2 1.2 2 1.2 1 1.7 1 2.3 0.8 3 0.5 3 0 5 -1.1 2 -1 1.3 -1.2 0.9 -2 0 -2 -0.7 -2 -2.5 -2.7 -3 -2 -3 -1.2 -3 -0.6zM191.5 235.3l-2 0.6 -2 1.4 -0.9 1.2 -1 2 -0.4 2 0.1 2 0.8 2 0.7 1 2.7 2 2 0.7 3 0.5 3 0 2 -0.5 3 -1.5 1.4 -2.2 0.3 -2 -0.6 -2 -1.2 -2 -2.1 -2 -3.3 -2 -2.5 -0.9zM213.5 223.4l-2.3 2.1 -1.3 3 -0.2 2 0.1 2 1.3 3 2.6 2 3.8 1 4 -0.2 3 -1.4 1.2 -1.4 0.5 -1 0.3 -2 -0.7 -3 -1.4 -2 -2.2 -2 -3.7 -2.1 -3 -0.6zM235.5 211.4l-1 0.2 -1.6 0.9 -0.9 1 -1 2 -0.8 4 0.1 2 0.6 2 1.6 2.1 3 1.5 3 0.4 3 -0.6 2.2 -1.4 1.2 -2 0.4 -2 -0.4 -3 -1.1 -2 -3.3 -3 -3 -1.7zM251.5 201l-1 0.6 -1 1.2 -1.2 2.7 -0.6 4 0.1 2 0.5 2 1.2 1.8 2 1.3 3 0.6 3 -0.4 2.1 -1.3 1.3 -2 0.5 -3 -0.4 -3 -1.3 -2 -3.5 -3 -2.7 -1.5zM266.5 191.2l-1.7 1.3 -1.4 3 -0.7 4 0.2 4 0.9 2 1.7 1.4 3 0.8 2 -0.1 2.4 -1.1 1.6 -2 0.8 -3 0.1 -4 -0.5 -1 -4.8 -4 -1.6 -1z"/>
<path fill="#2f82f9" d="M395.3 13.5l0.2 -0.9 0.5 5.9 0.2 11 -0.2 10 -0.5 7.7 -1 -0.1 -1 4 -1 0.6 -1 3.4 -1 1.1 -1 3.1 -1 0.9 -1 3.4 -1 0.2 -1 4.2 -1 -0.7 -1 4.6 -1 -0.3 -2 5.2 -1 -0.6 -1 4.8 -1 -0.3 -1 1.1 -1 4.4 -1 -1.2 -1 2.1 -1 4.1 -1 -1.6 -1 1.8 -1 4.6 -1 -1.3 -1 0.4 -1 5.3 -1 0 -1 -1.4 -2 7.2 -1 -1.5 -1 -0.4 -1 4.6 -1 2.5 -1 -1.7 -1 -0.3 -2 7.3 -2 -2.4 -1 2.4 -1 4.9 -1 0 -1 -1.6 -1 0 -2 7.6 -1 -0.5 -1 -1.5 -1 0 -0.7 1.9 -1.3 5.6 -1 0.2 -1.6 -1.8 -0.4 -0.3 -0.3 0.3 -0.7 1 -2 7.2 -1 -0.5 -1.7 -1.7 -0.5 0 -0.8 0.9 -0.4 1.1 -1.6 6.4 -1 0.1 -2 -2.1 -1 0.1 -1 1.8 -2 7.1 -1 -0.1 -2 -2 -1 -0.2 -1.3 1.9 -1.7 6.7 -1 1 -3 -2.3 -1 -0.2 -0.8 0.8 -1.3 3 -0.9 4.3 -1 2 -1 -0.2 -3 -2.3 -1 0 -1 0.9 -1 2.3 -2 7.2 -1 0.2 -4 -2.7 -1.3 0.3 -0.7 0.6 -1 1.8 -2 7.9 -1 0.9 -1 -0.3 -4 -2.6 -1 -0.1 -1 0.5 -1 1.2 -0.9 2.1 -2.1 8.3 -1 0.3 -1 -0.4 -3.2 -2.2 -1.8 -0.7 -1 0 -1 0.5 -1 1.2 -1.4 3 -1.6 8.7 -1 0.3 -1 -0.4 -5 -3.1 -2 -0.5 -1 0.1 -1.3 0.9 -1.9 3 -0.8 3 -0.4 3 0.1 3 0.7 2 1.6 1.3 3 0.9 3 0.1 2 -0.3 2 -1.1 1.7 -1.9 0.8 -2 1 -4 0.5 -0.6 6 0.5 3 -0.8 2.2 -2.1 1.8 -4.5 1 -1.2 5 -0.3 2 -0.7 2 -1.7 2 -4.2 1 -1.1 4 -0.6 2 -0.8 1.9 -1.9 2.1 -4 1 -0.6 3 -0.5 2 -1.1 1.5 -1.8 1.6 -3 0.9 -0.8 4 -1.3 1 -0.9 2 -3.4 1 -1.1 3 -1.2 1 -0.7 3 -4.4 3.9 -2.2 3.1 -4.4 3 -1.7 3 -4.2 3 -2 2.5 -3.7 2.5 -1.8 2.2 -3.2 2.8 -2.5 2 -3.1 2.6 -2.4 2.1 -3 2.2 -2 2.1 -2.9 2 -1.8 1.7 -2.3 13.3 -14.7 16 -17.1 1 -0.5 2 -0.2 3 -2.8 1 -0.3 1 0.2 1 1.1 0.3 1.3 0.1 3 -0.4 3 -2.1 9 -3.5 11 -6.7 17 -4 9 -7 14 -7.3 13 -5.6 9 -6.2 9 -16.6 20.8 -8 9.4 -9 9.8 -19 19.2 -16 14.6 -16 13.6 -22 17.3 -12 8.8 -12 7.8 -11 6 -12 5.5 -12 4.4 -16 4.3 -18 3.2 -18 1.7 -19 0.4 -17 -1 -8 -1 -7 -1.4 -6 -1.6 -5 -1.9 -4 -2.1 -3.5 -2.8 -1.4 -2 -0.8 -2 -0.2 -2 0.7 -3 0.9 -2 2.2 -3 5.2 -5 7.2 -5 7.7 -4.3 8 -3.5 15 -5.8 5.1 -2.4 4.5 -3 1.9 -2 1.1 -2 0.1 -3 -1.6 -3 -1.9 -2 -2.2 -1.6 -5 -2.7 -4 -1.2 -5 -0.5 -13 0.7 -4 -0.2 -2 -0.4 -2 -0.8 -1.6 -1.3 -0.7 -1 -0.7 -2 0.1 -3 0.8 -3 1.8 -4 2.9 -5 3.4 -4.7 3.6 -4.3 3.9 -4 5.5 -4.9 7 -5.3 8 -5.5 6 -3.6 7 -3.3 13 -4.4 8 -3.2 15 -7.2 14 -6.1 13 -6.8 12 -5.7 11 -6.4 9 -4.6 9 -5.7 8 -4.4 8 -5.5 7.4 -4.4 6.6 -4.9 7 -4.4 5 -4.1 6 -4 5 -4.3 5 -3.5 5 -4.5 4 -2.9 4 -3.9 4 -3.1 4 -4.1 4 -3.2 3 -3.4 3 -2.4 3 -3.5 4 -3.7 2 -2.5 3 -2.7 3 -3.7 2 -1.8 2 -2.7 3 -3.1 2 -2.8 2 -1.9 2 -2.8 2 -1.8 2 -2.8 2 -1.8 1 -1.5 2 -1.9 2 -2.7 1 -0.8 5 -6 1 -0.7 2 -2.5 1 -0.7 1 -1.5 3 -3.3 1 -0.6 1 -1.6 1 -0.5 1 -1.5 1 -0.7 3 -3.3 1 -0.6 1 -1.4 1 -0.3zM159.5 249.4l-3 2.2 -1.4 1.9 -0.9 2 -0.3 2 0.3 2 1 2 1.3 1.3 2 1.1 3 1 3 0.4 3 0 3 -0.4 3 -1 2 -1.2 1.2 -1.2 1 -2 -0.2 -3 -1.1 -2 -2.9 -2.7 -4 -2 -4 -1.1 -3 -0.1zM189.5 235.4l-2.7 2.1 -1.3 2 -0.7 2 -0.2 2 0.2 2 0.7 1.6 1.1 1.4 1.9 1.3 2 0.8 5 0.7 3 -0.3 2 -0.5 2 -1 1.2 -1 1.1 -2 0.3 -2 -0.9 -3 -1.5 -2 -2.7 -2 -4.5 -2.1 -3 -0.5zM215.5 222.4l-2 0.5 -1 0.6 -1.7 2 -1 2 -0.7 4 0.2 2 0.8 2 0.8 1 1.6 1.2 4 1.3 4 0.1 2 -0.5 2 -0.9 2 -2 0.8 -2.2 -0.1 -3 -0.8 -2 -1.7 -2 -2.9 -2 -3.3 -1.6zM234.5 211.1l-2.1 1.4 -1.4 2 -0.7 2 -0.6 4 0.1 2 0.6 2 1.7 2 3.4 1.3 4 0.2 3 -0.8 2.2 -1.7 1.1 -2 0.5 -3 -0.3 -3 -1.7 -2 -4.4 -3 -3.4 -1.4z"/>
<path fill="#2d88f6" d="M395.4 14.5l0.1 -0.4 0.6 14.4 -0.2 10 -0.4 7.5 -1 0.4 -1 4 -1 0.7 -1 3.4 -1 1.1 -1 3.1 -1 1 -1 3.4 -1 0.2 -1 4.2 -1 -0.6 -1 4.4 -1 -0.1 -2 5.2 -1 -0.6 -1 4.6 -1 -0.1 -1 1 -1 4.4 -1 -1.1 -1 2 -1 4 -1 -1.3 -0.1 0.2 -0.9 1.5 -1 4.4 -1 -1.1 -1 0.4 -1 5 -1 0.2 -1 -1.2 -2 6.9 -1 -1.3 -1 -0.3 -1 4.2 -1 2.6 -1 -1.5 -1 -0.2 -2 7 -2 -2.1 -1 2.2 -1 4.6 -1 0.3 -1 -1.4 -1 0 -2 7.1 -1 -0.2 -1 -1.3 -1 -0.1 -0.9 2.3 -1.1 4.7 -1 0.6 -2 -2 -0.6 0.7 -0.6 1 -1.8 6.4 -1 -0.2 -1 -1.1 -1 -0.6 -0.5 0.5 -1 2 -1.5 5.5 -1 0.4 -2 -1.8 -1 0 -1.1 1.9 -1.9 6.5 -1 0.1 -2 -1.7 -1 -0.2 -0.3 0.3 -1.2 2 -1.5 5.6 -1 1.3 -1 -0.3 -2 -1.6 -1 -0.1 -1 0.9 -3 8.5 -1 0.1 -3 -2 -1 0 -1 0.9 -0.9 1.7 -2.2 7 -0.9 0.6 -4 -2.2 -1 0 -1 0.7 -1.5 2.9 -1.5 5.6 -1 1.4 -1 0.1 -4 -2.2 -1 -0.1 -1 0.5 -1.8 2.7 -2.2 7.3 -1 1 -1 0 -5 -2.4 -1 0 -1 0.5 -1 1.1 -1 1.7 -2 7.2 -1 1.8 -1 0.2 -1 -0.3 -5 -2.4 -2 0.1 -1 0.5 -1.5 1.7 -1 2 -2 8 -0.5 1.1 -1 0.3 -1 -0.2 -6 -2.8 -2 -0.3 -1 0.1 -1 0.5 -1.6 1.3 -1.2 2 -0.8 2 -0.7 3 -0.3 3 0.2 3 0.5 1 1.5 1 4.4 1.1 3 0.1 3 -0.5 2 -0.9 2.1 -1.8 1 -2 1.3 -4 0.6 -0.8 1 -0.3 6 0.1 3.5 -1 2.4 -2 2.1 -4.4 1 -1.3 1 -0.4 5 -0.5 2 -0.6 2.4 -1.8 2.6 -4.7 1 -0.8 5 -1 2 -1 1.6 -1.5 2.4 -4 1 -0.8 4 -1 2 -1.2 4 -5.3 5 -2 1.6 -1.7 2.4 -3.5 4.9 -2.5 3.1 -4.2 4 -2.3 3.6 -4.5 3.4 -2.2 3 -3.9 3.8 -2.9 2.2 -3.1 3 -2.3 3 -3.9 2.1 -1.7 2.9 -3.8 2 -1.8 2.5 -3.4 2.5 -2.5 2 -2.7 2 -1.9 6 -7.1 16 -17.6 12 -12.6 1 -1 1 -0.4 2 -0.3 3 -2.3 1 0 1 0.9 0.4 1.5 -0.2 5 -2 9 -3.2 10 -6.2 16 -4.5 10 -7 14 -6.7 12 -5 8 -6.1 9 -6.1 8 -9.4 11.6 -17 19.3 -19 19.2 -15 13.8 -16 13.6 -15 12 -22 16.3 -12 7.8 -11 6.1 -11 5.1 -12 4.5 -15 4.2 -17 3.3 -18 2 -19 0.6 -17 -0.9 -8 -1 -7 -1.3 -6 -1.6 -5 -1.8 -4 -2.1 -3.3 -2.7 -1.4 -2 -0.8 -2 -0.2 -2 0.4 -2 0.8 -2 1.9 -3 5 -5 7.1 -5 7.2 -4 7.3 -3.3 15 -5.9 5.8 -2.8 4.3 -3 1.9 -2 1.1 -2 0.1 -3 -1.6 -3 -2 -2 -2.7 -2 -4.9 -2.6 -4 -1.3 -5 -0.7 -13 0.3 -4 -0.3 -2 -0.5 -1.9 -0.9 -1.9 -2 -0.6 -2 0 -3 0.9 -3 1.3 -3 2.3 -4 3.5 -5 3.4 -4.1 4 -4.1 5 -4.4 7 -5.5 8 -5.5 6 -3.6 7 -3.3 13.2 -4.5 7.8 -3.2 15 -7.1 14 -6.1 13 -6.9 12 -5.7 10 -5.8 10 -5.1 9 -5.8 8 -4.3 8 -5.6 7.6 -4.4 6.4 -4.8 7 -4.5 5 -4 6 -4 5 -4.4 5 -3.4 5 -4.6 4 -2.9 4 -3.9 4 -3 4 -4.1 4 -3.3 3 -3.3 3 -2.5 3 -3.4 4 -3.7 2 -2.5 3 -2.7 3 -3.8 2 -1.8 2 -2.7 3 -3 2 -2.8 2 -1.9 2 -2.8 2 -1.8 2 -2.8 2 -1.8 1 -1.6 2 -1.8 2 -2.8 1 -0.7 5 -6 1 -0.7 2 -2.5 1 -0.7 1 -1.5 3 -3.2 1 -0.6 1 -1.6 1 -0.6 1 -1.4 1 -0.7 3 -3.3 1 -0.5 1 -1.4 1 -0.3zM161.5 248.3l-2 0.6 -2.6 1.6 -1.8 2 -1.2 2 -0.8 3 0.2 2 0.8 2 1.4 1.6 2 1.2 3 1 3 0.5 4 0 3 -0.4 3 -0.9 2 -1 2.2 -2 0.9 -2 0 -3 -0.9 -2 -1.8 -2 -3.3 -2 -4.1 -1.6 -4 -0.8zM191.5 234.5l-2 0.5 -2 1.2 -1.3 1.3 -1.2 2 -0.8 2 -0.3 3 0.3 2 1.1 2 1.2 1.1 2 1.1 5 1.1 3 0 3 -0.4 2.5 -0.9 1.6 -1 1.7 -2 0.7 -2 -0.1 -3 -0.9 -2 -2 -2 -4.5 -2.5 -4 -1.3zM213.5 222.5l-2.5 2 -1.2 2 -0.8 2 -0.5 3 0 2 0.5 2 0.5 1 1 1.1 2 1.2 5 0.9 5 -0.5 1.9 -0.7 1.5 -1 1.6 -2 0.7 -2 0.3 -3 -0.5 -3 -3 -2 -6.3 -3 -3.2 -0.5z"/>
<path fill="#2d8df2" d="M395.3 16.5l0.2 -0.9 0.5 11.9 -0.3 14 -0.2 3.3 -1 0.8 -1 4.1 -1 0.8 -1 3.4 -1 1.2 -1 3.1 -1 1 -1 3.4 -1 0.2 -1 4.1 -1 -0.4 -1 4.2 -1 0.1 -2 5.1 -1 -0.5 -1 4.5 -1 0 -1 1 -1 4.2 -1 -0.9 -0.7 1.3 -1.3 4.6 -1 -1.2 -1 1.7 -1 4.2 -1 -0.9 -1 0.4 -1 4.8 -1 0.4 -1 -1.1 -2 6.6 -1 -1.1 -1 -0.2 -2 6.5 -1 -1.2 -1 -0.3 -2 6.8 -2 -1.8 -1 2.1 -1 4.3 -1 0.5 -1 -1.3 -1 0.1 -2 6.7 -1 0 -1 -1.2 -1 0 -1 2.6 -1 3.9 -1 0.8 -2 -1.7 -1 1.1 -2 6.5 -1 0.1 -2 -1.5 -0.9 0.8 -2.1 6.7 -1 0.6 -2 -1.6 -1 0.1 -1 1.6 -2 6.3 -1 0.3 -2 -1.4 -1 -0.2 -0.6 0.6 -1.1 2 -1.3 4.6 -1 1.6 -1 -0.2 -2 -1.4 -1 -0.1 -1 0.9 -3 8 -1 0.4 -3 -1.7 -1 0 -1 0.8 -1.1 2.1 -1.9 5.8 -1 0.9 -1 -0.1 -3 -1.6 -1 0 -1 0.8 -1.3 2.2 -1.7 5.2 -1 1.8 -1 0.3 -4 -1.8 -1 0 -1 0.4 -1.6 2.1 -2.4 6.8 -1 1.4 -1 0.2 -1 -0.2 -4 -1.7 -2 0.5 -1 1 -1.2 2 -2.5 7 -0.3 0.6 -1 0.7 -2 -0.4 -4 -1.6 -2 0.1 -1 0.5 -1.2 1.1 -1.2 2 -2.6 7.7 -1 1.1 -2 0.1 -6 -2.2 -2 0.1 -2 1.1 -2.2 3.1 -1.2 3 -1.6 6 -1 0.9 -2 -0.2 -5 -1.9 -3 -0.7 -2 0.1 -2 0.9 -1.9 1.9 -1.3 2 -1 3 -0.7 4 0.3 4 0.7 1 1.9 0.8 4 0.9 4 0.2 3 -0.4 3 -0.9 2 -1.2 1.3 -1.4 1.1 -2 1.4 -4 1.2 -1 8 -0.3 4 -1.2 2 -1.4 1 -1.1 2 -4 1 -1.3 2 -0.7 5 -0.5 3 -1 2 -1.5 3 -4.8 1 -0.9 6 -1.4 2 -0.9 2.2 -2 2.8 -4 1 -0.7 4 -1.1 2.4 -1.2 1.6 -1.5 3 -4 6 -2.6 1.8 -1.9 2.2 -3 5.6 -3 3.4 -4.2 5 -3 4 -4.7 4 -2.6 3 -3.8 3.8 -2.7 2.3 -3 3.7 -3 3.2 -4 2.5 -2 2.5 -3.3 3 -2.7 2 -2.8 2.3 -2.2 2.7 -3.5 2 -2 2 -2.7 8 -9 21 -22.8 8 -8 3 -0.7 3 -1.5 0.4 0.2 0.8 1 0.4 2 -0.5 5 -2.1 8.7 -2.7 8.3 -5.9 15 -4 9 -6.9 14 -6.8 12 -5.6 9 -5.5 8 -6 8 -8.6 10.6 -17 19.3 -19 19.2 -15 13.8 -16 13.5 -15 11.9 -22 16.2 -12 7.8 -11 6.3 -11 5.2 -12 4.7 -16 4.6 -17 3.3 -18 2 -17 0.5 -17 -0.8 -8 -1 -7 -1.3 -6 -1.6 -5 -1.9 -4 -2.3 -2.3 -2 -1.4 -2 -0.8 -2 -0.1 -2 0.3 -2 2.2 -4 4.8 -5 5.4 -4 7.9 -4.5 7.5 -3.5 14.8 -6 6.1 -3 4.2 -3 1.9 -2 1.1 -2 0.2 -3 -1.6 -3 -2.1 -2 -2.7 -2 -5.4 -2.8 -4 -1.4 -5 -1 -13 0 -4 -0.4 -3.5 -1.4 -1.8 -2 -0.6 -2 0.1 -3 0.9 -3 1.4 -3 2.4 -4 2.9 -4 3.4 -4 3.8 -3.9 5 -4.4 7 -5.4 7 -4.8 6 -3.7 7 -3.3 13.2 -4.5 7.8 -3.1 15 -7.2 14 -6.1 13 -6.9 12 -5.6 10 -5.9 10 -5.1 9 -5.8 8 -4.3 8 -5.5 7.6 -4.5 6.4 -4.8 7 -4.4 5 -4.1 6 -4 5 -4.3 5 -3.5 5 -4.6 4 -2.8 4 -3.9 4 -3.1 4 -4.1 4 -3.3 3 -3.3 3 -2.4 3 -3.5 4 -3.7 2 -2.5 3 -2.7 3 -3.7 2 -1.8 2 -2.8 3 -3 2 -2.8 2 -1.9 2 -2.8 2 -1.8 2 -2.8 2 -1.8 1 -1.5 2 -1.9 2 -2.7 1 -0.8 5 -5.9 1 -0.7 2 -2.6 1 -0.6 1 -1.5 3 -3.3 1 -0.5 1 -1.6 1 -0.5 1 -1.5 1 -0.6 3 -3.3 1 -0.5 1 -1.4 1 -0.2zM159.5 248.4l-2 1.1 -2.3 2 -1.4 2 -1.3 3 -0.3 2 0.3 2 1 2 2 1.7 3 1.3 3 0.6 3 0.2 4 -0.1 3.5 -0.7 2.8 -1 1.8 -1 2 -2 1.2 -3 -0.2 -3 -1 -2 -2.1 -1.8 -4.4 -2.2 -5.6 -1.6 -4 -0.2zM190.5 234.2l-2 0.8 -1.9 1.5 -1.6 2 -1 2 -0.8 3 0 2 0.3 2 1.1 2 1.9 1.3 2 0.8 3 0.6 3 0.2 3 -0.2 3 -0.6 2.8 -1.1 1.4 -1 1.6 -2 0.9 -3 -0.1 -4 -0.6 -1.4 -2.9 -1.6 -7.1 -2.8 -3 -0.6z"/>
<path fill="#2a92ee" d="M395.4 17.5l0.1 -0.3 0.4 12.3 -0.4 14 -1 1.3 -1 4.2 -1 0.9 -1 3.4 -1 1.2 -1 3.1 -1 1 -1 3.4 -1 0.3 -1 4.1 -1 -0.4 -1 4.2 -1 0.2 -2 5 -1 -0.4 -1 4.3 -1 0.2 -1 1 -1 4.1 -1 -0.7 -1 1.8 -1 3.9 -1 -1 -1 1.6 -1 4.1 -1 -0.7 -1 0.4 -1 4.5 -1 0.6 -1 -1 -2 6.4 -1 -0.9 -1 -0.3 -2 6.4 -1 -1.1 -1 -0.2 -2 6.5 -2 -1.5 -1 2 -1 4 -1 0.7 -1 -1.1 -1 0 -2 6.4 -1 0.2 -1 -1 -1 0 -1 2.4 -1 3.8 -1 0.9 -2 -1.5 -1 1 -2 6.3 -1 0.2 -1 -0.9 -1 -0.5 -0.2 0.2 -0.9 1 -1.9 5.9 -1 0.9 -2 -1.4 -1 0 -1 1.6 -2 5.9 -1 0.6 -2 -1.3 -1 -0.1 -1 1 -2 5.7 -1 1.7 -1 0 -2 -1.2 -1 -0.1 -1 0.8 -3 7.5 -1 0.6 -3 -1.4 -1 0 -1 0.8 -1.3 2.5 -1.7 4.9 -1 1.1 -1 0 -3 -1.4 -1 0.1 -1 0.7 -1.1 1.6 -1.9 5.2 -1 1.8 -1 0.6 -4 -1.5 -1 0 -1 0.4 -1.9 2.5 -2.1 5.6 -1 1.6 -1 0.5 -1 -0.2 -4 -1.4 -2 0.5 -2 2.4 -2.9 7 -1.1 1.3 -2 0 -4 -1.4 -2 0.1 -1 0.5 -2.2 2.5 -2.8 6.9 -1 1.5 -1 0.6 -1 0 -5 -1.5 -2 -0.2 -2.3 0.7 -1.2 1 -1.6 2 -1.4 3 -1.5 4.5 -1 1.6 -1 0.5 -2 -0.1 -7 -1.8 -2 0.1 -2 0.9 -2 1.8 -1.6 2.5 -1.2 3 -1.2 4.5 -1 1.7 -1 0.4 -2 -0.1 -7 -2.1 -3 -0.3 -3 0.5 -2 1.1 -2.3 2.3 -1.7 3 -1.1 4 -0.1 4 0.2 1 1 1.4 2 1 3 0.6 4 0.4 4 -0.1 3 -0.4 3 -0.9 2 -1.1 2.1 -1.9 1.1 -2 1.4 -4 0.9 -1 1.5 -0.5 9 -0.2 3 -0.7 2 -0.8 1.3 -0.8 1.7 -1.7 2.4 -4.3 1.6 -1.6 2 -0.6 6 -0.6 3.4 -1.2 2.7 -2 2.9 -4.4 1 -1 2 -0.7 5 -1 2.3 -0.9 2.6 -2 2.9 -4 1.2 -1 6 -1.8 2 -1.1 1.3 -1.1 3.7 -4.5 5 -2 2 -1.1 1.5 -1.4 2.5 -3.2 1 -0.8 4 -1.8 1.9 -1.2 4.1 -4.6 5 -2.9 4 -4.4 4 -2.5 4 -4.4 4 -2.8 3 -3.6 4 -3.1 3 -3.6 3 -2.4 3 -3.7 3 -2.6 24 -27.6 13.5 -14.8 8.5 -8.9 7 -6.7 5 -1.2 1 0.4 0.5 1.4 0 3 -1.2 7 -2.3 8 -4.5 12 -4.1 10 -5.2 11 -5.7 11 -5.8 10 -5 8 -6.3 9 -12.7 16 -16.7 19 -18 18.2 -16 14.7 -16 13.5 -17 13.3 -20 14.5 -11 7.3 -12 7 -12 5.8 -11 4.4 -8 2.6 -8 2.2 -16 3.3 -17 2 -18 0.8 -17 -0.8 -7 -0.8 -7 -1.3 -6 -1.5 -5 -1.9 -4 -2.2 -2.5 -2.1 -1.8 -3 -0.4 -2 0.2 -2 0.6 -2 1.2 -2 1.5 -2 3.1 -3 5.3 -4 6.9 -4 6.9 -3.3 16.1 -6.7 5.9 -3 2.9 -2 2.3 -2 1.5 -2 0.8 -2 0.1 -2 -0.3 -1 -2.3 -3 -4.1 -3 -5.9 -3.1 -5 -1.8 -4 -0.8 -16 -0.8 -3 -0.9 -2.2 -1.6 -1.1 -2 -0.2 -2 0.5 -3 1.2 -3 2.2 -4 2.8 -4 3.2 -4 3.9 -4 4.7 -4.2 7 -5.4 7 -4.9 6 -3.6 7 -3.4 13 -4.5 8 -3.2 15 -7.2 14 -6 13 -6.9 12 -5.7 10 -5.8 10 -5.1 9 -5.8 8 -4.3 8 -5.6 7.5 -4.4 6.5 -4.9 7 -4.4 5 -4.1 6 -3.9 5 -4.4 5 -3.4 5 -4.6 4 -2.9 4 -3.9 4 -3 4 -4.1 4 -3.3 3 -3.3 3 -2.5 3 -3.4 4 -3.7 2 -2.5 3 -2.7 3 -3.8 2 -1.8 2 -2.7 3 -3 2 -2.9 2 -1.8 2 -2.8 2 -1.8 2 -2.8 2 -1.8 1 -1.6 2 -1.8 2 -2.7 1 -0.8 5 -5.9 1 -0.7 2 -2.5 1 -0.7 1 -1.5 2 -1.8 1 -1.4 1 -0.6 1 -1.5 1 -0.5 1 -1.5 1 -0.6 3 -3.2 1 -0.5 1 -1.4 1 -0.2zM161.5 247.4l-3 1 -2 1.3 -1.9 1.8 -2.1 3 -1 3 -0.1 3 0.7 2 1.4 1.5 2 1.2 3 1 4 0.6 4 0 4 -0.5 3.2 -0.8 2.8 -1.2 2.3 -1.8 1.8 -3 0.6 -3 -0.3 -3 -0.6 -1 -0.8 -0.7 -5.3 -2.3 -5.7 -1.7 -4 -0.6z"/>
<path fill="#2797ea" d="M395.3 19.5l0.2 -0.5 0.3 11.5 -0.3 11.5 -1 2 -1 4.3 -1 0.9 -1 3.5 -1 1.2 -1 3.2 -1 1 -1 3.4 -1 0.4 -1 4 -1 -0.3 -1 4.1 -1 0.2 -2 5.1 -1 -0.4 -1 4.2 -1 0.3 -1 1 -1 4 -1 -0.6 -1 1.8 -1 3.8 -1 -0.9 -0.8 1.3 -1.2 4.3 -1 -0.6 -1 0.4 -1 4.4 -1 0.7 -1 -0.9 -2 6.2 -1 -0.8 -1 -0.2 -2 6.2 -1 -0.9 -1 -0.2 -2 6.3 -2 -1.3 -1 1.9 -1 3.9 -1 0.8 -1 -1 -1 0 -2 6.2 -1 0.3 -1 -0.9 -1 0 -2.3 6.2 -0.7 0.7 -2 -1.3 -1 1 -2 5.9 -1 0.4 -2 -1.2 -1 0.9 -2 5.9 -0.7 0.7 -0.3 0.2 -2 -1.2 -1 0.1 -1 1.5 -2 5.6 -1 0.7 -2 -1 -1 -0.2 -0.3 0.3 -0.9 1 -1.8 5 -1 1.8 -1 0.2 -2 -1.1 -1 -0.1 -1 0.9 -3 7.1 -1 0.7 -3 -1.1 -1 0 -1 0.7 -1.1 1.9 -1.9 5 -1 1.3 -1 0.1 -3 -1.1 -1 0 -1 0.7 -1.3 2 -2.7 6.2 -1 0.7 -1 0 -3 -1.1 -1 -0.1 -1 0.5 -1 0.9 -1 1.6 -2 4.9 -1 1.7 -1 0.6 -1 0 -4 -1.1 -2 0.5 -2 2.2 -3 6.7 -1 1.1 -1 0.4 -1 0 -5 -1.3 -2 0.7 -2 2 -3.3 6.9 -0.7 1.2 -1 0.8 -2 0.2 -4 -1.1 -2 -0.2 -2 0.5 -0.9 0.6 -2.5 3 -3.3 7 -1.3 1.4 -2 0.3 -7 -1.4 -2 0.1 -2 0.8 -2 1.7 -1.5 2.1 -3 7 -0.5 0.9 -1.1 1.1 -0.9 0.3 -2 0 -6 -1.3 -3 -0.3 -2.4 0.3 -2.3 1 -2.3 1.9 -1.5 2.1 -1.5 3 -2 6.2 -1 1.2 -1 0.3 -2 -0.1 -8 -1.9 -4 -0.5 -4 0.5 -3 1.3 -3 2.4 -2.7 3.6 -1.5 4 -0.1 3 0.9 2 1.4 1.4 3 1.3 3 0.7 4 0.4 5 -0.1 4 -0.6 3.7 -1.1 3.5 -2 1.9 -2 1.1 -2 1.3 -4 0.6 -1 0.9 -0.6 2 -0.4 7 0 4 -0.3 3 -0.5 3 -1.1 3.2 -2.1 1.5 -2 2.2 -4 1.1 -0.9 2 -0.6 8 -0.9 4 -1.2 3.4 -2.4 2.7 -4 1.9 -1.7 2 -0.7 6 -1.1 3 -1.1 3 -2.4 2.2 -3 1.8 -1.7 7 -2.1 2.5 -1.2 2.3 -2 3.2 -3.8 7.7 -3.2 2.3 -1.8 2.7 -3.2 1.2 -1 6.3 -3 4.8 -5 6 -3.3 4 -4.3 5 -3.1 4.1 -4.3 4.9 -3.4 3.2 -3.6 3.8 -2.8 3.9 -4.2 3.1 -2.5 3 -3.4 3 -2.6 3 -3.5 3 -2.8 28 -31.9 17 -18.1 8 -7.4 1 -0.4 2 -0.1 1 0 1 0.5 0.5 1.2 0.1 2 -1.1 7 -2.3 8 -4.4 12 -4.2 10 -5.2 11 -5.8 11 -5.3 9 -5.8 9 -4.9 7 -12.6 15.9 -16 18.2 -18 18.2 -15 13.8 -17 14.3 -17 13.2 -21 15.2 -12 7.9 -12 6.9 -11 5.3 -11 4.4 -15 4.6 -16 3.4 -17 2.2 -17 0.8 -9 -0.2 -8 -0.5 -7 -0.8 -7 -1.3 -5.8 -1.5 -4.2 -1.6 -4 -2.1 -2.8 -2.3 -1.8 -3 -0.3 -2 0.2 -2 0.8 -2 1.2 -2 1.7 -2 3.2 -3 5.6 -4 6.2 -3.4 21 -9.2 6.5 -3.4 3 -2 2.2 -2 1.6 -2 1 -2 0.3 -2 -0.3 -1 -0.5 -1 -1.8 -2 -4.4 -3 -6.6 -3.4 -4.3 -1.6 -4.7 -1.1 -16 -1.3 -3 -1.1 -1.9 -1.5 -1 -2 -0.1 -2 0.6 -3 1.2 -3 4.5 -7 6.7 -7.5 5 -4.4 6 -4.7 7 -4.9 6 -3.7 7 -3.3 15 -5.3 7 -2.9 14 -6.8 14 -6 13 -6.9 11.9 -5.6 11.1 -6.5 9 -4.5 9 -5.8 8 -4.3 8 -5.5 7.4 -4.4 6.6 -4.9 7 -4.4 5 -4.1 6 -4 5 -4.3 5 -3.5 5 -4.6 4 -2.8 4 -4 4 -3 4 -4.1 4 -3.2 3 -3.4 3 -2.4 3 -3.5 4 -3.7 2 -2.5 3 -2.7 3 -3.7 2 -1.8 2 -2.8 3 -3 2 -2.8 2 -1.9 2 -2.8 2 -1.8 2 -2.8 2 -1.8 1 -1.5 2 -1.9 2 -2.7 1 -0.7 5 -5.9 1 -0.7 2 -2.6 1 -0.6 1 -1.5 2 -1.8 1 -1.4 1 -0.5 1 -1.6 1 -0.5 1 -1.4 1 -0.6 3 -3.2 1 -0.4 1 -1.3 1 -0.2z"/>
<path fill="#259ce7" d="M395.2 21.5l0.3 -0.7 0.2 9.7 -0.2 9.9 -1 2.7 -1 4.5 -1 1 -1 3.5 -1 1.2 -1 3.2 -1 1.1 -1 3.4 -1 0.4 -1 4 -1 -0.2 -1 3.9 -1 0.4 -2 5 -1 -0.3 -1 4.1 -1 0.4 -1 1 -1 4 -1 -0.6 -1 1.8 -1 3.7 -1 -0.7 -1 1.5 -1 3.9 -1 -0.4 -1 0.4 -1 4.1 -1 0.9 -1 -0.9 -2 6.1 -2 -0.8 -2 6.1 -1 -0.9 -1 -0.1 -2 6.1 -2 -1.1 -1 1.8 -1 3.7 -1 1 -1 -1 -1 0.1 -2 5.9 -1 0.5 -1 -0.9 -1 0.1 -2 5.6 -0.8 0.9 -0.2 0.2 -2 -1.1 -1 0.9 -2 5.8 -1 0.5 -2 -1.1 -1 0.9 -2 5.5 -1 1.1 -2 -1 -1 0.1 -1 1.4 -2 5.4 -1 0.8 -2 -0.9 -1 -0.1 -0.7 0.6 -0.7 1 -1.6 4.4 -1 1.8 -1 0.3 -2 -0.9 -1 -0.1 -1 0.8 -3 6.8 -1 0.8 -1 -0.1 -2 -0.8 -1 0 -1 0.8 -1.3 2.2 -1.7 4.3 -1 1.3 -1 0.3 -3 -1 -1 0.1 -1 0.6 -1.5 2.4 -2.5 5.4 -1 0.8 -1 0.1 -3 -0.9 -2 0.4 -1.9 2.2 -2.1 4.7 -1 1.7 -0.7 0.6 -1.3 0.4 -4 -1 -2.2 0.6 -1.8 2 -3 6.2 -1 1.3 -1 0.5 -1 0 -5 -0.9 -1 0.1 -1.4 0.8 -1.9 2 -3 6 -1.7 2.1 -2 0.4 -6 -1 -2 0.5 -1 0.6 -1.4 1.4 -1.4 2 -3.2 6.2 -1 1.1 -1 0.5 -2 0.1 -6 -1.1 -2 0.2 -2 0.8 -1.6 1.2 -1.7 2 -3.7 7.2 -1 1.3 -1 0.6 -3 0.3 -8 -1.2 -3 0.6 -2 0.9 -1.6 1.3 -1.8 2 -1.8 3 -2.2 5 -0.6 1 -1.3 1 -2.7 0.4 -8 -1.3 -4 -0.3 -3 0.5 -3 1.2 -3.3 2.5 -3.1 4 -1.8 4 -0.5 2 -0.1 2 0.8 2 1.1 1 2.9 1.2 4 0.8 5 0.4 5 -0.2 4 -0.6 4 -1.2 2.8 -1.4 2.5 -2 1.4 -2 2.2 -4 1.1 -1.1 3 -0.9 11 -1.1 5 -1.6 3.1 -2.3 3.7 -5 1.2 -1 2 -0.7 8 -1.3 4 -1.5 2.3 -1.5 3.7 -4.5 1.9 -1.5 7.1 -1.9 3 -1.1 3 -2 3 -3.5 1.7 -1.5 6.3 -2.2 3 -1.4 1.8 -1.4 4.2 -4.4 7 -3.1 2.1 -1.5 3.9 -4.1 7 -3.7 4.1 -4.2 6.5 -4 3.9 -4 4.6 -3 4.9 -4.8 4 -2.8 4 -4.2 3 -2.2 4 -4.2 3.3 -2.8 11.8 -12 27.9 -31.8 17 -18 6 -5.6 2 -1.5 2 -0.3 2 0.8 0.6 1.4 0.1 2 -0.7 5.2 -2.2 7.8 -4.4 12 -4.1 10 -4.8 10 -5.2 10 -5.8 10 -9.9 15 -11.8 15 -16.8 19.2 -18 18.3 -16 14.6 -17 14.2 -17 13.1 -20 14.3 -12 8 -12 7 -11 5.5 -11 4.5 -15 4.7 -15 3.4 -17 2.3 -17 0.9 -16 -0.5 -7 -0.8 -7 -1.1 -6 -1.5 -5 -1.9 -3.9 -2.2 -2.1 -1.8 -1 -1.2 -0.9 -2 -0.3 -2 0.4 -2 0.8 -2 1.3 -2 4 -4 5.5 -4 5.3 -3 6.3 -3 14.6 -6.3 7 -3.7 5.3 -4 2.4 -3 1 -2 0.1 -2 -0.3 -1 -2 -2 -5 -3 -8.4 -4 -5.1 -1.8 -4 -1 -15 -1.6 -3 -1.1 -1.6 -1.5 -0.9 -2 -0.1 -2 0.4 -2 1.2 -3 1.6 -3 2.8 -4 6.3 -7 5.3 -4.6 6 -4.7 6 -4.2 6 -3.7 7 -3.4 15.2 -5.4 6.8 -2.8 14 -6.8 14 -6 13 -6.9 11.7 -5.5 11.3 -6.6 9 -4.5 9 -5.8 8 -4.3 8 -5.6 7.3 -4.2 6.7 -5 7 -4.4 5 -4.1 6 -4 6 -5.1 4 -2.7 5 -4.6 4 -2.8 4 -4 5 -3.9 3 -3.2 4 -3.2 3 -3.4 3 -2.4 3 -3.5 4 -3.7 2 -2.5 3 -2.7 2 -2.6 3 -2.9 2 -2.8 3 -3 2 -2.8 2 -1.9 2 -2.8 2 -1.8 2 -2.8 2 -1.8 1 -1.5 2 -1.9 2 -2.7 1 -0.7 5 -5.9 1 -0.7 2 -2.5 1 -0.6 1 -1.6 2 -1.7 1 -1.4 1 -0.5 1 -1.6 1 -0.4 1 -1.5 1 -0.5 3 -3.1 1 -0.4 1 -1.3 1 -0.1z"/>
<path fill="#23a1e4" d="M395 23.5l0.5 -0.4 0 15.4 -2 8.4 -1 1 -1 3.6 -1 1.2 -1 3.3 -1 1 -1 3.5 -1 0.4 -1 4 -1 -0.2 -1 3.9 -1 0.5 -2 5 -1 -0.2 -1 4 -1 0.4 -1 1 -1 3.9 -1 -0.4 -1 1.7 -1 3.7 -1 -0.7 -1 1.5 -1 3.8 -1 -0.3 -1 0.5 -1 4 -1 0.9 -1 -0.8 -2 5.9 -2 -0.6 -2 5.9 -1 -0.7 -1 -0.1 -2 5.9 -2 -1 -1 1.8 -1 3.6 -0.6 0.7 -0.4 0.3 -1 -0.8 -1 0.1 -2 5.7 -1 0.6 -1 -0.8 -1 0 -1 2.2 -1 3.2 -1 1.3 -2 -1 -1 0.9 -2 5.5 -1 0.6 -2 -0.9 -1 0.8 -2 5.4 -1 1.1 -2 -0.8 -1 0.1 -1 1.3 -2 5.2 -1 0.9 -3 -0.8 -1 0.9 -3 6.6 -1 0.4 -2 -0.8 -1 0 -1 0.7 -3 6.5 -1 1 -1 0 -2 -0.7 -1 0 -1 0.7 -1 1.6 -2 4.6 -1 1.4 -1 0.4 -3 -0.8 -1 0.1 -1 0.6 -1.3 1.7 -2.7 5.7 -1 0.9 -1 0.2 -3 -0.8 -2 0.4 -1.5 1.6 -3.1 6 -1.4 1.6 -2 0.1 -3 -0.7 -2 0.5 -2.3 2.5 -2.7 5.3 -1 1.4 -1 0.6 -2 0.1 -4 -0.7 -2 0.6 -1 0.7 -1.6 2 -3.4 6.2 -1 1 -2 0.7 -6 -0.8 -2 0.5 -1 0.6 -2.6 2.8 -3.4 6.1 -2 1.8 -2 0.3 -7 -0.7 -3 0.9 -3 2.6 -4 6.8 -2 2.2 -1 0.5 -2 0.2 -6 -0.8 -3 0 -2 0.4 -2 1 -3.1 2.7 -2.1 3 -2.8 5.1 -2 1.8 -3 0.6 -8 -1 -3 -0.1 -4 0.7 -3 1.5 -3 2.4 -2.5 3 -2.3 4 -3.2 7 -1 1.1 -2 -0.4 -4 -1.4 -12.2 -5.3 -5.3 -2 -6.5 -1.6 -13 -1.7 -3 -1.3 -1.4 -1.4 -0.5 -1 -0.3 -2 0.9 -4 2 -4 3.6 -5 4.6 -5 5.1 -4.6 7 -5.5 7 -4.8 5 -3 5 -2.4 20.8 -7.7 16.2 -7.7 12.4 -5.3 14.6 -7.6 12 -5.7 10 -5.9 10 -5.1 9 -5.7 9 -5 7 -4.9 8 -4.7 6 -4.6 7 -4.4 6 -4.8 5 -3.3 5 -4.3 5 -3.4 5 -4.6 4 -2.9 4 -3.9 4 -3 4 -4.2 4 -3.2 3 -3.4 3 -2.4 3 -3.4 3 -2.6 3 -3.6 3 -2.8 3 -3.7 2 -1.8 2 -2.7 3 -3.1 2 -2.8 2 -1.8 2 -2.8 2 -1.8 2 -2.8 2 -1.8 1 -1.5 2 -1.9 2 -2.7 1 -0.7 5 -5.9 1 -0.6 2 -2.6 1 -0.6 1 -1.5 2 -1.8 1 -1.3 1 -0.5 1 -1.6 1 -0.4 1 -1.5 1 -0.5 1 -1.3 1 -0.5 1 -1.2 1 -0.3 1 -1.3zM393.6 97.5l1.9 -0.7 1 0.2 1 0.6 0.8 1.9 0 3 -1.8 8 -5.7 16 -6.6 15 -7.3 14 -7.8 13 -8.9 13 -9.7 12.1 -13 15 -11 11.7 -12 11.7 -12 11 -14 11.9 -14 11.1 -15 11.1 -25 17.1 -10 6 -9 4.8 -10 4.6 -10 3.8 -11 3.3 -10 2.4 -13 2.3 -14 1.4 -13 0.5 -13 -0.5 -12 -1.5 -9 -2.2 -6 -2.6 -2.7 -2 -1.7 -2 -1.1 -3 0.4 -3 1.7 -3 3.7 -4 5.5 -4 5.3 -3 19.9 -9 7.6 -4 2.9 -2 3.4 -3 2.6 -3 2.5 -4.1 1 -0.9 9 1.5 8 0.4 8 -0.7 6 -1.7 4.2 -2.5 1.9 -2 2.7 -4 1.2 -1 3 -1.2 11 -1.6 5 -1.9 3.1 -2.3 2.9 -3.6 2 -1.7 2 -0.7 8 -1.8 4 -1.6 2.3 -1.6 4.8 -5 2.1 -1 6.8 -2 2.2 -1 2.7 -2 4.1 -4.1 9 -3.8 2 -1.5 3 -3.1 1.9 -1.5 7.1 -3.4 6 -5.4 5.9 -3.2 5.1 -4.8 6 -3.8 4 -3.9 5.1 -3.5 3.9 -3.9 4.2 -3.1 3.8 -3.9 4 -3.2 3 -3.2 4 -3.5 11.8 -12.2 20.2 -23.1 17 -18.6 8 -8z"/>
<path fill="#1fa6e2" d="M393.1 25.5l0.4 -0.5 1.7 0.5 0.3 0.5 0 1.5 -0.1 9 -1.9 9.6 -1 1.1 -1 3.6 -1 1.3 -1 3.3 -1 1.1 -1 3.4 -1 0.5 -1 3.9 -1 0 -1 3.8 -1 0.6 -2 4.9 -1 -0.1 -1 3.9 -2 1.5 -1 3.9 -1 -0.3 -1 1.6 -1 3.6 -1 -0.5 -1 1.4 -1 3.8 -1 -0.2 -1 0.4 -1 3.9 -1 1 -1 -0.7 -2 5.8 -2 -0.5 -2 5.8 -1 -0.6 -1 -0.1 -2 5.8 -2 -0.8 -1 1.7 -1 3.4 -1 1.1 -1 -0.7 -1 0.1 -2 5.5 -1 0.7 -1 -0.7 -1 0 -2 5.2 -1 1.3 -2 -0.9 -1 1 -2 5.3 -1 0.7 -2 -0.8 -1 0.8 -2 5.1 -1 1.3 -2 -0.8 -1 0.2 -1 1.3 -2 5 -0.5 0.5 -0.5 0.5 -3 -0.7 -1 0.8 -3 6.4 -1 0.5 -2 -0.6 -1 0 -1 0.7 -3 6.2 -1 1.1 -1 0 -2 -0.6 -1 0.1 -1 0.7 -4 7.3 -1 0.5 -3 -0.7 -1 0.1 -1 0.6 -1.5 2.1 -2.5 5 -1 1 -1 0.3 -3 -0.6 -2 0.4 -1.8 1.9 -3.2 6 -1 0.9 -2 0.3 -3 -0.5 -2 0.5 -2 1.9 -3 5.5 -1 1.3 -1 0.7 -2 0.3 -4 -0.6 -2.1 0.7 -2.1 2 -3.8 6.3 -1.9 1.7 -2.1 0.3 -5 -0.5 -3 1 -2.2 2.2 -3.8 6.1 -2 2 -2 0.5 -7 -0.5 -3 0.9 -3 2.5 -5 7.5 -2 1.6 -3 0.4 -5 -0.5 -3 0 -2 0.4 -2 0.9 -2 1.5 -1.6 1.7 -5.4 7.9 -2 1.3 -3 0.5 -7 -0.7 -4 0 -3 0.7 -2.9 1.3 -2.7 2 -2 2 -6.4 8.9 -2 1.6 -3 0.5 -3 -0.5 -18 -6.6 -5 -1.1 -12 -1.9 -2.1 -0.9 -1.9 -1.8 -0.5 -1.2 -0.2 -2 0.6 -3 1.9 -4 3.6 -5 4.6 -4.9 5 -4.5 7 -5.5 7 -4.8 9 -4.8 20.4 -7.5 17.6 -8.4 11 -4.6 15 -7.8 12 -5.7 10 -5.9 10 -5 9 -5.8 9 -5 7 -4.9 8 -4.7 6 -4.6 7 -4.4 6 -4.8 5 -3.2 5 -4.4 5 -3.4 5 -4.6 4 -2.8 4 -4 4 -3 4 -4.1 4 -3.3 3 -3.3 3 -2.4 3 -3.5 3 -2.6 3 -3.6 3 -2.7 3 -3.8 2 -1.7 2 -2.8 3 -3 2 -2.9 2 -1.8 2 -2.8 2 -1.8 2 -2.8 2 -1.8 1 -1.5 2 -1.8 2 -2.8 1 -0.6 5 -6 1 -0.6 2 -2.5 1 -0.6 1 -1.5 2 -1.8 1 -1.3 1 -0.5 1 -1.6 1 -0.3 1 -1.5 1 -0.4 1 -1.3 1 -0.5 1 -1.2 1 -0.2zM394.5 98.5l1 0 1 0.5 0.8 1.5 0.2 2 -0.3 3 -2.7 10 -5.6 15 -7 15 -7.1 13 -8 13 -7.9 11 -9.4 11.7 -12 13.7 -11 11.6 -12 11.7 -12 10.9 -13 11 -14 11.1 -15 11 -26 17.7 -10 6 -9 4.8 -9 4.2 -10 3.9 -10 3.2 -10 2.6 -12 2.2 -13 1.6 -13 0.7 -13 -0.2 -11 -1.1 -10 -2.1 -3.5 -1.2 -3.5 -1.6 -2.2 -1.4 -2.1 -2 -1.5 -3 0 -2 0.5 -2 1.8 -3 4.1 -4 4.2 -3 5.2 -3 19.6 -9 5.8 -3 5.9 -4 5.7 -5.1 2 -1.4 2 -0.7 2 -0.3 11 0 6 -0.4 6 -1.1 4 -1.4 4.2 -2.6 4.3 -5 1.5 -1.3 3 -1.2 10 -1.8 5 -1.8 3 -1.9 4 -4.3 2 -1.4 2 -0.8 8 -2 3.4 -1.5 2.8 -2 2.8 -2.9 2 -1.6 2 -1 6 -1.9 3 -1.4 1.7 -1.2 5.3 -4.8 8 -3.5 2.5 -1.7 4.5 -4.2 7.5 -3.8 5.5 -4.9 6 -3.5 6 -5.3 5.2 -3.3 4.2 -4 5.6 -4 3 -3 5 -4 3 -3 4.7 -4 6.3 -6.1 12 -12.3 24 -27.3 14 -15.1 9 -8.7 3 -2.5z"/>
<path fill="#1caadf" d="M393.3 26.5l0.2 -0.3 1 0.5 0.4 0.8 0.5 4 -0.4 6 -1.5 7.8 -1 1.1 -1 3.8 -1 1.3 -1 3.3 -1 1.1 -1 3.5 -1 0.5 -1 3.9 -1 0 -1 3.9 -1 0.6 -2 4.9 -1 -0.1 -1 3.9 -2 1.6 -1 3.7 -1 -0.2 -0.3 0.4 -0.7 1.3 -1 3.5 -1 -0.4 -1 1.4 -1 3.7 -1 -0.2 -1 0.5 -1 3.8 -1 1.1 -1 -0.7 -2 5.7 -2 -0.4 -2 5.6 -1 -0.5 -1 0 -2 5.6 -2 -0.6 -1 1.6 -1 3.4 -1 1.1 -1 -0.6 -1 0.1 -2 5.3 -1 0.8 -1 -0.6 -1 0 -2 5.1 -1 1.3 -2 -0.8 -1 0.9 -2 5.2 -1 0.8 -2 -0.7 -1 0.8 -2 4.9 -1 1.3 -2 -0.6 -1 0.1 -1 1.3 -2 4.8 -1 1.1 -3 -0.6 -1 0.9 -3 6.2 -1 0.6 -3 -0.6 -1 0.8 -3 6 -1 1.1 -1 0.1 -2 -0.5 -1 0 -1 0.7 -4 7.1 -1 0.6 -4 -0.4 -1 0.6 -1.2 1.4 -2.8 5.4 -1 1.1 -1 0.3 -4 -0.4 -1 0.3 -2 2.2 -3 5.4 -1 1 -2 0.4 -3 -0.4 -2 0.5 -2 1.9 -3 5.2 -1 1.3 -1 0.8 -2 0.4 -4 -0.4 -1 0.1 -1.6 0.9 -2 2 -3.4 5.6 -2 1.8 -2 0.4 -5 -0.4 -3 1 -2 1.9 -4 6 -2 2 -1 0.5 -2 0.2 -6 -0.3 -3 0.9 -3 2.4 -5 7 -1 1 -1.7 1 -2.3 0.4 -8 -0.3 -2 0.4 -2 0.9 -3.2 2.6 -5.8 7.7 -2 1.5 -3 0.7 -8 -0.4 -3 0.1 -3 0.6 -2 0.9 -4.3 2.9 -2.8 3 -4.9 6 -3 2 -3 0.5 -4 -0.6 -16 -5.6 -15 -2.9 -3 -1.3 -1.2 -1.1 -0.7 -1 -0.4 -2 0.4 -3 1.8 -4 2.8 -4 4.3 -4.8 5 -4.6 7 -5.6 7 -4.8 9 -4.9 20 -7.3 18 -8.6 12 -5.1 14 -7.3 12 -5.7 10 -5.9 10 -5 9 -5.8 9 -5 7 -4.9 8 -4.7 6 -4.6 7 -4.3 6 -4.9 5 -3.2 5 -4.4 5 -3.4 5 -4.6 4 -2.8 4 -4 4 -3 4 -4.1 4 -3.3 3 -3.3 3 -2.4 3 -3.5 3 -2.6 3 -3.6 3 -2.7 3 -3.8 2 -1.7 2 -2.8 3 -3 2 -2.9 2 -1.8 2 -2.8 2 -1.8 2 -2.8 2 -1.8 1 -1.5 2 -1.8 2 -2.7 1 -0.7 5 -5.9 1 -0.6 2 -2.6 1 -0.5 1 -1.5 2 -1.8 1 -1.3 1 -0.4 1 -1.6 1 -0.3 1 -1.5 1 -0.4 1 -1.3 1 -0.4 1 -1.2 1 0zM393.1 100.5l1.4 -0.4 1 0.3 0.8 1.1 0.4 2 -0.3 3 -2.6 10 -4.8 13 -6 13 -7.9 15 -8.1 13 -7.8 11 -8.7 10.8 -13 14.9 -11 11.6 -12 11.6 -12 10.9 -13 10.9 -14 11 -15 11 -26 17.5 -9 5.4 -9 4.9 -10 4.7 -9 3.6 -10 3.3 -10 2.6 -13 2.5 -12 1.5 -13 0.8 -13 -0.3 -11 -1.1 -9 -2 -4 -1.4 -3 -1.4 -2 -1.3 -2 -2 -1.1 -2 -0.2 -2 0.3 -2 1 -2 1.4 -2 3.1 -3 7.5 -5 25.1 -12 5 -3 7.9 -5.9 3 -1.6 4 -0.9 15 -1 8 -1.7 3 -1.2 3 -1.7 5.9 -6 2.1 -1.3 3 -0.9 9 -1.9 5 -1.9 3 -2 4 -4 1.5 -1 2.5 -1.1 8 -2.2 3 -1.4 2 -1.3 5.7 -5 10.3 -4.2 2.7 -1.8 4.4 -4 8.9 -4.2 7 -5.8 7.4 -4 4.6 -4.1 6.5 -3.9 5.5 -4.8 6 -4.1 4 -3.7 5 -3.7 16 -14.2 6.7 -6.5 11.3 -11.6 20.5 -23.4 16.5 -17.9 8 -7.8z"/>
<path fill="#17aeda" d="M392.8 28.5l0.7 -1 1 0.9 0.4 2.1 0.1 4 -1.5 9.9 -1 1.2 -1 3.9 -1 1.3 -1 3.4 -1 1.2 -1 3.5 -1 0.5 -1 3.9 -1 0.1 -1 3.8 -1 0.6 -2 5 -1 -0.1 -1 3.8 -2 1.7 -1 3.7 -1 -0.2 -0.5 0.8 -0.5 0.9 -1 3.5 -1 -0.4 -1 1.4 -1 3.6 -1 0 -1 0.5 -1 3.7 -1 1.1 -1 -0.6 -2 5.6 -2 -0.3 -2 5.5 -2 -0.4 -2 5.5 -1 -0.1 -1 -0.4 -1 1.6 -1 3.2 -1 1.3 -1 -0.6 -1 0.1 -2 5.2 -1 0.8 -1 -0.6 -1 0.1 -2 4.9 -1 1.4 -2 -0.7 -1 0.9 -2 5 -1 0.9 -2 -0.7 -1 0.9 -2 4.8 -1 1.3 -2 -0.5 -1 0.1 -1 1.3 -2 4.7 -1 1 -3 -0.4 -1 0.9 -3 6 -1 0.7 -3 -0.5 -1 0.7 -3 5.8 -1 1.2 -1 0.2 -2 -0.5 -1 0.1 -1 0.7 -4 6.9 -1 0.6 -3 -0.4 -1 0.1 -1 0.6 -1.4 1.8 -2.6 4.8 -1 1.1 -1 0.4 -3 -0.3 -2 0.4 -2 2.1 -3 5.2 -1 1 -1 0.5 -4 -0.3 -2 0.5 -2 1.9 -3 4.9 -2 2.2 -2 0.5 -4 -0.3 -2 0.6 -1 0.7 -1.9 2.1 -3.1 4.8 -2 1.9 -2 0.5 -5 -0.2 -3 1 -2.2 2 -3.8 5.5 -2 2.1 -2 0.8 -7 -0.1 -3 0.9 -2 1.4 -1.5 1.4 -5.3 7 -2.2 1.4 -2 0.4 -8 -0.1 -4 1.3 -3.8 3 -5.2 6.7 -1 0.9 -2 1.2 -3 0.5 -10 -0.1 -3 0.6 -2 0.8 -2.4 1.4 -2.6 2 -7 7.6 -3 2 -2 0.6 -2 0.1 -4 -0.6 -15 -5 -14 -3.1 -2 -0.9 -2.1 -1.7 -0.5 -1 -0.3 -2 0.6 -3 2 -4 2.9 -4 3.7 -4 5.6 -5 7.1 -5.5 6 -4.1 9 -4.7 19 -7 17 -8.1 13 -5.5 14 -7.4 12 -5.6 10 -5.9 10 -5.1 9 -5.8 9 -4.9 7 -4.9 8 -4.7 6 -4.6 7 -4.4 6 -4.8 5 -3.2 5 -4.4 5 -3.4 5 -4.6 4 -2.9 4 -3.9 4 -3 4 -4.2 4 -3.2 3 -3.4 3 -2.4 3 -3.4 3 -2.6 3 -3.7 3 -2.6 3 -3.8 2 -1.7 2 -2.8 3 -3 2 -2.9 2 -1.8 2 -2.8 2 -1.8 2 -2.8 2 -1.8 1 -1.5 2 -1.8 2 -2.7 1 -0.7 5 -5.9 1 -0.6 2 -2.5 1 -0.5 1 -1.6 2 -1.7 1 -1.3 1 -0.4 1 -1.6 1 -0.3 1 -1.5 1 -0.3 1 -1.3 1 -0.3 1 -1.2 1 0.1zM391.8 102.5l1.7 -0.7 1 0.1 0.7 0.6 0.6 2 -0.1 3 -2.3 9 -4.8 13 -6.4 14 -7.5 14 -7.4 12 -8.5 12 -9.3 11.4 -12 13.6 -11 11.5 -11 10.7 -13 11.7 -13 10.9 -14 10.9 -14 10.2 -28 18.7 -8 4.8 -9 4.9 -9 4.3 -10 4.1 -10 3.3 -10 2.7 -13 2.5 -12 1.5 -13 0.7 -12 -0.3 -11 -1.2 -8.5 -1.9 -3.5 -1.3 -3 -1.5 -2 -1.4 -1.7 -1.8 -0.9 -2 -0.2 -2 0.5 -2 1.1 -2 3.7 -4 7.4 -5 24.1 -11.7 5.6 -3.3 6.4 -4.4 4 -2.1 5 -1.2 15 -1.6 7 -1.6 3 -1.3 3 -1.8 5.2 -5 2.8 -1.8 3 -1 9 -2.1 4 -1.5 2.7 -1.6 6.3 -5.4 2 -0.9 7 -2.2 3.8 -1.5 3.1 -2 4.1 -3.6 2 -1.3 9.8 -4.1 7.2 -5.7 8.7 -4.3 6.3 -5.2 8 -4.5 5 -4.3 6 -3.7 5 -4.3 6 -4.2 4.2 -3.8 5.3 -4 15.5 -13.8 7 -6.7 11.1 -11.5 20.9 -23.8 14 -15.2 8 -8z"/>
<path fill="#0fb2d5" d="M393 29.5l0.5 -0.6 0.5 0.6 0.5 1.5 0.1 1.5 -0.1 4 -1 6.9 -1 1.2 -1 4.1 -1 1.4 -1 3.5 -1 1.2 -1 3.5 -1 0.6 -1 3.9 -1 0.1 -1 3.8 -1 0.7 -2 4.9 -1 0 -1 3.8 -2 1.7 -1 3.7 -1 -0.1 -0.7 1.1 -1.3 4 -1 -0.3 -1 1.4 -1 3.5 -1 0.1 -1 0.4 -1.2 3.9 -0.8 0.9 -1 -0.5 -2 5.4 -2 -0.1 -2 5.4 -2 -0.3 -2 5.4 -1 0 -1 -0.4 -1 1.6 -1 3.1 -1 1.3 -1 -0.5 -1 0.1 -2 5.1 -1 0.8 -1 -0.5 -1 0.1 -2 4.8 -1 1.4 -2 -0.6 -1 0.9 -2 4.9 -1 0.9 -2 -0.6 -1 0.8 -2 4.7 -1 1.3 -2 -0.3 -1 0.1 -1 1.2 -2 4.6 -1 1.1 -3 -0.3 -1 0.8 -3 5.9 -1 0.7 -3 -0.3 -1 0.7 -3 5.6 -1 1.2 -1 0.3 -3 -0.3 -1 0.7 -4 6.7 -1 0.7 -3 -0.3 -1 0.1 -1 0.6 -1 1.1 -3 5.3 -1 1.1 -1 0.4 -3 -0.2 -2 0.5 -2 2 -3 5 -1 1.1 -1 0.5 -4 -0.1 -2 0.5 -2 1.8 -3 4.7 -2 2.2 -2 0.6 -3 -0.2 -2 0.2 -2 1.1 -2 2.2 -3 4.5 -2 1.9 -2 0.6 -5 -0.1 -3 1.1 -2.6 2.3 -4.4 6 -2 1.5 -2 0.4 -6 0 -3 0.9 -3 2.2 -5 6.3 -1 1.1 -2 1.3 -3 0.6 -7 0 -4 1.3 -3.3 2.4 -5.7 6.7 -3 2.2 -3 0.8 -10 0.1 -5 1.4 -4.5 2.8 -8.5 8.2 -3 1.6 -4 0.5 -5 -0.9 -13 -4.3 -12.6 -3.1 -2.4 -1.1 -1.9 -1.9 -0.6 -2 0.4 -3 1.9 -4 2.9 -4 3.7 -4 5.6 -5 6 -4.7 6 -4.1 9 -4.8 20 -7.4 16 -7.6 12.7 -5.4 14.3 -7.5 12 -5.7 10 -5.9 10 -5 9 -5.8 9 -4.9 7 -5 8 -4.7 6 -4.6 7 -4.3 6 -4.9 5 -3.2 5 -4.4 5 -3.4 5 -4.6 4 -2.8 4 -4 5 -3.9 3 -3.2 4 -3.2 3 -3.4 3 -2.4 3 -3.5 3 -2.6 3 -3.6 3 -2.7 3 -3.7 2 -1.8 2 -2.8 3 -3 2 -2.8 2 -1.8 2 -2.9 2 -1.7 2 -2.9 2 -1.7 1 -1.5 2 -1.8 2 -2.8 1 -0.6 2 -2.7 1 -0.6 2 -2.6 1 -0.5 2 -2.6 1 -0.5 1 -1.6 2 -1.6 1 -1.3 1 -0.4 1 -1.6 1 -0.2 1 -1.5 1 -0.3 1 -1.2 1 -0.2 1 -1.2 1 0.3zM392.5 103.5l1 -0.1 1.1 1.1 0.4 2 -0.5 4 -3 10.6 -4.9 12.4 -5.7 12 -7.1 13 -7.5 12 -8 11 -8.8 10.8 -12 13.6 -11 11.4 -11 10.7 -12 10.8 -13 10.8 -13 10.2 -15 10.9 -29 19.2 -8 4.8 -9 5 -9 4.3 -10 4.1 -9 3.1 -10 2.7 -12 2.5 -13 1.6 -12 0.8 -12 -0.2 -11 -1.1 -8.7 -2 -3.3 -1.2 -3 -1.6 -1.7 -1.2 -1.8 -2 -0.8 -2 0 -2 0.7 -2 1.2 -2 4.1 -4 7.8 -5 20.7 -10 12.8 -7.8 3 -1.5 5 -1.5 15 -2 8 -2 5 -2.5 6 -5.3 2.2 -1.4 2.8 -1.1 10 -2.6 3.3 -1.3 3.4 -2 4.3 -3.8 2 -1.3 12 -4.4 3 -1.8 6 -4.8 10.8 -4.9 6.3 -5 8.9 -4.6 6.9 -5.4 7 -4 5.1 -4.2 6 -3.8 5.9 -5 5.7 -4 4.4 -3.9 5 -3.8 15 -13.4 7.2 -6.9 11.6 -12 20.2 -23 15 -16.2 9 -8.6 3 -2.2z"/>
<path fill="#06b5cf" d="M393.4 30.5l0.5 1 0.3 3 -0.7 7.7 -1 1.3 -1 4.4 -1 1.4 -1 3.6 -1 1.2 -1 3.6 -1 0.6 -1 4 -1 0.1 -1 3.8 -1 0.7 -2 5 -1 0 -1 3.7 -2 1.8 -1 3.7 -1 -0.1 -0.9 1.5 -1.1 3.6 -1 -0.3 -1 1.4 -1 3.5 -2 0.6 -1 3.6 -0.5 0.6 -0.5 0.6 -1 -0.5 -2 5.4 -2 -0.1 -2 5.4 -2 -0.3 -2 5.3 -1 0.1 -1 -0.4 -1 1.5 -1 3.1 -1 1.3 -1 -0.5 -1 0.2 -2 4.9 -1 1 -1 -0.5 -1 0.1 -2 4.6 -1 1.5 -2 -0.5 -1 0.9 -2.1 4.9 -0.9 0.8 -2 -0.5 -1 0.8 -2 4.6 -1 1.3 -3 -0.1 -1 1.2 -2 4.4 -1 1.2 -3 -0.2 -1 0.8 -3 5.8 -1 0.7 -3 -0.2 -1 0.7 -3 5.5 -1 1.1 -1 0.4 -3 -0.2 -1 0.6 -4 6.6 -1 0.7 -3 -0.1 -1 0.1 -1 0.6 -1.3 1.4 -2.7 4.8 -1 1.1 -1 0.5 -3 -0.1 -2 0.4 -2 2 -3 4.9 -2 1.6 -4 0 -2.4 0.8 -1.6 1.5 -3 4.5 -2 2.3 -2 0.7 -5 0.1 -2 1 -2 2.1 -3 4.4 -2 1.9 -2 0.7 -5 0.1 -3 1 -3 2.7 -4 5.3 -2 1.6 -2 0.5 -6 0.1 -3 0.9 -3 2.2 -5 6 -3 2.4 -3 0.7 -7 0.2 -4 1.2 -3 2.1 -6 6.7 -3 2.3 -2 0.7 -2 0.2 -9 0.2 -3 0.7 -2.6 1 -4.5 3 -7.9 7.1 -3 1.7 -4 0.6 -6 -1 -12 -3.9 -11 -3 -3 -1.5 -1.1 -1 -1 -2 0.2 -3 1.2 -3 2.7 -4 3.5 -4 5.4 -5 6.1 -4.8 6 -4.2 9 -4.8 19.4 -7.2 16.6 -7.9 13 -5.5 14 -7.4 12 -5.6 10 -6 10 -5 9 -5.8 9 -4.9 7 -5 8 -4.6 6 -4.6 7 -4.4 6 -4.9 5 -3.2 5 -4.3 5 -3.4 5 -4.7 4 -2.8 4 -3.9 5 -4 3 -3.2 4 -3.2 3 -3.4 3 -2.4 3 -3.5 3 -2.5 3 -3.7 3 -2.6 3 -3.8 2 -1.7 2 -2.8 3 -3 2 -2.9 2 -1.8 2 -2.9 2 -1.7 2 -2.8 2 -1.7 1 -1.6 2 -1.8 2 -2.7 1 -0.6 2 -2.7 1 -0.6 2 -2.6 1 -0.5 2 -2.6 1 -0.4 1 -1.6 2 -1.6 1 -1.4 1 -0.3 1 -1.6 1 -0.1 1 -1.5 1 -0.2 1 -1.3 1 0 1 -1.2 1 0.6zM391 105.5l1.5 -0.4 1 0.5 0.6 1.9 -0.3 4 -2.5 9 -4.6 12 -5.6 12 -7.1 13 -7.4 12 -8.1 11.2 -9 11 -11 12.4 -11 11.6 -11 10.6 -12 10.8 -12 10.1 -14 10.9 -12 8.8 -12 8.3 -18 11.7 -17 10.1 -10 5 -9 3.9 -9 3.3 -10 3 -12 2.6 -12 1.8 -12 1 -12 0.1 -11 -0.9 -9 -1.7 -6.7 -2.6 -2.3 -1.5 -1.6 -1.5 -1.1 -2 -0.2 -2 0.5 -2 1.1 -2 3.9 -4 7.7 -5 19.7 -9.6 12 -7.1 4 -2 5 -1.5 15 -2.3 7 -1.8 5.6 -2.7 6 -5 2.4 -1.6 3.7 -1.4 8.3 -2.2 4.4 -1.8 3.3 -2 4.3 -3.6 2 -1.3 12 -4.6 2.5 -1.5 6.5 -4.9 10 -4.6 7 -5.3 8.1 -4.2 6.9 -5.3 7.8 -4.7 4.9 -4 6.3 -4.1 5 -4.2 6 -4.3 4 -3.6 5 -3.8 15.6 -14 7.3 -7 11.1 -11.5 20 -22.8 14 -15.1 8 -7.7 3 -2.4z"/>
<path fill="#01b8c8" d="M391.4 32.5l1.1 1 1 -1.3 0.1 0.3 0.3 3 -0.4 5.3 -1 1.3 -1 4.9 -1 1.5 -1 3.7 -1 1.3 -1 3.7 -1 0.6 -1 4 -1 0.1 -1 3.8 -1 0.8 -2 5 -1 0 -1 3.7 -2 1.8 -1 3.6 -1 0.1 -1 1.6 -1 3.4 -1 -0.2 -1 1.4 -1 3.4 -2 0.7 -1 3.5 -1 1.2 -1 -0.4 -2 5.3 -2 0 -2 5.3 -2 -0.2 -2 5.2 -1 0.2 -1 -0.4 -1 1.5 -1 3 -1 1.3 -1 -0.4 -1 0.2 -2 4.8 -1 1 -1 -0.4 -1 0.1 -2 4.5 -1 1.5 -2 -0.4 -1 0.9 -2 4.6 -0.5 0.6 -0.5 0.4 -2 -0.4 -1 0.8 -2 4.4 -1 1.4 -3 0 -1 1.1 -2 4.4 -1 1.2 -3 -0.1 -1 0.8 -3 5.6 -0.5 0.4 -0.5 0.4 -3 -0.1 -1 0.6 -3 5.4 -1 1.2 -1 0.4 -3 -0.1 -1 0.6 -4.2 6.6 -0.8 0.6 -3 -0.1 -2 0.7 -1 1.1 -3 5 -1 1.1 -1 0.5 -4 0.1 -1 0.4 -2 1.9 -3 4.7 -2 1.7 -5 0.3 -1.9 1 -1.8 2 -3.3 4.8 -1 0.9 -2 0.8 -5 0.2 -2 1.1 -2 2 -3 4.2 -2 2 -2 0.8 -6 0.3 -2 0.8 -2.5 2.1 -4.5 5.7 -2 1.6 -2 0.6 -6 0.3 -3 0.8 -2 1.3 -1.9 1.7 -5.1 5.9 -3 1.9 -2 0.4 -7 0.3 -4 1.2 -4 2.9 -6 6.4 -3 1.9 -3 0.7 -10 0.5 -5 1.7 -4 2.5 -8 6.9 -3 1.6 -2 0.6 -3 0.1 -6 -1 -20.7 -6.5 -2.3 -1.1 -2 -1.8 -0.8 -2.1 0.4 -3 1.4 -3 2.9 -4 3.7 -4 5.4 -4.8 6 -4.7 5 -3.3 9 -4.8 18 -6.5 17 -8.1 13 -5.5 14 -7.4 12 -5.6 10 -5.9 10 -5.1 9 -5.8 9 -4.9 7 -5 8 -4.6 6 -4.6 7 -4.4 6 -4.9 5 -3.1 5 -4.4 5 -3.4 5 -4.7 4 -2.8 4 -3.9 5 -3.9 3 -3.3 4 -3.2 3 -3.4 3 -2.4 3 -3.5 3 -2.5 3 -3.7 3 -2.6 3 -3.8 2 -1.7 2 -2.8 3 -3 2 -2.9 2 -1.8 2 -2.8 2 -1.8 2 -2.8 2 -1.7 1 -1.6 2 -1.7 2 -2.8 1 -0.6 2 -2.7 1 -0.6 2 -2.5 1 -0.5 2 -2.6 1 -0.4 1 -1.6 2 -1.6 1 -1.3 1 -0.2 1 -1.7 1 -0.1 1 -1.5 1 -0.1 1 -1.2 1 0.1zM389.4 107.5l2.1 -0.8 1 0.3 0.7 1.5 0 3 -0.8 4 -1.8 6 -4.1 10.7 -5.7 12.3 -7.1 13 -7.5 12 -7.7 10.7 -9 11 -11 12.3 -10 10.5 -11 10.7 -11 9.9 -12 10.1 -13 10.3 -14 10.3 -13 8.9 -17 11 -9 5.6 -9 5.1 -10 5 -9 4 -9 3.3 -10 3 -12 2.7 -12 1.8 -12 0.9 -11 0 -10 -0.7 -9 -1.7 -4 -1.4 -2.8 -1.3 -2.2 -1.5 -1.4 -1.5 -1 -2 0 -2 0.6 -2 1.3 -2 4.3 -4 6.3 -4 18.9 -9.4 15 -8.3 6 -2 15 -2.6 7 -1.9 5.7 -2.8 5.3 -4.4 3 -1.9 3 -1.2 9 -2.6 4 -1.6 3 -1.9 6 -4.5 12.1 -4.9 3.3 -2 5.6 -4.2 10.2 -4.8 6.8 -5.1 9 -4.9 6.6 -5 7.4 -4.5 5 -4 6.7 -4.5 4.8 -4 5.5 -4 9.7 -8 15.3 -13.7 7 -6.7 11 -11.4 20 -22.8 12 -12.9 8 -7.9z"/>
<path fill="#04bbc2" d="M390.8 34.5l0.7 -0.7 1 2.4 1 -1.2 0 3.3 -1 1.5 -1 6.2 -1 1.5 -1 4 -1 1.2 -1 3.8 -1 0.7 -1 4 -1 0.2 -1 3.8 -1 0.8 -2 5 -1 0.1 -1 3.7 -2 1.8 -1 3.6 -1 0.1 -1 1.6 -1 3.4 -1 -0.1 -1 1.3 -1 3.4 -2 0.8 -1.3 3.8 -0.7 0.9 -1 -0.4 -2 5.2 -2 0.1 -2 5.2 -2 -0.1 -2 5.1 -1 0.2 -1 -0.3 -1 1.5 -1 2.9 -1 1.4 -1 -0.4 -1 0.2 -2 4.7 -1 1 -1 -0.3 -1 0.1 -2 4.4 -1 1.5 -2 -0.3 -1 0.9 -2 4.5 -0.9 1 -2.1 -0.3 -1 0.8 -2 4.3 -1 1.4 -3 0.1 -1 1.1 -2 4.3 -1 1.2 -3 0 -1 0.8 -3 5.5 -1 0.8 -3 0 -1 0.6 -3 5.2 -1 1.2 -1 0.5 -3 -0.1 -1 0.7 -4 6.2 -0.8 0.7 -1.2 0.3 -3 0 -1 0.6 -1.1 1.1 -3.9 5.9 -1 0.6 -4 0.2 -1 0.3 -2 1.9 -3 4.6 -2 1.8 -5 0.4 -2 1 -6 7.5 -2 0.9 -5 0.3 -2 1 -1.7 1.6 -3.3 4.4 -2 2 -2 0.9 -5 0.2 -3 1 -2 1.6 -5 6 -2 1.6 -3 0.9 -6 0.3 -2.7 1.1 -3.3 2.7 -5 5.6 -3 1.9 -3 0.6 -6 0.3 -4 1.2 -3.8 2.7 -6.2 6.3 -3 1.9 -3 0.8 -10 0.7 -5 1.6 -4.3 2.7 -7.7 6.4 -3 1.6 -2 0.5 -3 0.3 -6 -1 -18.2 -5.8 -2.8 -1.2 -2.3 -1.8 -1 -2 0.2 -3 1.2 -3 2.8 -4 3.7 -4 4.5 -4 5.9 -4.7 5 -3.4 9 -4.7 19 -7 16 -7.7 13 -5.5 14 -7.4 12 -5.6 10 -6 10 -5 9 -5.8 9 -4.9 7 -5 8 -4.6 6 -4.6 7 -4.4 6 -4.9 5 -3.1 5 -4.4 5 -3.4 5 -4.7 4 -2.8 4 -3.9 5 -3.9 3 -3.3 4 -3.2 3 -3.4 3 -2.4 3 -3.5 3 -2.5 3 -3.7 3 -2.6 2 -2.7 3 -2.8 2 -2.8 3 -3 2 -2.9 2 -1.8 2 -2.8 2 -1.8 2 -2.8 2 -1.7 1 -1.6 2 -1.7 2 -2.8 1 -0.6 2 -2.6 1 -0.6 2 -2.6 1 -0.5 2 -2.5 1 -0.4 1 -1.6 2 -1.5 1 -1.4 1 -0.1 1 -1.7 1 0 1 -1.5 1 0 1 -1.2 1 0.3zM390.1 108.5l1.4 0 0.7 1 0.3 2 -0.6 4 -2.4 8.2 -4.8 11.8 -5.8 12 -6.7 12 -7 11 -7.7 10.4 -9 10.9 -10 11.1 -10 10.4 -11 10.7 -11 9.9 -12 10.1 -13 10.1 -13 9.6 -20 13.4 -19 12 -10 5.7 -10 5.1 -9 3.9 -9 3.4 -9 2.7 -12 2.8 -12 1.9 -12 1 -11 0 -11 -0.9 -8 -1.7 -6 -2.5 -2 -1.5 -1.3 -1.5 -0.5 -1 -0.3 -2 0.5 -2 1.1 -2 4.1 -4 6.3 -4 17.9 -9 15.2 -8.3 6 -1.9 15 -2.9 6.8 -1.9 5.2 -2.6 6 -4.6 2.9 -1.8 15.1 -5.2 3.2 -1.8 6.8 -4.9 12 -5 9 -6.2 10 -4.8 7 -5.1 8 -4.4 7 -5.2 7.2 -4.4 5.8 -4.6 6 -4 10.8 -8.4 9.2 -7.6 15 -13.4 7.2 -7 10.8 -11.2 20.1 -22.8 12.9 -13.8 8 -7.6 3 -2.3z"/>
<path fill="#0ebebb" d="M391.4 35.5l0.5 1 0.2 2 -0.6 6.2 -1 1.7 -1 4.3 -1 1.2 -1 4 -1 0.6 -1 4.2 -1 0.1 -1 3.9 -1 0.9 -2 5 -1 0.1 -1 3.6 -2 2 -1 3.5 -1 0.2 -1 1.5 -1 3.4 -1 -0.1 -1 1.4 -1 3.4 -2 0.8 -1 3.3 -1 1.4 -1 -0.4 -2 5.1 -2 0.2 -2 5.1 -2 0 -2 5.1 -1 0.2 -1 -0.3 -1 1.5 -1 2.8 -1 1.4 -1 -0.3 -1 0.2 -2 4.7 -1 1 -1 -0.3 -1 0.1 -3 5.9 -2 -0.3 -1 0.9 -2 4.4 -1 1.1 -2 -0.3 -1 0.8 -2 4.2 -1 1.4 -3 0.2 -1 1.1 -2 4.1 -1 1.3 -1 0.2 -2 -0.1 -1 0.7 -3 5.5 -1 0.8 -3 0 -1 0.7 -4 6.3 -1 0.5 -3 0 -1 0.6 -4 6.2 -1 0.8 -4 0.3 -1 0.6 -1.3 1.4 -3.7 5.5 -1 0.6 -4 0.2 -1.4 0.7 -1.6 1.6 -3 4.5 -2 1.7 -5 0.5 -2 1.1 -1.5 1.6 -3.5 4.8 -2 1.5 -6 0.7 -2 1 -2 1.9 -4 5.1 -1.2 1 -1.8 0.8 -5 0.4 -3 1 -2.3 1.8 -4.7 5.5 -2 1.6 -3 1 -6 0.5 -3 1.2 -2.8 2.2 -5.2 5.6 -3 2 -3 0.7 -6 0.4 -4 1.2 -3.2 2.1 -6.8 6.6 -3 2 -4 1 -9 0.7 -5 1.6 -4 2.4 -8 6.3 -3 1.6 -2 0.6 -3 0.2 -3 -0.2 -4 -0.9 -17.4 -5.9 -2.6 -1.5 -1.4 -1.5 -0.7 -2 0.5 -3 1.4 -3 2.2 -3 3.7 -4 4.4 -4 5.9 -4.6 5 -3.4 8 -4.2 18.6 -6.8 16.4 -7.9 13 -5.4 14 -7.5 12 -5.5 10 -6 10 -5 9 -5.8 9 -4.9 7 -5 8 -4.6 6 -4.7 7 -4.3 6 -4.9 5 -3.2 5 -4.4 5 -3.3 5 -4.7 4 -2.8 4 -4 4 -2.9 4 -4.2 4 -3.2 3 -3.4 3 -2.4 3 -3.5 3 -2.5 3 -3.7 3 -2.6 2 -2.7 3 -2.8 2 -2.9 3 -2.9 2 -2.9 2 -1.8 2 -2.9 2 -1.7 2 -2.8 2 -1.7 1 -1.6 2 -1.7 2 -2.8 1 -0.5 2 -2.7 1 -0.6 2 -2.6 1 -0.4 2 -2.5 1 -0.4 1 -1.6 2 -1.5 1 -1.3 1 -0.1 1 -1.7 1 0.1 1 -1.5 1 0.2 1 -1.2 1 0.7zM388.2 110.5l1.3 -0.5 1 0.1 0.5 0.4 0.5 1 0 3 -2 8.1 -5 12.7 -5.9 12.2 -6.7 12 -7.1 11 -7.3 9.9 -8 9.7 -11 12.2 -10 10.4 -11 10.6 -11 9.9 -12 10 -11 8.6 -14 10.3 -21 14.1 -19 11.8 -10 5.8 -9 4.6 -9 4 -9 3.5 -9 2.8 -11 2.7 -11 1.9 -12 1.1 -11 0.3 -10 -0.7 -8.6 -1.5 -5.7 -2 -2.7 -1.6 -1.4 -1.4 -0.7 -1 -0.6 -2 0.3 -2 1 -2 1.7 -2 2.2 -2 6.1 -4 32.4 -16.8 6 -2 14 -2.8 7 -2 5.2 -2.4 6.8 -5.1 3 -1.7 11 -3.7 4 -1.6 3.2 -1.9 6.8 -4.8 11 -4.6 2.9 -1.6 7.1 -5 9 -4.4 7 -5 9 -5 7 -5.2 7 -4.4 5.1 -4 5.9 -4 11 -8.5 9.1 -7.5 15.6 -14 17.3 -17.5 20 -22.7 11 -11.8 8 -7.8 3 -2.5z"/>
<path fill="#1bc0b4" d="M389.1 37.5l0.4 -0.5 1 1.3 1 -0.7 0 5.2 -1 2 -1 4.9 -1 1.4 -1 4.1 -1 0.6 -1 4.3 -1 0.2 -1 3.9 -1 0.9 -2 5 -1 0.1 -1 3.7 -2 2 -1 3.5 -1 0.2 -1 1.6 -1 3.3 -1 0 -1 1.3 -1 3.4 -2 0.8 -1 3.3 -1 1.4 -1 -0.3 -2 5.1 -2 0.2 -2 5.1 -2 0 -2 5 -1 0.3 -1 -0.3 -1 1.5 -1 2.8 -1 1.4 -1 -0.3 -1 0.2 -2 4.6 -1 1 -1 -0.2 -1 0.1 -3 5.8 -2 -0.2 -1 0.8 -2 4.5 -0.7 0.7 -0.3 0.3 -2 -0.2 -1 0.8 -2 4.1 -1 1.4 -3 0.3 -1 1.1 -2 4 -1 1.3 -1 0.3 -2 -0.1 -1 0.7 -3 5.4 -1 0.8 -3 0.1 -1 0.7 -4 6.2 -1 0.5 -3 0.1 -1 0.6 -4 6.1 -1 0.8 -4 0.4 -1 0.5 -1 1 -4 5.8 -2 0.9 -3 0.1 -1.9 1 -1.1 1.2 -3 4.4 -2 1.8 -1 0.3 -4 0.3 -2 1 -1.9 2 -3.1 4.3 -2 1.6 -6 0.8 -2 1 -2 1.8 -4 5 -2 1.5 -2 0.5 -5 0.5 -2.3 1 -2.4 2 -4.3 4.9 -2 1.7 -2 0.8 -6 0.6 -3 0.9 -3.2 2.1 -5.8 6 -2 1.6 -3 1.1 -7 0.6 -4 1.2 -3.8 2.5 -6.2 6 -3 2 -4 1.1 -9 0.7 -4 1.2 -4 2.1 -8 6.1 -4 2.2 -2 0.6 -3 0.4 -3 -0.3 -4 -0.8 -15.3 -5.3 -2.7 -1.5 -1.7 -1.5 -1 -2 0.3 -3 1.3 -3 2.1 -3 3.7 -4 4.4 -4 4.9 -3.9 5 -3.4 8 -4.2 19 -7 16 -7.7 13 -5.5 14 -7.4 12 -5.6 10 -5.9 10 -5 9 -5.9 9 -4.8 7 -5 8 -4.7 6 -4.6 7 -4.3 6 -4.9 5 -3.2 5 -4.4 5 -3.4 5 -4.6 4 -2.8 4 -4 5 -3.9 3 -3.3 4 -3.1 3 -3.5 3 -2.3 3 -3.5 3 -2.5 3 -3.7 3 -2.7 3 -3.8 2 -1.7 2 -2.8 3 -3 2 -2.9 2 -1.7 2 -2.9 2 -1.7 2 -2.8 2 -1.7 1 -1.6 2 -1.7 2 -2.8 1 -0.5 2 -2.7 1 -0.6 2 -2.5 1 -0.5 2 -2.5 1 -0.3 1 -1.6 2 -1.4 1 -1.4 1 0 1 -1.7 1 0.3 1 -1.6 1 0.5zM386.6 112.5l1.9 -0.9 1 0 1 0.9 0.2 3 -0.8 4 -1.4 4.9 -4 10.1 -5.7 12 -6.7 12 -7 11 -7.6 10.4 -9 10.8 -10 11.1 -10 10.3 -10 9.6 -10 9 -12 10.2 -12 9.4 -13 9.5 -21 14.2 -21 13 -10 5.7 -9 4.7 -9 4 -9 3.5 -8 2.6 -11 2.7 -11 2 -11 1.2 -11 0.3 -10 -0.6 -9 -1.6 -5.5 -2 -2.5 -1.6 -1.4 -1.4 -0.6 -1.2 -0.3 -1.8 0.5 -2 1.2 -2 1.9 -2 2.4 -2 6.5 -4 28.8 -15 6 -2.1 15 -3.3 7 -2.1 5.2 -2.5 8.8 -6.1 4 -1.6 8 -2.6 3.8 -1.7 9.2 -6.1 12 -5.2 9 -6.1 9.4 -4.6 7.6 -5.4 8.2 -4.6 6.8 -5 7 -4.4 6 -4.6 5.9 -4 10.2 -8 9.7 -8 15.2 -13.7 7 -6.8 11 -11.5 16.8 -19 12.2 -13.2 8 -7.9z"/>
<path fill="#26c2ad" d="M389.4 38.5l0.6 1 0.4 2 -0.7 6 -0.2 1.1 -1 1.4 -1 4.5 -1 0.6 -1 4.4 -1 0.2 -1 3.9 -1 1 -2 5.1 -1 0.1 -1 3.6 -2 2.1 -1 3.5 -1 0.2 -1 1.6 -1 3.3 -1 0 -1 1.4 -1 3.3 -2 0.9 -1 3.3 -1 1.4 -1 -0.3 -2 5 -2 0.3 -2 5 -2 0.1 -2 4.9 -1 0.4 -1 -0.3 -1 1.4 -1 2.8 -1 1.4 -1 -0.2 -1 0.2 -2 4.5 -1 1.1 -2 -0.1 -3 5.7 -2 -0.1 -1 0.8 -2 4.4 -1 1.1 -2 -0.2 -1 0.8 -3 5.5 -3 0.3 -1 1 -2 4.1 -1 1.2 -1 0.3 -2 0 -1 0.7 -3 5.3 -1 0.8 -3 0.2 -1 0.7 -4 6.1 -1 0.5 -3 0.2 -1 0.6 -4 5.9 -1 0.9 -4 0.5 -1 0.5 -1.1 1.1 -3.9 5.6 -2 0.9 -3 0.2 -2 1.1 -4 5.3 -2 1.9 -1 0.3 -4 0.4 -2 1 -2 2.1 -3 4 -2 1.6 -2 0.5 -4 0.4 -2 1 -2 1.8 -4 4.9 -2 1.5 -2 0.6 -5 0.5 -2 0.8 -3 2.5 -5 5.4 -2 1.3 -2 0.6 -6 0.6 -3 1.2 -3 2.3 -5 5.2 -3 2 -3 0.8 -7 0.8 -4 1.5 -3.3 2.4 -6.7 6.1 -3 1.7 -3 0.8 -9 0.8 -4 1.2 -4.5 2.4 -9.5 6.7 -3 1.3 -3 0.6 -5 -0.2 -7 -1.9 -9.3 -3.5 -2.7 -1.4 -2.1 -1.6 -1.2 -2 -0.1 -2 0.9 -3 1.8 -3 3.4 -4 4.2 -4 5 -4 5.1 -3.6 8 -4.2 19 -7.1 16 -7.7 13 -5.4 14 -7.5 12 -5.5 10 -6 10 -5 9 -5.8 9 -4.9 7 -5 8 -4.6 6 -4.7 7 -4.3 6 -4.9 5 -3.1 5 -4.5 5 -3.3 5 -4.7 4 -2.7 4 -4.1 5 -3.8 3 -3.3 4 -3.2 3 -3.4 3 -2.3 3 -3.6 3 -2.5 3 -3.7 3 -2.6 2 -2.7 3 -2.8 2 -2.9 3 -2.9 2 -2.9 2 -1.7 2 -3 2 -1.6 2 -2.9 2 -1.6 1 -1.6 2 -1.7 2 -2.8 1 -0.5 2 -2.7 1 -0.5 2 -2.6 1 -0.4 2 -2.5 1 -0.3 1 -1.6 2 -1.4 1 -1.3 1 0.1 1 -1.8 1 0.5 1 -1.6 1 0.7zM386.9 113.5l1.6 -0.4 1 0.6 0.4 1.8 -0.3 3 -2.2 8 -4.5 11 -6 12 -6.3 11 -6.5 10 -7.6 10.1 -8 9.5 -11 12.2 -10 10.2 -10 9.5 -11 9.8 -11 9.1 -12 9.4 -13 9.4 -21 14 -30 18 -9 4.7 -9 4 -9 3.5 -8 2.6 -11 2.8 -11 2 -11 1.1 -10 0.3 -10 -0.6 -8 -1.4 -5.8 -2.2 -2.2 -1.6 -1.2 -1.4 -0.5 -1 -0.2 -2 1.3 -3 1.8 -2 2.4 -2 6.3 -4 28.1 -14.7 6.8 -2.3 14.2 -3.2 7 -2.1 5 -2.5 6 -4.3 3.2 -1.9 14.8 -5.5 10 -6.5 11.4 -5 9.1 -6 9.8 -5 7.7 -5.4 8.1 -4.6 5.9 -4.3 7.3 -4.7 11.7 -8.5 10.9 -8.5 9.1 -7.6 15 -13.4 7.2 -7 10.5 -11 17.3 -19.6 12 -12.9 8 -7.7 3 -2.4z"/>
<path fill="#2dc4a5" d="M387.2 40.5l0.3 -0.6 1 1.4 1 -1.1 0.4 2.3 -0.1 2 -0.3 2.6 -1 1.5 -1 5 -1 0.6 -1 4.6 -1 0.2 -1 4.1 -1 0.9 -2 5.2 -1 0.2 -1 3.6 -2 2.1 -1 3.5 -1 0.2 -1 1.6 -1 3.3 -1 0.1 -1 1.3 -1 3.3 -2 1 -1 3.2 -1 1.4 -1 -0.2 -2 4.9 -2 0.4 -2 5 -2 0.1 -2 4.9 -1 0.4 -1 -0.3 -1 1.4 -1 2.8 -1 1.4 -2 0 -2 4.5 -1 1.1 -2 -0.1 -3 5.7 -2 -0.1 -1 0.8 -2 4.3 -1 1.1 -2 -0.1 -1 0.7 -3 5.5 -3 0.4 -1 1 -2 4 -1 1.2 -1 0.4 -2 -0.1 -1 0.8 -3 5.2 -1 0.9 -3 0.2 -1 0.6 -4 6.1 -1 0.6 -3 0.2 -1 0.6 -4 5.8 -1 0.9 -1 0.3 -3 0.2 -1 0.6 -1.4 1.4 -3.6 5.2 -2 0.9 -3 0.2 -2 1.1 -4 5.3 -2 1.8 -1 0.4 -4 0.4 -2 1 -1.7 1.7 -3.3 4.3 -2 1.7 -2 0.5 -4 0.5 -2 0.9 -2 1.9 -4 4.7 -2 1.5 -2 0.7 -5 0.6 -2 0.8 -2.5 1.9 -5.5 5.8 -2 1.3 -2 0.6 -6 0.8 -3 1.1 -3 2.3 -5 5 -3 2.1 -3 0.9 -7 0.8 -4 1.5 -3 2.1 -7 6.2 -3 1.7 -3 0.8 -9 1 -4 1.2 -4 2 -10 6.9 -3 1.3 -3 0.6 -3 0 -3 -0.4 -7 -2.1 -8.6 -3.5 -2.4 -1.6 -1.4 -1.4 -0.8 -2 0.1 -2 1.2 -3 2 -3 2.6 -3 4.3 -4.1 4.9 -3.9 5.1 -3.5 8 -4.1 18 -6.6 16 -7.7 13 -5.5 14 -7.4 12 -5.6 10 -6 10 -4.9 9 -5.9 9 -4.8 7 -5.1 8 -4.6 6 -4.6 7 -4.3 6 -5 5 -3.1 5 -4.4 5 -3.4 5 -4.7 4 -2.7 4 -4 4 -3 4 -4.2 4 -3.1 3 -3.5 3 -2.3 3 -3.6 3 -2.4 3 -3.8 3 -2.6 3 -3.8 2 -1.7 2 -2.8 3 -3 2 -2.9 2 -1.7 2 -2.9 2 -1.7 2 -2.8 2 -1.7 1 -1.6 2 -1.6 2 -2.8 1 -0.5 2 -2.7 1 -0.5 2 -2.6 1 -0.4 2 -2.5 1 -0.2 1 -1.7 2 -1.2 1 -1.3 1 0.2 1 -1.8 1 0.7zM385.2 115.5l2.3 -0.8 1 0.4 0.5 1.4 0 2 -1.5 6.4 -4.1 10.6 -5.7 12 -6.2 11 -7 10.8 -8 10.8 -9 10.7 -10 10.9 -10 10.2 -10 9.5 -11 9.7 -11 9.1 -11 8.6 -13 9.4 -22 14.6 -30 17.9 -8 4.2 -9 4.2 -9 3.5 -8 2.7 -10 2.7 -11 2.1 -10 1.2 -10 0.4 -10 -0.4 -8 -1.2 -6 -2.1 -2 -1.2 -1.4 -1.3 -0.7 -1 -0.4 -2 1 -3 1.7 -2 2.3 -2 6.1 -4 26.6 -14 6.8 -2.4 15 -3.6 6.5 -2 4.5 -2.2 7 -4.8 3 -1.7 15 -5.8 9 -5.8 12 -5.5 9 -5.9 10 -5.2 7.4 -5.1 8.6 -5 6 -4.4 7 -4.5 11.1 -8.1 10.9 -8.5 9.1 -7.5 14.9 -13.4 7.8 -7.6 10.2 -10.7 17 -19.3 11 -11.8 8 -7.7z"/>
<path fill="#33c69d" d="M387.3 41.5l0.2 -0.3 0.7 1.3 0.4 2 -0.9 7 -0.2 1.2 -1 0.5 -1 4.9 -1 0.2 -1 4.2 -1 1 -2 5.2 -1 0.2 -1 3.6 -2 2.1 -1 3.6 -1 0.3 -1 1.5 -1 3.3 -1 0.1 -1 1.3 -1 3.4 -2 0.9 -1 3.2 -1 1.5 -1 -0.3 -2 5 -2 0.4 -2 4.9 -2 0.2 -2 4.8 -1 0.4 -1 -0.2 -1 1.4 -1 2.7 -1 1.5 -2 0 -2 4.4 -1 1.1 -2 0 -3 5.6 -2 0 -1 0.8 -2 4.2 -1 1.2 -2 -0.1 -1 0.7 -3 5.4 -1 0.4 -2 0.1 -1 1 -2 3.9 -1 1.3 -1 0.3 -2 0 -1 0.8 -3 5.1 -1 0.9 -3 0.3 -1 0.6 -4 6 -1 0.6 -3 0.2 -1 0.6 -4 5.8 -1 0.9 -1 0.4 -3 0.2 -1 0.5 -1 1 -4 5.5 -2 1.1 -3 0.2 -2 1.1 -4 5.2 -2 1.8 -1 0.4 -4 0.5 -2 1 -2 2 -3 3.9 -2 1.6 -2 0.6 -4 0.5 -2 1 -2 1.8 -4 4.6 -2 1.6 -2 0.7 -5 0.6 -2 0.8 -3 2.3 -5 5.3 -2 1.3 -2 0.7 -6 0.8 -3 1.1 -3 2.2 -5 5 -3 2.1 -3 0.9 -7 0.9 -4 1.5 -3.2 2.2 -6.8 5.9 -3 1.8 -4 1 -8 0.9 -4 1.2 -4.4 2.2 -9.6 6.4 -3 1.3 -3 0.6 -5 -0.2 -7 -1.8 -7.9 -3.3 -2.1 -1.3 -1.9 -1.7 -1 -2 0 -2 1 -3 2 -3 2.5 -3 4.2 -4 4.2 -3.4 5 -3.4 8 -4.2 18 -6.6 16 -7.7 13 -5.5 14 -7.4 12 -5.6 10 -6 10 -4.9 9 -5.9 9 -4.8 7 -5.1 8 -4.5 6 -4.7 7 -4.3 6 -4.9 5 -3.1 5 -4.5 5 -3.3 5 -4.7 4 -2.8 4 -4 4 -2.9 4 -4.3 4 -3.1 3 -3.4 3 -2.4 3 -3.5 3 -2.5 3 -3.7 3 -2.6 2 -2.8 3 -2.7 2 -2.9 3 -2.9 2 -3 2 -1.7 2 -2.9 2 -1.6 2 -2.9 2 -1.6 2 -2.7 1 -0.6 2 -2.8 1 -0.5 2 -2.6 1 -0.5 2 -2.6 1 -0.3 2 -2.5 1 -0.2 1 -1.7 2 -1.1 1 -1.3 1 0.3 1 -1.8 1 1zM385.4 116.5l1.1 -0.3 1 0.3 0.5 1 -0.1 4 -2.4 8 -4 9.6 -5.2 10.4 -6.4 11 -6.4 9.8 -7 9.3 -8 9.5 -10 11 -10 10.2 -10 9.5 -11 9.8 -11 9.1 -12 9.3 -11 8 -24 16 -30 17.7 -8 4.2 -9 4.2 -8 3.2 -8 2.8 -10 2.7 -11 2.2 -10 1.3 -10 0.4 -9 -0.3 -8 -1.2 -6 -2.1 -2 -1.3 -1.3 -1.3 -0.5 -1 -0.2 -2 1.3 -3 1.9 -2 2.5 -2 6.4 -4 23.9 -12.6 6.7 -2.4 15.3 -3.8 6 -1.9 4.9 -2.3 9.1 -6.1 15.1 -5.9 9.9 -6.2 12 -5.6 9 -5.8 9 -4.7 8 -5.5 8 -4.6 6.3 -4.6 6.7 -4.3 11.9 -8.7 10.2 -8 9.6 -8 14.3 -12.8 14.2 -14.2 20.8 -23.3 11 -11.8 8 -7.6 3 -2.3z"/>
<path fill="#39c994" d="M385.2 43.5l0.3 -0.6 1 1.6 1 -1.8 0.6 2.8 -0.6 6 -1 0.4 -1 5.5 -1 0.1 -1 4.4 -1 1 -2 5.3 -1 0.2 -1 3.7 -2 2.1 -1 3.6 -1 0.3 -1 1.5 -1 3.3 -1 0.2 -1 1.3 -1 3.3 -2 1 -1 3.2 -1 1.5 -1 -0.3 -2 4.9 -2 0.5 -2 4.9 -2 0.2 -2 4.8 -1 0.4 -1 -0.2 -1 1.4 -1 2.7 -1 1.4 -2 0.1 -2 4.3 -1 1.2 -2 0 -3 5.6 -2 0 -1 0.8 -2 4.2 -1 1.1 -2 0 -1 0.7 -3 5.4 -1 0.3 -2 0.1 -1 1.1 -2 3.8 -1 1.3 -1 0.4 -2 0 -1 0.8 -3 5 -1 0.9 -3 0.4 -1 0.6 -4 5.9 -1 0.6 -3 0.3 -1 0.6 -4 5.7 -1 0.9 -1 0.4 -3 0.3 -1 0.5 -1.1 1.1 -3.9 5.3 -1 0.7 -4 0.7 -2 1 -4 5.1 -2 1.9 -2 0.6 -3 0.3 -2 1 -2 2 -3 3.8 -2 1.7 -2 0.6 -4 0.6 -2 0.9 -2 1.8 -4 4.6 -2 1.5 -2 0.8 -5 0.6 -2 0.8 -3 2.3 -5 5.2 -2 1.4 -2 0.7 -6 0.8 -3 1.2 -3 2.1 -6 5.7 -2 1.2 -3 1 -7 1 -4 1.5 -3.8 2.6 -6.2 5.4 -3 1.7 -4 1.1 -8 1 -4 1.1 -4 2 -10 6.5 -3 1.3 -3 0.6 -5 -0.2 -6.1 -1.5 -7.2 -3 -2.7 -1.7 -1.5 -1.3 -1.1 -2 -0.2 -2 1 -3 1.9 -3 2.5 -3 4.2 -4 8.2 -6.1 8 -4.3 18 -6.6 16 -7.7 13 -5.4 14 -7.5 12 -5.5 10 -6 10 -5 9 -5.9 9 -4.8 7 -5 8 -4.6 6 -4.7 7 -4.3 6 -4.9 5 -3.1 5 -4.5 5 -3.3 5 -4.7 4 -2.7 4 -4.1 4 -2.9 4 -4.3 4 -3 3 -3.5 3 -2.3 3 -3.6 3 -2.5 3 -3.7 3 -2.6 3 -3.8 2 -1.7 2 -2.9 3 -2.9 2 -2.9 2 -1.7 2 -3 2 -1.6 2 -2.9 2 -1.6 1 -1.6 1 -1.1 1 -0.5 2 -2.8 1 -0.5 2 -2.7 1 -0.4 2 -2.6 1 -0.3 2 -2.5 1 -0.1 1 -1.7 2 -1 1 -1.3 1 0.5zM383.6 118.5l1.9 -0.7 1 0.1 0.8 1.6 -0.1 2 -1.7 7 -4 9.9 -5 10.1 -6.3 11 -6.7 10.3 -7 9.3 -8 9.5 -10 10.9 -9 9.2 -10 9.6 -11 9.8 -11 9.1 -11 8.6 -11 8 -11 7.6 -15 9.7 -29.5 17.4 -8.5 4.5 -8 3.7 -8 3.3 -8 2.8 -10 2.9 -10 2.1 -10 1.4 -10 0.6 -9 -0.3 -8 -1.2 -5.4 -1.8 -1.7 -1 -1.9 -1.9 -0.5 -1.1 0 -2 1.7 -3 4.8 -4 6.6 -4 21.4 -11.3 7 -2.5 15 -3.8 6 -2 5 -2.4 9.2 -6 15 -6 9.5 -6 11.3 -5.2 9 -5.8 9.4 -5 7.6 -5.2 8.2 -4.8 13.1 -9 12.3 -9 10.2 -8 9.6 -8 13.6 -12.2 14.7 -14.8 29.3 -32.4 8 -7.8z"/>
<path fill="#42ca8b" d="M385.3 44.5l0.2 -0.4 0.7 1.4 0.3 1.7 1 -2.5 0 4.8 0 0.3 -1 -0.2 -1 7 -1 0 -1 4.6 -1 1.1 -2 5.4 -1 0.2 -1 3.7 -2 2.2 -1 3.6 -1 0.3 -1 1.5 -1 3.4 -1 0.1 -1 1.3 -1 3.3 -2 1.1 -1 3.1 -1 1.5 -1 -0.2 -2 4.9 -2 0.5 -2 4.8 -2 0.3 -2 4.7 -1 0.5 -1 -0.2 -1 1.4 -1 2.6 -1 1.5 -2 0.1 -2 4.3 -1 1.1 -2 0.1 -3 5.5 -2 0.1 -1 0.8 -2 4.1 -1 1.2 -2 0 -1 0.7 -3 5.3 -1 0.4 -2 0.1 -1 1.1 -2 3.7 -1 1.3 -1 0.4 -2 0.1 -1 0.7 -3 5 -1 1 -3 0.3 -1 0.7 -4 5.8 -1 0.7 -3 0.3 -1 0.6 -4 5.6 -1 0.9 -1 0.4 -3 0.4 -1 0.5 -1.4 1.4 -3.7 5 -1.9 1 -3 0.3 -2 1.1 -4 5 -2 1.9 -2 0.6 -3 0.4 -2 1 -1.8 1.7 -3.2 4 -2 1.7 -2 0.7 -4 0.5 -2 1 -2 1.7 -4 4.5 -2 1.6 -2 0.7 -5 0.8 -2 0.8 -2.7 2 -5.3 5.3 -2 1.4 -2 0.7 -6 0.9 -3 1.2 -3 2.1 -6 5.6 -2 1.2 -3 1.1 -7 1 -4 1.5 -3.1 2 -6.9 5.8 -3 1.8 -3 1 -9 1.2 -4 1.1 -4.3 2.1 -9.7 6.2 -3 1.3 -3 0.6 -5 -0.1 -7 -1.9 -6.6 -3.1 -1.4 -1 -1.9 -2 -0.7 -2 0.1 -2 0.7 -2 1.8 -3 2.5 -3 4.2 -4 4.3 -3.4 4 -2.7 7 -3.7 18 -6.6 16 -7.7 13 -5.4 14 -7.5 12 -5.5 10 -6.1 10 -4.9 9 -5.9 9 -4.8 7 -5 8 -4.6 6 -4.7 7 -4.3 6 -4.9 5 -3.1 5 -4.5 5 -3.3 5 -4.7 4 -2.7 4 -4.1 4 -2.9 4 -4.3 4 -3 3 -3.5 3 -2.3 3 -3.6 3 -2.5 3 -3.7 3 -2.6 2 -2.8 3 -2.7 2 -2.9 3 -2.9 2 -2.9 2 -1.7 2 -3 2 -1.5 2 -3 2 -1.5 2 -2.7 1 -0.6 2 -2.8 1 -0.4 2 -2.7 1 -0.4 2 -2.6 1 -0.2 2 -2.5 1 0 1 -1.8 2 -0.9 1 -1.3 1 0.9zM383.9 119.5l1.6 -0.1 0.8 1.1 0.1 2 -0.3 2 -2.5 8 -3.9 9 -5.1 10 -5.9 10 -6.2 9.2 -6.7 8.8 -7.3 8.6 -10 10.9 -9 9.2 -10 9.5 -10 8.9 -10 8.3 -10 7.9 -12 8.8 -13 9 -15 9.6 -29 17 -15 7.7 -8 3.4 -8 3 -10 3 -10 2.2 -10 1.5 -9 0.7 -9 -0.1 -8 -1 -6 -1.8 -2.1 -1.3 -1.1 -1 -0.6 -1 -0.3 -2 1.4 -3 2 -2 2.5 -2 6.5 -4 14.7 -8 6 -2.9 6 -2.3 16 -4.2 6 -2 5 -2.5 9 -5.8 15 -6.1 9 -5.7 11.6 -5.5 9.4 -6 9.3 -5 7.4 -5 8.3 -5 13.1 -9 11.9 -8.7 10 -7.9 18 -15.4 12 -11.4 7 -7.2 21 -23.5 10 -10.6 8 -7.5 3 -2.1z"/>
<path fill="#4ecc81" d="M385.4 45.5l0.1 -0.2 0.4 1.2 0.3 2 -0.7 7.1 -1 -0.1 -1 5 -1 1.1 -2 5.6 -1 0.1 -1 3.8 -2 2.2 -1 3.6 -1 0.4 -1 1.5 -1 3.4 -1 0.1 -1 1.4 -1 3.2 -2 1.1 -1 3.2 -1 1.5 -1 -0.2 -2 4.8 -2 0.5 -2 4.9 -2 0.3 -2 4.7 -1 0.5 -1 -0.2 -1 1.4 -1 2.6 -1 1.5 -2 0.1 -2 4.2 -1 1.2 -2 0.1 -3 5.5 -2 0.1 -1 0.8 -2 4.1 -1 1.1 -2 0.1 -1 0.7 -3 5.3 -1 0.4 -2 0.1 -1 1 -3 5.1 -1 0.4 -2 0.1 -1 0.7 -3 4.9 -1 1 -3 0.4 -1 0.6 -4 5.9 -1 0.6 -3 0.4 -1 0.6 -4 5.5 -1 0.9 -1 0.5 -3 0.3 -1 0.5 -1.7 1.8 -2.3 3.4 -1.6 1.6 -1.4 0.6 -3 0.4 -2 1 -4 5 -2 1.9 -2 0.7 -3 0.3 -2 1 -2 2 -3 3.7 -2 1.7 -2 0.7 -4 0.6 -2 0.9 -2 1.7 -4 4.5 -2 1.5 -2 0.8 -5 0.8 -2 0.8 -2.1 1.4 -5.9 5.9 -2 1.3 -2.1 0.8 -5.9 0.9 -3 1.2 -2.8 1.9 -5.2 4.8 -3 2.1 -3 1.1 -8 1.4 -3 1.2 -3.6 2.4 -6.4 5.3 -3 1.8 -3 1 -9 1.3 -4 1.1 -4 1.9 -10 6.2 -3 1.2 -3 0.7 -5 -0.1 -6 -1.6 -6.1 -2.8 -1.9 -1.3 -1.6 -1.7 -0.8 -2 0 -2 0.6 -2 1.8 -3 2.4 -3 3.1 -3 4.5 -3.7 4 -2.7 8 -4.2 17 -6.2 16 -7.7 13 -5.4 14 -7.5 12 -5.5 10 -6.1 10 -4.9 9 -5.9 9 -4.8 7 -5 8 -4.6 6 -4.7 7 -4.2 6 -5 5 -3.1 5 -4.5 5 -3.3 5 -4.7 4 -2.7 4 -4.1 4 -2.9 4 -4.3 4 -3 3 -3.5 3 -2.3 3 -3.6 3 -2.5 3 -3.7 3 -2.6 2 -2.8 3 -2.7 2 -2.9 3 -2.9 2 -2.9 2 -1.7 2 -3 2 -1.5 2 -3 2 -1.5 2 -2.7 1 -0.5 2 -2.8 1 -0.4 2 -2.7 1 -0.4 2 -2.6 1 -0.2 2 -2.5 1 0.1 1 -1.8 2 -0.7 1 -1.3 1 1.3zM382 121.5l1.5 -0.6 1 0 0.7 0.6 0.3 0.8 0 1.9 -1.9 7.3 -3.3 8 -4.8 9.7 -6 10.4 -7 10.6 -7 9.1 -8 9.4 -9 9.7 -9 9.2 -10 9.5 -10 8.9 -10 8.3 -10 7.8 -12 8.8 -13 8.9 -16 10.2 -28.5 16.5 -15.5 7.9 -15 6 -10 3 -9 2.1 -10 1.5 -9 0.7 -9 -0.1 -8 -1.1 -5 -1.7 -2 -1.3 -0.9 -1 -0.5 -1 -0.1 -2 1.8 -3 4.9 -4 6.6 -4 12.7 -7 6.5 -3 5.5 -2 15.5 -4.2 6 -2.1 4 -2 10 -6.3 15 -6.2 9 -5.6 11.6 -5.6 9.4 -6 9 -4.9 7.6 -5.1 7.4 -4.4 13.9 -9.6 11.1 -8.1 11 -8.7 9 -7.5 14 -12.7 14 -14.1 28 -30.9 8 -7.7z"/>
<path fill="#5bcc77" d="M383.3 47.5l0.2 -0.2 0.2 0.2 0.8 2.2 1 -2.8 0.3 2.6 -0.3 4.8 -1 -0.7 -1 6.1 -1 1.1 -2 5.8 -1 0.1 -1 3.9 -2 2.2 -1 3.7 -1 0.3 -1 1.6 -1 3.4 -1 0.2 -1 1.3 -1 3.3 -2 1.1 -1 3.1 -1 1.5 -1 -0.1 -2 4.8 -2 0.5 -2 4.9 -2 0.3 -2 4.6 -1 0.6 -1 -0.2 -1 1.4 -1 2.5 -1 1.5 -2 0.2 -2 4.2 -1 1.2 -2 0.1 -3 5.4 -2 0.2 -1 0.8 -2 4 -1 1.2 -2 0.1 -1 0.7 -3 5.2 -1 0.4 -2 0.2 -1 1 -3 5 -1 0.5 -2 0.1 -1 0.7 -3 4.9 -1 0.9 -3 0.5 -1 0.6 -4 5.8 -1 0.6 -3 0.4 -1 0.6 -4 5.5 -1 1 -1 0.4 -3 0.4 -1 0.5 -1.2 1.1 -3.8 5.1 -1 0.8 -4 0.8 -2 1 -4 4.9 -2 1.9 -2 0.7 -3 0.4 -2 1 -2 1.9 -3 3.6 -2 1.7 -2 0.8 -4 0.6 -2 0.9 -2 1.7 -4 4.4 -2 1.6 -2 0.8 -5 0.9 -2 0.7 -2 1.4 -6 5.8 -2 1.4 -3 1 -5 0.8 -3 1.1 -3 2.1 -5 4.5 -3 2.2 -3 1.1 -8 1.4 -3 1.2 -3 1.9 -7 5.7 -3 1.8 -3 1 -9 1.4 -4 1.1 -4.1 1.9 -9.9 6 -3 1.3 -3 0.6 -5 -0.1 -6 -1.6 -4.7 -2.2 -2.3 -1.6 -1.3 -1.4 -1 -2 -0.1 -2 0.6 -2 1.7 -3 2.4 -3 3.7 -3.6 4 -3.1 4 -2.7 8 -4 17 -6.2 15 -7.4 13 -5.3 14 -7.6 12 -5.4 10 -6.1 10 -4.9 9 -5.9 9 -4.8 7 -5.1 8 -4.5 6 -4.7 7 -4.2 6 -5.1 5 -3 5 -4.5 5 -3.3 5 -4.7 4 -2.7 4 -4.1 4 -2.9 4 -4.3 4 -3 3 -3.6 3 -2.2 3 -3.6 3 -2.4 3 -3.8 3 -2.6 2 -2.8 3 -2.7 2 -2.9 3 -2.9 2 -2.9 2 -1.7 2 -3 2 -1.5 2 -2.9 2 -1.6 2 -2.7 1 -0.5 2 -2.8 1 -0.4 2 -2.7 1 -0.3 2 -2.6 1 -0.1 2 -2.5 1 0.2 1 -1.8 1 0 1 -0.5zM382.3 122.5l1.2 -0.2 1 1 0 3.2 -2 6.8 -3.9 9.2 -5.1 9.8 -5 8.4 -6 9 -7 9.1 -8 9.4 -9 9.7 -9 9.1 -9 8.6 -10 8.9 -10 8.3 -10 7.8 -12 8.8 -15 10.3 -15 9.4 -28.4 16.4 -14.6 7.5 -15 6.1 -10 3.1 -9 2.2 -10 1.6 -9 0.7 -9 -0.1 -7 -1 -5 -1.8 -1.8 -1.3 -0.8 -1 -0.3 -1 0.2 -2 2.1 -3 5.2 -4 8.4 -5 9.1 -5 6.9 -3.1 5.5 -1.9 14.5 -4 6 -2.1 4 -2 9.2 -5.9 14.8 -6.2 9.3 -5.8 11.7 -5.7 9 -5.7 9 -4.9 8 -5.4 8 -4.8 13 -9 11.5 -8.5 10.2 -8 17.5 -15 7.8 -7.4 11 -11.1 21 -23.4 9 -9.5 7 -6.5 3 -2.2z"/>
<path fill="#68cd6b" d="M383.5 48.5l0.6 2 0.1 2 -0.7 6 -1 1.4 -2 6.1 -1 0.1 -1 4 -2 2.3 -1 3.6 -1 0.4 -1 1.6 -1 3.3 -1 0.3 -1 1.3 -1 3.3 -2 1.1 -1 3.1 -1 1.6 -1 -0.2 -2 4.8 -2 0.6 -2 4.8 -2 0.4 -2 4.6 -1 0.6 -1 -0.2 -1 1.3 -1 2.6 -1 1.5 -2 0.2 -2 4.2 -1 1.1 -2 0.2 -3 5.4 -2 0.2 -1 0.7 -2 4.1 -1 1.1 -2 0.2 -1 0.7 -3 5.1 -1 0.5 -2 0.2 -1 1 -3 4.9 -1 0.5 -2 0.2 -1 0.7 -3 4.8 -1 1 -3 0.5 -1 0.6 -4 5.7 -1 0.7 -3 0.4 -1 0.6 -4 5.4 -1 1 -1 0.4 -3 0.5 -1 0.5 -1.4 1.4 -3.6 4.7 -1 0.8 -4 0.8 -2 1 -4 4.9 -2 1.9 -2 0.7 -3 0.5 -2 0.9 -2 1.9 -3 3.6 -2 1.7 -2 0.8 -4 0.7 -2 0.9 -2 1.6 -4 4.4 -2 1.6 -2 0.8 -5 0.9 -2 0.8 -3 2.1 -5 4.9 -3 1.9 -7 1.4 -3 1.1 -3 2.1 -6 5.3 -3 1.8 -3 0.9 -6 0.9 -4 1.5 -3.5 2.2 -6.5 5.3 -4 2.2 -3 0.9 -8 1.2 -4 1.1 -4 1.8 -10 6 -3 1.2 -3 0.6 -5 -0.1 -4.8 -1.2 -4.5 -2 -1.7 -1.1 -2.1 -1.9 -1 -2 -0.2 -2 0.5 -2 1.6 -3 2.4 -3 3.1 -3 3.6 -3 4.1 -2.8 7 -3.6 17 -6.2 16 -7.8 13 -5.3 14 -7.6 12 -5.4 10 -6.1 10 -4.9 9 -5.9 9 -4.8 7 -5.1 8 -4.5 6 -4.8 7 -4.1 6 -5.1 5 -3 5 -4.5 5 -3.3 5 -4.8 4 -2.6 4 -4.1 4 -2.9 4 -4.3 4 -3 3 -3.6 3 -2.2 3 -3.7 3 -2.3 3 -3.9 3 -2.5 2 -2.8 3 -2.7 2 -2.9 3 -2.9 2 -3 2 -1.6 2 -3 2 -1.5 2 -2.9 2 -1.5 2 -2.7 1 -0.5 2 -2.8 1 -0.4 2 -2.7 1 -0.3 2 -2.6 1 0 2 -2.5 1 0.3 1 -1.8 1 0.1 1 -0.3zM380.3 124.5l2.2 -0.6 1 0.6 0.1 3 -2 7 -3.1 7.4 -4.9 9.6 -5.3 9 -5.8 8.7 -7 9.1 -8 9.4 -9 9.7 -9 9.1 -9 8.5 -19 16.3 -10 7.9 -12 8.8 -18 12.2 -22 13.4 -28.7 15.9 -9.3 4.4 -9.1 3.6 -8.9 3 -9 2.3 -9 1.7 -9 1 -9 0.2 -7 -0.7 -5.4 -1.5 -3.1 -2 -0.6 -1 -0.2 -2 0.4 -1 1.4 -2 5 -4 8.2 -5 9.1 -5 6.7 -3 6 -2 13.5 -3.8 6 -2.2 4 -2 9.5 -6 14.2 -6 9.8 -6 11.5 -5.6 8.3 -5.4 9.1 -5 15.6 -10 13.1 -9 11.9 -8.8 10 -7.9 18 -15.5 8 -7.6 10.1 -10.2 27.9 -30.7 7 -6.7z"/>
<path fill="#77cc60" d="M383.1 50.5l0.4 -0.5 0.4 2.5 -0.4 5 -1 1.2 -2 6.6 -1 0.1 -1 4.1 -2 2.3 -1 3.8 -1 0.4 -1 1.6 -1 3.3 -1 0.3 -1 1.3 -1 3.3 -2 1.1 -1 3.2 -1 1.5 -1 -0.1 -2 4.8 -2 0.6 -2 4.8 -2 0.4 -2 4.6 -1 0.5 -1 -0.1 -1 1.3 -1 2.6 -1 1.5 -2 0.2 -2 4.1 -1 1.2 -2 0.2 -3 5.4 -2 0.2 -1 0.7 -2 4 -1 1.2 -2 0.1 -1 0.7 -3 5.2 -1 0.5 -2 0.2 -1 1 -3 4.9 -1 0.5 -2 0.1 -1 0.7 -3 4.8 -1 1 -3 0.5 -1 0.7 -4 5.6 -1 0.7 -3 0.5 -1 0.6 -4 5.4 -1 0.9 -1 0.5 -3 0.4 -1 0.5 -1.7 1.8 -3.3 4.3 -1 0.8 -1 0.4 -3 0.5 -2 1 -4 4.8 -2 1.9 -2 0.7 -3 0.5 -2 1 -2 1.8 -3 3.6 -2 1.7 -2 0.8 -4 0.7 -2 0.9 -2 1.7 -4 4.3 -2 1.5 -2 0.9 -5 0.9 -2 0.8 -3 2.1 -5 4.9 -3 1.8 -7 1.5 -3 1.1 -3 2 -6 5.3 -3 1.8 -3 0.9 -6 1 -4 1.5 -3 1.8 -7 5.5 -4 2.3 -3 0.9 -8 1.2 -4 1.1 -4 1.9 -10 5.8 -3 1.2 -3 0.7 -4 0 -5 -1.2 -5 -2.3 -3 -2.5 -1 -1.8 -0.3 -2 0.4 -2 1.6 -3 2.4 -3 3 -3 6.9 -5.1 7 -3.7 17 -6.2 16 -7.8 13 -5.3 14 -7.6 12 -5.4 10 -6.1 10 -4.9 9 -6 9 -4.7 7 -5.1 8 -4.5 6 -4.8 7 -4.1 6 -5.1 5 -3 5 -4.6 5 -3.2 5 -4.8 4 -2.6 4 -4.2 4 -2.8 4 -4.3 4 -3 3 -3.6 3 -2.2 3 -3.7 3 -2.3 3 -3.9 3 -2.5 2 -2.8 3 -2.7 2 -2.9 3 -2.9 2 -3 2 -1.6 2 -3 2 -1.5 2 -3 2 -1.4 2 -2.7 1 -0.5 2 -2.8 1 -0.3 2 -2.7 1 -0.3 2 -2.6 1 0.1 2 -2.5 1 0.5 1 -1.9 2 0.3zM380.8 125.5l0.7 -0.1 1 0.6 0.3 1.5 -0.3 2.5 -2.1 6.5 -3.9 8.8 -4.9 9.2 -5.1 8.3 -6 8.6 -6 7.6 -7 8.2 -9 9.6 -9 9.1 -9 8.5 -19 16.3 -21 15.8 -19 12.9 -21.6 13.1 -29.4 16.2 -9 4.2 -9 3.6 -9 3 -9 2.4 -9 1.7 -8 0.8 -8 0.2 -7 -0.6 -5.2 -1.5 -1.8 -1 -1 -1 -0.5 -1 0.1 -2 2.1 -3 5.2 -4 8.2 -5 7.4 -4 6.9 -3 18.6 -5.5 5 -1.8 5 -2.6 6.3 -4.1 3.6 -2 14 -6 9.8 -6 11.3 -5.6 8.4 -5.4 9 -5 15.5 -10 13 -9 21.1 -16.1 18 -15.5 7.8 -7.4 10.2 -10.3 20 -22.3 9 -9.4 7 -6.4 2 -1.5z"/>
<path fill="#86cb55" d="M380.2 52.5l0.3 -0.6 2 1.5 1 -1.3 0 3.5 -1 1.2 -2 7.8 -1 0 -1 4.3 -2 2.4 -1 3.8 -1 0.4 -1 1.6 -1 3.4 -1 0.3 -1 1.3 -1 3.3 -2 1.2 -1 3.1 -1 1.6 -1 -0.2 -2 4.8 -2 0.7 -2 4.7 -2 0.4 -2 4.6 -1 0.6 -1 -0.1 -1 1.3 -1 2.5 -1 1.5 -2 0.2 -2 4.2 -1 1.2 -2 0.2 -3 5.3 -2 0.2 -1 0.8 -2 3.9 -1 1.2 -2 0.2 -1 0.7 -3 5.1 -1 0.5 -2 0.2 -1 1 -3 4.9 -1 0.5 -2 0.2 -1 0.7 -3 4.8 -1 0.9 -3 0.6 -1 0.6 -4 5.7 -1 0.7 -3 0.4 -1 0.6 -5 6.3 -1 0.5 -3 0.5 -1 0.5 -1.2 1.1 -3.8 4.9 -1 0.8 -1 0.5 -3 0.4 -2 1 -4 4.8 -2 1.9 -2 0.8 -3 0.4 -2 1 -2 1.9 -3 3.5 -2 1.7 -2 0.8 -4 0.7 -2 0.9 -2 1.7 -4 4.2 -2 1.6 -2 0.9 -5 0.9 -2 0.8 -3 2.1 -5 4.8 -3 1.9 -7 1.5 -3 1.1 -3 2 -6 5.2 -3 1.8 -3 1 -7 1.3 -3 1.2 -3.3 2 -6.7 5.2 -4 2.3 -3 0.9 -8 1.3 -4 1.1 -4 1.8 -10 5.8 -3 1.2 -3 0.6 -4 0 -5 -1.2 -4.2 -2 -1.8 -1.3 -1.4 -1.7 -0.8 -2 0 -2 0.7 -2 1.1 -2 2.3 -3 3.1 -3 7 -5.1 8 -4 16 -5.8 15 -7.4 13 -5.3 14 -7.5 12 -5.4 10 -6.2 10 -4.8 9 -6 9 -4.7 7 -5.1 8 -4.5 6 -4.8 7 -4.2 6 -5 5 -3 5 -4.6 5 -3.2 5 -4.8 4 -2.6 4 -4.2 4 -2.8 4 -4.3 4 -3 3 -3.6 3 -2.2 3 -3.7 3 -2.4 3 -3.8 3 -2.5 2 -2.8 3 -2.7 2 -3 3 -2.8 2 -3 2 -1.6 2 -3 2 -1.5 2 -3 2 -1.4 2 -2.7 1 -0.4 2 -2.9 1 -0.2 2 -2.8 1 -0.2 2 -2.5 1 0.1 2 -2.4 1 0.7zM378.7 127.5l1.8 -0.6 1 0.5 0.3 1.1 -0.1 2 -1.3 5 -3.9 9 -5 9.6 -5 8.1 -6 8.7 -6 7.6 -7 8.1 -9 9.7 -9 9 -9 8.5 -19 16.2 -21 15.8 -19 12.8 -21.4 12.9 -30.6 16.7 -8 3.8 -8.7 3.5 -9 3 -8.3 2.2 -9 1.8 -8 0.8 -8 0.2 -6 -0.6 -4.8 -1.4 -1.6 -1 -0.9 -1 -0.4 -1 0.3 -2 2.4 -3 5.3 -4 8.3 -5 6.4 -3.4 6.3 -2.6 17.7 -5.3 5 -1.8 5 -2.6 8.3 -5.3 14.7 -6.4 10.8 -6.6 10.2 -5 9 -5.8 9 -5 15 -9.7 13 -9 11.4 -8.5 10.2 -8 18.4 -16 10 -9.6 8 -8.2 26 -28.6 7 -6.6z"/>
<path fill="#94ca4a" d="M380.2 53.5l0.3 -0.6 0.5 0.6 0.8 2 -0.1 2 -0.9 5 -0.3 1.3 -1 -0.2 -1 4.7 -2 2.4 -1 3.9 -1 0.4 -1 1.6 -1 3.5 -1 0.2 -1 1.4 -1 3.3 -2 1.2 -1 3.1 -1 1.6 -1 -0.1 -2 4.8 -2 0.6 -2 4.8 -2 0.4 -2 4.6 -1 0.6 -1 -0.2 -1 1.4 -1 2.5 -1 1.5 -2 0.2 -2 4.1 -1 1.2 -2 0.2 -3 5.4 -2 0.2 -1 0.8 -2 3.9 -1 1.2 -2 0.2 -1 0.7 -3 5.1 -1 0.5 -2 0.2 -1 1 -3 4.9 -1 0.5 -2 0.2 -1 0.6 -3 4.8 -1 1 -3 0.6 -1 0.6 -4 5.6 -1 0.7 -3 0.5 -1 0.6 -5 6.2 -5 1.5 -1.5 1.5 -3.5 4.5 -1 0.8 -1 0.5 -3 0.5 -2 1 -4 4.7 -2 1.9 -2 0.8 -3 0.5 -2 0.9 -2 1.9 -3 3.5 -2 1.7 -2 0.8 -4 0.8 -2 0.9 -8 7.4 -2 0.9 -5 1 -2 0.7 -3 2.1 -5 4.8 -3 1.9 -7 1.5 -3 1.1 -3 2 -6 5.1 -3 1.9 -3 0.9 -7 1.4 -3 1.1 -3 1.8 -8 6.1 -3 1.6 -3 1 -8 1.3 -4 1.1 -4 1.8 -10 5.6 -3 1.2 -3 0.6 -4 0 -5 -1.3 -4 -2 -2.3 -2.3 -0.9 -2 0 -2 0.6 -2 1.1 -2 2.3 -3 2.2 -2.2 3.4 -2.8 3.6 -2.5 6.8 -3.5 16.2 -5.9 16 -7.8 13 -5.3 14 -7.6 12 -5.4 10 -6.1 10 -4.8 10 -6.6 7 -3.5 8 -5.8 8 -4.4 6 -4.8 7 -4.2 6 -5.1 5 -2.9 5 -4.6 5 -3.2 5 -4.8 4 -2.6 4 -4.2 4 -2.8 4 -4.4 4 -2.9 3 -3.7 3 -2.1 3 -3.7 3 -2.4 3 -3.8 3 -2.5 2 -2.9 3 -2.6 2 -3 3 -2.8 2 -3 2 -1.6 2 -3 2 -1.5 2 -3 2 -1.4 1 -1.7 1 -1 1 -0.4 2 -2.8 1 -0.3 2 -2.7 1 -0.1 1 -1 1 -1.6 1 0.3 2 -2.5 1 1.1zM379.3 128.5l1.2 0.4 0.3 0.6 0 2 -0.4 2 -2 6 -3.9 8.4 -4.8 8.6 -5 8 -5.2 7.2 -6 7.5 -7 8 -9 9.6 -17 16.4 -19 16.2 -20 15 -20 13.4 -21.1 12.7 -31.5 17 -14.4 6.4 -9 3.1 -8.9 2.5 -8.1 1.6 -8 1 -8 0.3 -6 -0.7 -4.2 -1.2 -1.5 -1 -0.8 -1 -0.3 -1 0.5 -2 2.6 -3 5.5 -4 6.5 -4 5.7 -3 5 -2.2 18 -5.5 6 -2.2 4.2 -2.1 9.5 -6 14.3 -6.3 9.2 -5.7 11.8 -6 8 -5.1 9 -5.1 16 -10.4 12.1 -8.4 11.9 -8.9 10 -7.9 17 -14.7 8 -7.6 10 -10.1 20 -22.2 8 -8.3 7 -6.3 2 -1.3z"/>
<path fill="#a2c83f" d="M380.4 54.5l0.1 -0.3 0.6 1.3 0.1 2 -0.7 5.3 -1 -0.6 -1 5.4 -2 2.4 -1 4.1 -1 0.4 -1 1.6 -1 3.5 -1 0.3 -1 1.3 -1 3.4 -2 1.2 -1 3.1 -1 1.6 -1 -0.1 -2 4.8 -2 0.7 -2 4.7 -2 0.5 -2 4.5 -1 0.6 -1 -0.1 -1 1.3 -1 2.5 -1 1.5 -2 0.3 -2 4.1 -1 1.2 -2 0.2 -3 5.3 -2 0.3 -1 0.7 -2 3.9 -1 1.2 -2 0.2 -1 0.7 -3 5.1 -1 0.5 -2 0.3 -1 0.9 -3 4.9 -1 0.5 -2 0.2 -1 0.7 -3 4.7 -1 1 -3 0.6 -1 0.6 -4 5.6 -1 0.7 -3 0.5 -1 0.6 -5 6.3 -5 1.5 -1.8 1.8 -3.2 4.2 -1 0.8 -1 0.4 -3 0.5 -2 1 -6 6.6 -2 0.8 -3 0.5 -2 1 -2 1.8 -3 3.5 -2 1.7 -2 0.8 -4 0.8 -2 0.9 -8 7.4 -2 0.9 -5 1 -2 0.7 -3 2.1 -5 4.7 -3 1.9 -2 0.7 -5 0.9 -3 1.1 -3 2 -6 5.1 -3 1.8 -3 1 -7 1.4 -3 1.1 -3.2 1.9 -7.8 5.9 -3 1.6 -3 1 -8 1.3 -4 1.1 -4 1.8 -10 5.6 -5 1.6 -4 0.2 -5 -1 -4 -2.1 -2.2 -2 -0.9 -2 -0.2 -2 0.6 -2 1 -2 2.4 -3 2.3 -2.3 3.3 -2.7 3.7 -2.5 7 -3.4 12 -4.2 5 -2.1 14 -6.9 14 -5.8 13 -7.1 11 -4.8 11 -6.7 10 -4.8 10 -6.6 7 -3.5 8 -5.8 8 -4.4 6 -4.9 7 -4.1 5 -4.4 6 -3.6 5 -4.7 5 -3.1 5 -4.9 4 -2.5 4 -4.2 4 -2.8 4 -4.4 4 -2.9 3 -3.7 3 -2.1 3 -3.8 3 -2.3 3 -3.9 3 -2.4 2 -2.9 3 -2.6 2 -3 3 -2.8 2 -3.1 2 -1.5 2 -3.1 2 -1.4 2 -3 2 -1.3 1 -1.8 1 -1 1 -0.3 2 -2.9 1 -0.2 2 -2.7 1 -0.1 1 -0.9 1 -1.6 1 0.4 2 -2.4 1 1.8zM377.1 130.5l1.4 -0.5 1 0.4 0.4 2.1 -1.4 5.5 -3 7.1 -4 7.7 -5 8.4 -6 8.7 -6 7.6 -7 8.1 -8 8.6 -17 16.6 -18 15.5 -19 14.5 -11 7.7 -12.3 8 -21.7 13 -31.7 17 -12.3 5.6 -8 3 -8 2.4 -8.4 2 -7.6 1.2 -8 0.5 -6 -0.4 -5 -1.2 -2 -1.4 -0.7 -1.7 0.2 -1 2.1 -3 5.2 -4 6.4 -4 5.7 -3 4.7 -2 17.4 -5.4 6 -2.2 4 -2 10.2 -6.4 13.8 -6.2 9.4 -5.8 11.6 -5.9 7.8 -5.1 9.2 -5.2 15 -9.8 13 -9.1 21 -16.1 18 -15.7 17.4 -17.1 25.6 -28 6 -5.7z"/>
<path fill="#b0c636" d="M378.1 56.5l0.4 -0.5 0.8 2.5 -0.2 5 -0.6 3.3 -2 2.4 -1 4.3 -1 0.4 -1 1.7 -1 3.5 -1 0.3 -1 1.3 -1 3.5 -2 1.2 -1 3.1 -1 1.7 -1 -0.2 -2 4.8 -2 0.7 -2 4.8 -2 0.4 -2 4.6 -1 0.6 -1 -0.1 -1 1.3 -1 2.5 -1 1.5 -2 0.2 -2 4.1 -1 1.2 -2 0.3 -3 5.3 -2 0.2 -1 0.8 -2 3.9 -1 1.2 -2 0.2 -1 0.7 -3 5.1 -1 0.5 -2 0.2 -1 1 -3 4.8 -1 0.6 -2 0.2 -1 0.7 -3 4.6 -1 1.1 -3 0.6 -1 0.6 -4 5.5 -1 0.8 -3 0.5 -1 0.6 -5 6.2 -1 0.5 -3 0.5 -1 0.5 -1.3 1.2 -3.7 4.8 -1 0.8 -1 0.4 -3 0.5 -2 1 -6 6.6 -2 0.8 -3 0.5 -2 1 -7 7 -2 0.8 -4 0.8 -2 0.9 -8 7.3 -2 1 -6 1.3 -2 1 -7 6.2 -3 1.9 -2 0.7 -5 0.9 -3 1.1 -3 1.9 -6 5.1 -3 1.8 -3 1.1 -7 1.3 -3 1.2 -3 1.7 -8 6 -3 1.6 -3 1 -8 1.4 -4 1.1 -4 1.7 -10 5.6 -5 1.5 -4 0.2 -4 -0.8 -3.7 -1.7 -2.3 -2 -1.1 -2 -0.2 -2 0.5 -2 1 -2 1.5 -2 2.8 -3 6.5 -4.8 7 -3.5 16 -5.8 15 -7.5 13 -5.2 14 -7.7 12 -5.3 10 -6.2 10 -4.7 9 -6.1 8 -4 8 -5.9 8 -4.3 6 -4.9 7 -4.1 6 -5.1 5 -2.9 5 -4.7 5 -3.1 5 -4.9 4 -2.5 4 -4.3 4 -2.7 4 -4.4 4 -3 3 -3.6 3 -2.1 3 -3.8 3 -2.3 3 -3.9 3 -2.4 2 -2.9 3 -2.6 2 -3.1 3 -2.7 2 -3.1 2 -1.5 2 -3.1 2 -1.3 2 -3.1 2 -1.3 1 -1.8 1 -1 1 -0.2 2 -2.9 1 -0.1 2 -2.8 1 0 1 -0.9 1 -1.6 1 0.6zM380.3 56.5l0.2 -0.7 0.3 2.7 -0.3 2.9 -0.6 -0.9 -0.1 -1zM375.4 132.5l2.1 -0.9 1 0.4 0.4 1.5 -0.4 2.7 -1 3.2 -3 7 -4 7.6 -5 8.1 -5 7.2 -6 7.7 -14 15.6 -17 16.7 -18 15.5 -19 14.5 -12 8.4 -12 7.8 -21.8 13 -32 17 -11.2 5.2 -8 3.1 -8.9 2.7 -8.1 1.9 -7 1.1 -7 0.4 -6 -0.3 -4 -1.1 -2 -1.5 -0.4 -1.5 0.2 -1 1.3 -2 4.8 -4 6.2 -4 5.8 -3 4.8 -2 17.3 -5.4 5 -1.9 4 -2 9 -5.8 14 -6.4 10.7 -6.5 10.3 -5.3 8.9 -5.7 8.1 -4.6 15 -9.8 13 -9.1 21 -16.1 18 -15.7 17 -16.7 25 -27.4 6 -5.7z"/>
<path fill="#bdc32e" d="M378.3 57.5l0.2 -0.3 0.6 3.3 -0.6 5.3 -2 2.5 -1 4.6 -1 0.3 -1 1.8 -1 3.7 -1 0.2 -1 1.4 -1 3.4 -2 1.2 -1 3.2 -1 1.7 -1 -0.2 -2 4.9 -2 0.6 -2 4.8 -2 0.5 -2 4.5 -1 0.7 -1 -0.2 -1 1.3 -1 2.5 -1 1.6 -2 0.2 -2 4.1 -1 1.2 -2 0.2 -3 5.3 -2 0.3 -1 0.7 -2 3.9 -1 1.2 -2 0.2 -1 0.7 -3 5.1 -1 0.5 -2 0.3 -1 0.9 -3 4.9 -1 0.5 -2 0.2 -1 0.7 -3 4.7 -1 1 -3 0.6 -1 0.6 -4 5.6 -1 0.7 -3 0.5 -1 0.6 -5 6.2 -1 0.5 -3 0.5 -1 0.5 -1.6 1.6 -3.4 4.4 -1 0.8 -1 0.4 -3 0.6 -2 1 -6 6.5 -2 0.8 -3 0.6 -2 0.9 -7 7 -2 0.8 -4 0.8 -2 0.9 -8 7.3 -2 0.9 -5 1.1 -2 0.7 -3 2.1 -5 4.6 -3 1.9 -2 0.7 -5 1 -3 1.1 -3 1.9 -6 5 -3 1.9 -3 1 -7 1.4 -4 1.7 -9 6.4 -4 2.3 -3 1 -8 1.5 -4 1 -4 1.8 -10 5.4 -5 1.6 -4 0.1 -3 -0.5 -3.3 -1.4 -2.7 -2.1 -1.1 -1.9 -0.3 -2 0.5 -2 1 -2 1.4 -2 2.9 -3 3.6 -2.9 3 -1.9 7 -3.4 15 -5.3 15 -7.5 14 -5.7 13 -7.2 11 -4.8 11 -6.7 10 -4.7 9 -6.1 8 -4 8 -5.9 8 -4.4 6 -4.9 7 -4 5 -4.4 6 -3.6 5 -4.7 5 -3.1 5 -5 4 -2.4 4 -4.3 4 -2.7 4 -4.5 4 -2.9 3 -3.7 3 -2 3 -3.8 3 -2.3 3 -3.9 3 -2.4 2 -3 3 -2.5 2 -3.1 3 -2.7 2 -3.1 2 -1.5 2 -3.1 2 -1.3 2 -3.1 2 -1.3 1 -1.7 1 -1 1 -0.2 2 -3 1 0 2 -2.8 1 0.2 0.8 -0.7 1.2 -1.9 1 1zM375.5 133.5l1 -0.3 1 0.3 0.3 1 -0.1 2 -1.2 4.2 -3 6.9 -4 7.5 -5 8 -5 7.1 -6 7.5 -7 8 -8 8.4 -16 15.5 -17 14.5 -19 14.5 -12.9 8.9 -11.1 7.1 -21.8 12.9 -34.2 18 -9 4.2 -7.4 2.8 -8.6 2.7 -7 1.7 -7 1.1 -7 0.5 -5 -0.2 -4 -1.1 -1.1 -0.7 -0.7 -1 -0.2 -1 0.3 -1 1.4 -2 3.4 -3 6.1 -4 5.7 -3 5 -2 15.1 -4.7 6 -2.2 5 -2.7 8.3 -5.4 14.7 -6.8 10 -6.2 10 -5.2 9.1 -5.8 7.9 -4.6 15 -9.8 13 -9.2 21 -16.3 17 -14.8 17 -16.8 25 -27.2 6 -5.6z"/>
<path fill="#cac129" d="M375.5 59.5l1 1.5 2 -2.3 0.2 2.8 -0.2 3 -2 2.6 -1 5.1 -1 0.4 -1 1.7 -1 3.8 -1 0.3 -1 1.3 -1 3.6 -2 1.2 -1 3.2 -1 1.7 -1 -0.2 -2 4.9 -2 0.7 -2 4.8 -2 0.4 -2 4.6 -1 0.6 -1 -0.1 -1 1.3 -1 2.5 -1 1.5 -2 0.2 -2 4.1 -1 1.2 -2 0.3 -3 5.3 -2 0.2 -1 0.8 -2 3.8 -1 1.3 -2 0.2 -1 0.7 -3 5 -1 0.6 -2 0.2 -1 1 -3 4.8 -1 0.6 -2 0.1 -1 0.7 -3 4.7 -1 1 -3 0.6 -1 0.6 -4 5.6 -1 0.7 -3 0.5 -1 0.6 -5 6.2 -1 0.5 -3 0.6 -1 0.5 -1.1 0.9 -3.9 5 -1 0.8 -1 0.5 -3 0.5 -2 1 -6 6.5 -2 0.8 -3 0.6 -2 0.9 -7 6.9 -2 0.9 -4 0.8 -2 0.9 -8 7.3 -2 0.9 -6 1.4 -2 1 -7 6.1 -3 1.9 -2 0.7 -5 1 -3 1 -3 2 -6 5 -3 1.8 -3 1 -7 1.4 -4 1.7 -9 6.4 -4 2.3 -4 1.3 -7 1.2 -4 1.1 -4 1.7 -10 5.4 -5 1.5 -4 0.1 -3 -0.6 -3.5 -1.7 -2 -2 -0.5 -1 -0.4 -2 0.4 -2 0.9 -2 1.5 -2 2.9 -3 5.7 -4.2 7 -3.4 14 -4.9 16 -8 13 -5.1 14 -7.7 11 -4.8 11 -6.8 10 -4.6 9 -6.2 8 -3.9 8 -5.9 8 -4.4 6 -4.9 7 -4 5 -4.5 6 -3.5 5 -4.8 5 -3 5 -5 4 -2.4 4 -4.4 4 -2.6 4 -4.5 4 -2.9 3 -3.7 3 -2 3 -3.9 3 -2.2 3 -4 3 -2.3 2 -3 3 -2.5 2 -3.1 3 -2.7 2 -3.2 2 -1.4 2 -3.1 2 -1.3 2 -3.1 2 -1.2 1 -1.8 1 -1 1 -0.2 2 -2.9 1 0 2 -2.8 1 0.4 1 -0.8zM373.8 135.5l1.7 -0.6 1 0.3 0.2 2.3 -1.2 4.5 -3 6.8 -4 7.3 -5 7.9 -5 6.9 -6 7.4 -14 15.3 -16 15.3 -16 13.8 -18 13.7 -16.1 11.1 -20.9 12.9 -18 10.1 -15 7.4 -14.4 7.6 -6.5 3 -7.7 3 -6.4 2 -7.9 2 -5.8 1 -6.3 0.5 -5 -0.2 -3 -0.7 -1.2 -0.6 -0.8 -0.9 -0.2 -1.1 0.2 -1 1.4 -2 3.4 -3 4.6 -3 8.2 -4 17.4 -5.6 5 -1.9 4 -2 10 -6.5 14 -6.5 8.6 -5.5 11.4 -6 7.6 -5 9.4 -5.5 15 -10 12 -8.5 21 -16.3 17 -14.8 16 -15.7 25 -27.3 6 -5.5z"/>
<path fill="#d5be28" d="M375.5 60.5l0.9 2 0.1 2 -1 7 -1 0.2 -1 1.9 -1 4 -1 0.2 -1 1.4 -1 3.6 -2 1.2 -1 3.3 -1 1.7 -1 -0.2 -2 4.9 -1 0.6 -1 0.1 -2 4.8 -2 0.5 -2 4.5 -1 0.7 -1 -0.2 -1 1.3 -1 2.5 -1 1.5 -2 0.3 -2 4 -1 1.3 -2 0.2 -3 5.3 -1 0.3 -1 0 -1 0.7 -2 3.9 -1 1.2 -2 0.2 -1 0.7 -3 5.1 -1 0.5 -2 0.2 -1 1 -3 4.8 -1 0.6 -2 0.2 -1 0.6 -3 4.7 -1 1 -3 0.7 -1 0.5 -4 5.6 -1 0.7 -3 0.6 -1 0.5 -5 6.2 -1 0.6 -3 0.5 -1 0.4 -1.4 1.4 -3.6 4.6 -1 0.8 -1 0.5 -3 0.5 -2 1 -6 6.5 -2 0.8 -3 0.6 -2 0.9 -7 6.9 -2 0.9 -4 0.8 -2 0.9 -8 7.2 -2 1 -6 1.3 -2 1 -7 6.1 -3 1.9 -2 0.8 -6 1.2 -3 1.3 -8 6.4 -3 1.8 -3 1.1 -7 1.4 -4 1.6 -9 6.4 -4 2.3 -3 1.1 -9 1.6 -4 1.2 -12 6.3 -5 1.7 -4 0.3 -3 -0.4 -3.1 -1.3 -2.3 -2 -0.6 -1 -0.4 -2 0.3 -2 0.9 -2 1.4 -2 3 -3 5.6 -4 6.2 -3 15 -5.3 15 -7.6 14 -5.6 13 -7.3 11 -4.7 11 -6.8 10 -4.6 9 -6.2 8 -3.9 8 -6 8 -4.3 6 -4.9 7 -4 5 -4.5 6 -3.5 5 -4.8 5 -3 5 -5 4 -2.4 4 -4.4 4 -2.6 4 -4.5 4 -2.9 3 -3.7 3 -2 3 -3.9 3 -2.2 3 -4 3 -2.3 2 -3 3 -2.5 2 -3.2 3 -2.6 2 -3.2 2 -1.4 2 -3.2 2 -1.2 2 -3.1 2 -1.1 1 -1.9 1 -0.9 1 -0.1 2 -3 1 0.1 1 -1 1 -1.8 1 0.5 1 -0.7zM377.4 62.5l0.1 1.1 -0.2 -0.1zM372.2 137.5l2.3 -1 1 0.6 0.2 1.4 -1 4 -2.2 5.4 -4 7.5 -4 6.5 -5 7.2 -6 7.5 -13 14.3 -16 15.6 -16 13.8 -18.4 14.2 -17.6 12.1 -19.3 11.9 -19.8 11 -17.9 8.6 -16.1 8.4 -6.9 2.9 -6 2.1 -12.2 3 -5.8 0.7 -5 0.2 -4 -0.7 -1.8 -1.2 -0.4 -1 0.2 -1 1.3 -2 2.1 -2 4.4 -3 3.7 -2 4.6 -2 16.9 -5.4 7 -3 10 -6.6 14 -6.7 10.1 -6.3 10.9 -5.9 7.8 -5.1 9.2 -5.5 14 -9.3 12 -8.5 12 -9.1 10 -8.1 17 -14.9 16 -15.9 23 -25.1 5 -4.7z"/>
<path fill="#e0bc2a" d="M375.5 61.5l0.7 3 -0.7 6 -1 0.2 -1 2 -1 4.3 -1 0.1 -1 1.5 -1 3.7 -2 1.2 -1 3.3 -1 1.7 -1 -0.1 -2 4.9 -1 0.6 -1 0.1 -2 4.8 -2 0.5 -2 4.5 -1 0.7 -1 -0.2 -1 1.3 -1 2.5 -1 1.6 -2 0.2 -2 4.1 -1 1.2 -2 0.2 -3 5.3 -1 0.4 -1 -0.1 -1 0.7 -2 3.9 -1 1.2 -2 0.2 -1 0.7 -3 5.1 -1 0.5 -2 0.2 -1 1 -3 4.8 -1 0.6 -2 0.2 -1 0.6 -3 4.7 -1 1 -1 0.5 -2 0.2 -1 0.5 -4 5.6 -1 0.7 -3 0.6 -1 0.5 -5 6.2 -1 0.6 -3 0.5 -1 0.4 -6 6.8 -1 0.5 -3 0.5 -2 1 -6 6.4 -2 0.9 -3 0.5 -2 1 -7 6.9 -2 0.9 -4 0.8 -2 0.8 -8 7.3 -2 1 -6 1.3 -2 1 -7 6.1 -3 1.9 -2 0.7 -5 1 -3 1 -3 1.9 -6 5 -3 1.8 -3 1.1 -7 1.4 -4 1.6 -9.4 6.7 -3.6 2 -4 1.3 -7 1.2 -4 1.1 -4 1.7 -9 4.8 -5 1.7 -3 0.3 -3 -0.3 -3 -1.1 -2.2 -1.7 -0.8 -1.3 -0.4 -1.7 0.2 -2 0.9 -2 3.3 -4 3 -2.5 3 -2 6 -2.9 15 -5.3 15 -7.6 13 -5.1 14 -7.8 11 -4.6 11 -6.9 10 -4.6 9 -6.2 8 -3.9 8 -6 7 -3.6 7 -5.7 7 -3.9 5 -4.5 6 -3.5 5 -4.8 5 -3 5 -5.1 4 -2.3 4 -4.4 4 -2.6 4 -4.6 4 -2.7 3 -3.9 3 -1.9 3 -3.9 3 -2.2 3 -4 3 -2.3 2 -3.1 3 -2.4 2 -3.2 3 -2.6 2 -3.2 2 -1.3 2 -3.3 2 -1.1 2 -3.2 2 -1.1 1 -1.8 1 -1 1 0 2 -3 1 0.3 1 -1 1 -1.9 1 0.8 1 -0.5zM372.4 138.5l1.1 -0.2 0.6 0.2 0.4 0.6 0 1.4 -1.1 4 -2.9 6.5 -4 7.1 -4 6.2 -5 6.8 -6 7.3 -14 15 -15 14.3 -15 12.7 -17 13 -19.2 13.1 -19.8 12 -20.3 11 -16.7 7.7 -11.8 6.3 -6.2 3 -11 4 -11 2.5 -5 0.5 -4 -0.1 -2.8 -0.9 -0.8 -1 -0.1 -1 0.4 -1 1.7 -2 2.5 -2 3.3 -2 6.8 -3 15 -4.7 5 -1.9 4 -2.2 8.9 -6.2 15.1 -7.4 6.9 -4.6 12.1 -6.6 8.1 -5.4 7.9 -4.7 15 -10.1 12 -8.6 21 -16.5 17 -14.9 15 -14.8 23 -25.1 6 -5.6z"/>
<path fill="#eaba31" d="M375.2 63.5l0.3 -0.7 0.3 2.7 -0.3 4 -1 -0.4 -1 2.5 -1 4.7 -1 0.1 -1 1.5 -1 3.9 -2 1.1 -1 3.5 -1 1.7 -1 -0.2 -2 5 -1 0.6 -1 0 -2 4.9 -2 0.5 -2 4.6 -1 0.6 -1 -0.2 -1 1.3 -1 2.5 -1 1.6 -2 0.2 -2 4.1 -1 1.2 -2 0.2 -3 5.3 -1 0.4 -1 -0.1 -1 0.7 -2 3.9 -1 1.3 -2 0.1 -1 0.7 -3 5.1 -1 0.5 -2 0.2 -1 1 -3 4.8 -1 0.6 -2 0.2 -1 0.6 -3 4.7 -1 1 -1 0.5 -2 0.2 -1 0.5 -4 5.6 -1 0.7 -3 0.5 -1 0.6 -5 6.2 -1 0.6 -3 0.4 -1 0.5 -6 6.8 -1 0.5 -3 0.4 -2 1 -6 6.5 -2 0.9 -3 0.5 -2 0.9 -7 6.9 -2 1 -4 0.7 -2 0.9 -8 7.2 -2 1 -5 1 -3 1.3 -7 6.1 -3 1.9 -2 0.7 -6 1.3 -3 1.3 -8 6.3 -3 1.8 -3 1.1 -7 1.4 -4 1.6 -9 6.4 -4 2.3 -4 1.3 -8 1.4 -4 1.2 -12 6.1 -5 1.7 -3 0.3 -3.3 -0.5 -2.7 -1.3 -1.7 -1.7 -0.5 -1 -0.2 -2 0.5 -2 1.2 -2 3.7 -4 4.3 -3 6.3 -3 14.4 -5.1 15 -7.6 13 -5 14 -7.9 11 -4.6 11 -6.9 10 -4.6 9 -6.3 8 -3.8 8 -6 8 -4.2 6 -5.1 6 -3.1 6 -5.4 6 -3.4 5 -4.9 5 -2.9 5 -5.1 4 -2.3 4 -4.4 4 -2.6 4 -4.6 4 -2.7 3 -3.9 3 -1.9 3 -4 3 -2 3 -4.2 3 -2.2 2 -3.1 1 -1 2 -1.4 2 -3.2 3 -2.6 2 -3.3 2 -1.2 2 -3.3 2 -1.1 2 -3.2 2 -1 1 -1.9 1 -0.9 1 0.1 2 -3.1 1 0.5 1 -1 1 -2 1 1.4 1 -0.1zM370.9 140.5l1.6 -0.5 0.6 0.5 0.2 2 -0.9 3 -2.9 6.5 -3 5.4 -4 6.3 -5 6.8 -5 6.2 -13 14.1 -14 13.5 -14.1 12.2 -16.7 13 -11.2 8 -12.1 8 -20 12 -20.7 11 -19.2 8.4 -14.1 7.6 -9.9 4 -7.8 2 -7.2 0.9 -3 -0.2 -2 -0.7 -0.6 -1 0.1 -1 0.6 -1 3.6 -3 6 -3 17.3 -5.5 7 -3.1 7 -5.4 3.1 -2 11.9 -5.7 9.6 -6.3 11.4 -6.3 6.9 -4.7 10.1 -6.2 14 -9.5 12 -8.7 20 -15.8 17 -15 15 -14.8 23 -25 5 -4.6z"/>
<path fill="#f3ba39" d="M372.3 65.5l0.2 -0.4 0.7 1.4 0.3 2 -1 7.1 -1 0 -1 1.4 -1 4.2 -2 1.1 -1 3.5 -1 1.8 -1 -0.2 -2 5.1 -1 0.5 -1 0.1 -2 4.9 -2 0.4 -2 4.7 -1 0.6 -1 -0.2 -1 1.3 -1 2.6 -1 1.5 -2 0.2 -2 4.1 -1 1.3 -2 0.1 -3 5.3 -1 0.4 -1 -0.1 -1 0.7 -2 3.9 -1 1.3 -2 0.1 -1 0.7 -3 5.1 -1 0.6 -2 0.1 -1 1 -3 4.9 -1 0.5 -2 0.1 -1 0.7 -3 4.7 -1 1 -1 0.5 -2 0.1 -1 0.6 -4 5.6 -1 0.7 -3 0.5 -1 0.5 -5 6.3 -1 0.5 -3 0.5 -1 0.5 -6 6.7 -1 0.5 -3 0.5 -2 1 -5 5.6 -1.7 1.3 -4.3 1 -2 0.9 -7 6.9 -2 0.9 -4 0.8 -2 0.8 -2 1.6 -4 4.1 -2.7 2 -2.3 0.8 -5 1.1 -2 0.9 -7 6.1 -3 2 -2 0.7 -6 1.2 -2 0.8 -3 1.8 -6 5 -3 1.9 -3 1 -7 1.4 -4 1.6 -9.5 6.7 -3.5 2 -4 1.3 -7 1.2 -4 1 -4 1.7 -9 4.8 -4 1.4 -3 0.4 -3 -0.2 -3 -1.3 -1.5 -1.3 -0.6 -1 -0.3 -2 0.9 -3 1.4 -2 2 -2 5.1 -3.7 6 -2.8 14 -5 14.6 -7.5 14.4 -5.6 13 -7.4 11 -4.6 11 -7 10 -4.4 9 -6.4 8 -3.7 8 -6.1 8 -4.2 6 -5.1 6 -3.1 6 -5.4 6 -3.4 5 -4.9 5 -2.8 5 -5.2 4 -2.3 4 -4.5 4 -2.4 4 -4.7 4 -2.7 3 -3.9 3 -1.9 3 -4 1 -0.9 2 -1.1 3 -4.2 3 -2.1 2 -3.2 1 -1.1 2 -1.2 2 -3.3 3 -2.6 2 -3.3 2 -1.2 2 -3.3 2 -1 2 -3.3 2 -0.8 1 -2 1 -0.9 1 0.2 2 -3.1 1 0.7 1 -0.9zM375.4 65.5l0.1 -0.6 0 2.7zM369.4 142.5l1.1 -0.5 1 -0.1 0.4 0.6 0.2 1 -0.7 3 -2.9 6.5 -3 5.3 -4 6.2 -5 6.7 -5 6 -12 12.9 -14 13.5 -15 12.9 -14.2 11 -12.8 9.1 -17 10.9 -17.3 10 -21.4 11 -7.3 3 -14 4.7 -9.5 6.3 -3.9 2 -5.1 2 -4.5 1.2 -5 0.9 -3.7 -0.1 -1.6 -1 0.2 -1 0.8 -1 1.2 -1 3.7 -2 5.5 -2 15.9 -4.3 3 -1.2 2 -1.6 4.5 -4.9 2.6 -2 12.9 -6.5 9.6 -6.5 10.4 -5.9 7.4 -5.1 10.6 -6.6 24 -17.1 21 -16.6 16 -14.2 15 -14.9 22 -23.9 5 -4.6z"/>
<path fill="#fabc3d" d="M372.3 66.5l0.2 -0.4 0.5 1.4 0.1 2 -0.6 5.2 -1 -0.2 -1 1.5 -1 4.6 -2 1 -1 3.7 -1 1.8 -1 -0.3 -2 5.2 -1 0.6 -1 0 -2 5 -2 0.4 -2 4.7 -1 0.6 -1 -0.2 -1 1.3 -1 2.5 -1 1.6 -2 0.1 -2 4.2 -1 1.2 -2 0.1 -3 5.4 -1 0.4 -1 -0.2 -1 0.7 -2 4 -1 1.3 -2 0.1 -1 0.6 -3 5.2 -1 0.5 -2 0.2 -1 0.9 -3 4.9 -1 0.6 -2 0.1 -1 0.7 -3 4.7 -1 1 -1 0.4 -2 0.2 -1 0.5 -4 5.7 -1 0.7 -3 0.5 -1 0.5 -5 6.3 -1 0.5 -3 0.5 -1 0.4 -1 0.9 -4 5.1 -1 0.8 -1 0.5 -3 0.5 -2 0.9 -6 6.5 -2 0.9 -3 0.5 -2 0.9 -7 6.9 -2 1 -4 0.7 -2 0.8 -2 1.6 -5 5 -2 1.3 -2 0.7 -5 1 -2 0.9 -7 6.1 -3 2 -2 0.7 -6 1.2 -3 1.3 -8 6.3 -3 1.8 -3 1.1 -7 1.4 -4 1.6 -9 6.3 -4 2.3 -4 1.4 -8 1.3 -4 1.2 -11.2 5.7 -4.8 1.8 -3 0.3 -3 -0.3 -2 -0.9 -1.9 -1.9 -0.4 -1 0 -2 1.4 -3 2.8 -3 4.1 -3 6 -2.9 14 -4.9 14 -7.3 15 -5.8 13 -7.5 11 -4.5 11 -7.1 10 -4.4 9 -6.4 8 -3.7 8 -6.1 6 -2.9 2 -1.2 6 -5.2 6 -3 6 -5.5 6 -3.3 5 -5 5 -2.8 5 -5.2 4 -2.2 4 -4.6 4 -2.4 4 -4.7 3 -1.7 1 -0.9 3 -4 3 -1.8 3 -4.1 1 -0.9 2 -1.1 3 -4.2 3 -2.1 2 -3.2 1 -1.1 2 -1.2 2 -3.4 3 -2.4 2 -3.4 2 -1.1 2 -3.4 2 -0.9 2 -3.3 1 -0.2 1 -0.6 1 -2 1 -0.9 1 0.4 2 -3.2 1 1.2 1 -0.9zM368 144.5l1.5 -0.7 1 0.3 0.2 0.4 -0.2 2.3 -1.8 4.7 -5.2 9.3 -8 11 -9 10.4 -12 12.2 -12 11.2 -13 10.9 -13 10 -14.4 10 -15.8 10 -15.9 9 -27 13 -3 1 -3.9 0.8 -2 -0.3 -0.5 -0.5 0.3 -1 2.1 -2 11.1 -5.7 8.4 -6.3 9.6 -5.6 9.2 -6.4 8.8 -5.6 25 -18 13 -10.2 15 -12.7 12 -11.2 12 -12.1 20 -21.7 4 -3.8z"/>
<path fill="#fec03b" d="M372.5 67.5l0.3 2 -0.3 4.1 -0.9 -1.1 -0.1 -0.7 -1 2.6 -1 5.5 -2 0.9 -1 3.9 -1 1.9 -1 -0.4 -2 5.4 -1 0.5 -1 0 -2 5.1 -2 0.3 -2 4.7 -1 0.7 -1 -0.3 -1 1.3 -1 2.6 -1 1.6 -2 0.1 -2 4.2 -1 1.2 -2 0.1 -3 5.4 -1 0.4 -1 -0.2 -1 0.7 -2 4 -1 1.2 -2 0.1 -1 0.6 -3 5.3 -1 0.5 -2 0.1 -1 0.9 -3 5 -1 0.6 -2 0 -1 0.7 -3 4.7 -1 1.1 -1 0.4 -2 0.1 -1 0.5 -4 5.7 -1 0.8 -3 0.4 -1 0.5 -5 6.3 -1 0.6 -3 0.4 -1 0.4 -6 6.8 -1 0.5 -4 0.8 -1 0.6 -5 5.7 -2 1.4 -4 0.8 -2 0.9 -7 7 -2 0.9 -4 0.7 -2 0.8 -8 7.3 -2 1 -5 0.9 -3 1.3 -7 6.1 -3 2 -3 0.9 -5 0.9 -2 0.8 -3 1.9 -6 4.9 -3 1.9 -3 1.1 -6 1.1 -3 0.8 -4 2.2 -7 5.2 -4 2.3 -4 1.3 -8 1.3 -4 1.2 -14 6.8 -3 0.8 -3 0 -3 -0.9 -1.6 -1.4 -0.5 -1 -0.1 -2 1.3 -3 2.8 -3 4.1 -2.9 5 -2.3 13 -4.4 16 -8.4 14 -5.2 13 -7.6 11 -4.4 11 -7.2 10 -4.3 9 -6.5 8 -3.6 8 -6.2 6 -2.8 2 -1.2 6 -5.3 6 -3 6 -5.5 6 -3.2 5 -5.1 5 -2.7 5 -5.3 4 -2.1 4 -4.7 4 -2.3 4 -4.8 3 -1.7 1 -0.9 3 -4 3 -1.7 3 -4.2 1 -0.9 2 -1 3 -4.3 3 -2 2 -3.3 1 -1.1 2 -1.1 2 -3.5 3 -2.4 2 -3.4 2 -1 2 -3.5 2 -0.8 2 -3.4 1 0 1 -0.5 1 -2.2 1 -0.8 1 0.7 2 -3.4 1 2.1 1 0.1zM366.7 146.5l1.8 -0.7 0.7 0.7 0.1 1 -0.8 3 -4.1 8 -6.9 10.1 -7 8.5 -9 9.7 -10 9.8 -11 9.9 -10.8 9 -9.2 7.1 -9.7 6.9 -12 8 -13.2 8 -18.8 10 -7.3 2.8 -2 0.3 -1.1 -0.1 -0.1 -1 0.7 -1 2.2 -2 9.3 -5.7 6.8 -5.3 8.2 -5.3 14 -10.1 13 -9.8 20 -16.3 10 -8.9 11 -10.5 10.8 -11.1 17.2 -18.7 4 -3.9z"/>
<path fill="#fec636" d="M369.2 70.5l0.3 -0.4 0.7 2.4 -0.1 3 -0.6 3.6 -1 0.5 -1 0.1 -1 4.4 -1 1.9 -1 -0.5 -2 5.6 -1 0.5 -1 -0.1 -2 5.3 -2 0.2 -2 4.8 -1 0.7 -1 -0.4 -1 1.4 -1 2.6 -1 1.6 -2 0 -2 4.2 -1 1.3 -2 0 -3 5.5 -1 0.3 -1 -0.2 -1 0.7 -2 4 -1 1.3 -2 0 -1 0.7 -3 5.2 -1 0.6 -2 0 -1 0.9 -3 5.1 -1 0.5 -2 0 -1 0.7 -3 4.8 -1 1.1 -1 0.4 -2 0 -1 0.5 -4 5.8 -1 0.7 -3 0.4 -1 0.5 -5 6.4 -1 0.5 -3 0.4 -1 0.4 -1 0.8 -4 5.2 -1 0.9 -1 0.5 -3 0.3 -2 0.9 -5 5.9 -2 1.4 -4 0.7 -2 0.8 -7 7.1 -2 0.9 -4 0.6 -2 0.8 -2 1.6 -4 4.2 -2 1.6 -2 1 -6 1.2 -2 0.9 -7 6.2 -3 1.9 -2 0.8 -6 1 -3 1.3 -8 6.4 -3 1.9 -3 1.1 -6 1 -3 0.8 -4 2.1 -7 5.3 -4 2.3 -4 1.3 -7 1.1 -4 0.9 -4 1.7 -7 3.8 -4 1.7 -3 0.7 -3 0 -2 -0.7 -1.1 -0.8 -0.7 -1 -0.3 -2 1.3 -3 2.8 -3 3 -2.1 5 -2.4 10 -3.2 4 -1.6 14.3 -7.7 14.7 -5.4 13 -7.8 11 -4.2 11 -7.3 10 -4.3 9 -6.6 8 -3.4 8 -6.4 6 -2.7 2 -1.2 6 -5.4 6 -2.8 6 -5.7 6 -3.1 5 -5.2 5 -2.6 5 -5.4 4 -2 4 -4.8 1 -0.8 3 -1.4 4 -4.9 3 -1.6 1 -0.9 3 -4.1 3 -1.6 3 -4.3 1 -0.9 2 -0.9 3 -4.4 3 -1.9 2 -3.4 1 -1 2 -1.1 2 -3.5 1 -1 1 -0.3 1 -1.1 2 -3.5 2 -0.9 2 -3.6 2 -0.6 2 -3.5 1 0.1 1 -0.4 1 -2.3 1 -0.8 1 1.2zM372.4 70.5l0.1 -0.7 0 1.7zM365.5 148.5l1 -0.4 1 0.1 0.2 0.3 -0.2 2 -1 2.8 -4 7.3 -5 7.3 -7 8.5 -7 7.6 -9 8.9 -9 8.4 -10.8 9.2 -10.2 8 -11 8 -9 6 -8.1 5 -14.4 8 -2.5 1.1 -3 0.8 -0.9 -0.9 2.9 -3 8 -5.7 25 -19.2 21 -17.5 10 -9 10 -9.7 9.6 -9.9 16.4 -17.9 4 -3.8z"/>
<path fill="#fdcc32" d="M369.4 71.5l0.1 -0.3 0.4 2.3 -0.4 4.6 -1 0.4 -1 -0.9 -1 5.8 -1 2 -1 -0.7 -2 5.8 -1 0.5 -1 -0.1 -2 5.4 -2 0.1 -2 5 -1 0.6 -1 -0.4 -1 1.3 -1 2.7 -1 1.6 -2 -0.1 -2 4.4 -1 1.3 -2 -0.2 -3 5.6 -1 0.3 -1 -0.2 -1 0.6 -2 4.2 -1 1.3 -2 -0.1 -1 0.6 -3 5.4 -1 0.5 -2 -0.1 -1 1 -3 5.1 -1 0.6 -2 -0.1 -1 0.6 -3 4.9 -1 1.1 -1 0.4 -2 0 -1 0.5 -4 5.8 -1 0.7 -3 0.3 -1 0.5 -5 6.5 -1 0.5 -3 0.3 -1 0.4 -1 0.9 -4 5.2 -1 0.9 -1 0.5 -4 0.6 -1 0.6 -5 5.9 -2 1.4 -4 0.6 -2 0.8 -7 7.2 -2 0.9 -4 0.5 -2 0.8 -2 1.6 -4 4.2 -2 1.7 -2 1 -6 1 -2 0.9 -7 6.3 -3 2 -3 0.9 -5 0.8 -3 1.2 -8 6.5 -3 1.9 -3 1.1 -7 1.1 -2 0.6 -3 1.5 -8 5.9 -4 2.4 -4 1.3 -8 1.2 -4 1 -3 1.3 -8 4.4 -3 1.2 -3 0.6 -2 0 -2 -0.6 -1.3 -1.1 -0.6 -2 0.2 -1 1 -2 2.7 -2.8 3 -2 4.7 -2.2 9.3 -2.9 4 -1.6 14 -7.7 15 -5.4 10 -6.4 3 -1.6 11 -4 11 -7.5 10 -4.1 9 -6.7 8 -3.4 8 -6.5 2 -1.1 4 -1.4 2 -1.3 6 -5.5 6 -2.7 6 -5.8 6 -2.9 5 -5.4 5 -2.4 5 -5.6 4 -1.9 4 -4.8 1 -0.8 3 -1.3 4 -5.1 1 -0.7 2 -0.7 1 -0.9 3 -4.3 3 -1.5 3 -4.4 1 -0.9 2 -0.7 3 -4.6 3 -1.8 2 -3.5 1 -1 2 -1 2 -3.6 1 -0.9 1 -0.3 1 -1 2 -3.6 2 -0.8 2 -3.7 2 -0.5 2 -3.6 1 0.3 1 -0.3 1 -2.5 1 -0.7 0.6 1 0.4 1.7zM365 150.5l0.7 0 0.3 1 -0.5 2 -0.8 2 -3.2 5.7 -4 5.8 -5 6.3 -5 5.6 -15 15.1 -13 11.5 -10 8 -8 6 -10.2 7 -10 6 -5.8 2.9 -1.5 0.1 0.3 -1 2.1 -2 26.1 -21.6 18 -16 17 -16.7 21 -22.7 4 -3.6z"/>
<path fill="#fbd22f" d="M369.3 73.5l0.2 -0.6 0 3.7 -0.7 -1.1zM365.3 75.5l0.2 -0.4 1 -0.6 0.6 3 -0.6 5.1 -1 2.1 -1 -1.1 -2 6.4 -1 0.4 -1 -0.3 -2 5.7 -2 0 -2 5.1 -1 0.6 -1 -0.5 -1 1.3 -1 2.8 -1 1.7 -2 -0.3 -2 4.5 -1 1.3 -2 -0.3 -3 5.8 -1 0.2 -1 -0.3 -1 0.6 -2 4.3 -1 1.3 -2 -0.2 -1 0.6 -3 5.5 -1 0.5 -2 -0.2 -1 1 -3 5.2 -1 0.6 -2 -0.2 -1 0.6 -3 5 -1 1.1 -1 0.4 -2 -0.1 -1 0.4 -4 6 -1 0.7 -3 0.2 -1 0.5 -5 6.6 -1 0.5 -3 0.2 -1 0.4 -1 0.8 -4 5.4 -1 0.9 -1 0.5 -4 0.4 -1 0.6 -5 6 -2 1.4 -4 0.6 -2 0.7 -7 7.3 -2 0.9 -4 0.5 -2 0.7 -8 7.6 -2 1 -5 0.7 -3 1.1 -2 1.6 -5 4.8 -3 2 -2 0.7 -5 0.6 -3 0.9 -3 2 -6 5.2 -3 1.9 -3 1.1 -7 0.9 -3 1 -3 1.8 -7.5 5.7 -3.5 2.1 -4 1.3 -8 0.9 -4 1 -13.1 6.7 -2.9 0.7 -2 0.1 -2 -0.6 -1.2 -1.2 -0.2 -2 0.9 -2 1.8 -2 2.8 -2 4.9 -2.3 11 -3.3 4 -2 9 -5.4 4 -2 4 -1.4 7 -2 3 -1.3 9.6 -6.3 3.4 -1.9 11 -3.9 11 -7.6 3 -1.3 5 -1.6 2 -1 9 -7 8 -3.1 8 -6.7 2 -1.1 5 -1.8 7 -6.4 2 -1.1 4 -1.5 6 -5.9 2 -1.2 3 -1 1 -0.6 5 -5.5 5 -2.3 5 -5.7 4 -1.8 4 -5 1 -0.8 3 -1.1 4 -5.2 1 -0.7 2 -0.6 1 -0.9 3 -4.4 3 -1.4 3 -4.5 1 -0.9 2 -0.6 3 -4.7 3 -1.7 2 -3.6 1 -1 2 -0.9 2 -3.8 1 -0.9 1 -0.1 1 -1 2 -3.8 2 -0.6 2 -3.8 2 -0.2 2 -3.9 1 0.5 1 0.1zM362.3 153.5l1.2 -0.4 0.4 0.4 -0.2 2 -2.2 4.5 -3 4.7 -7 8.9 -11 11.7 -13 12.2 -12 10 -13.8 10 -5.2 3.1 -2.5 0.9 0.3 -1 3.8 -4 20.4 -18.6 10 -9.6 11.5 -11.8 16.5 -18 3 -2.9z"/>
<path fill="#f8d92c" d="M365.4 76.5l0.1 -0.3 1 -0.3 0.3 1.6 -0.3 3.9 -1 2.4 -0.8 -1.3 -0.2 -2zM362.4 78.5l0.1 -0.2 1.5 1.2 0.5 1 -0.2 2 -1.8 6.8 -1 0.4 -1 -0.5 -2 6 -1 0.2 -1 -0.3 -2 5.3 -1 0.6 -1 -0.6 -1 1.3 -1 2.9 -1 1.6 -2 -0.4 -2 4.7 -1 1.3 -2 -0.4 -3 5.9 -1 0.2 -1 -0.4 -1 0.5 -2 4.4 -1 1.4 -1 0.1 -1 -0.4 -1 0.5 -3 5.7 -1 0.5 -2 -0.3 -1 0.9 -3 5.4 -1 0.5 -2 -0.3 -1 0.6 -3 5.2 -1 1.1 -1 0.3 -2 -0.2 -1 0.4 -4 6.2 -1 0.7 -1 0.2 -2 -0.2 -1 0.4 -1 1.1 -3 4.7 -1 1 -1 0.6 -3 0 -1 0.3 -1 0.9 -3.7 5.2 -1.3 1.2 -2 0.7 -3 0.1 -1 0.5 -5 6.2 -2 1.5 -4 0.3 -2 0.7 -2 2 -3 3.8 -2.4 2 -1.6 0.6 -4 0.3 -2 0.7 -2 1.7 -4.3 4.7 -2.7 2 -2 0.7 -4 0.3 -2 0.4 -3 2.2 -5 5 -3 2 -2 0.7 -6 0.6 -2 0.6 -3 2 -6 5.4 -3 1.9 -3 1.1 -7 0.7 -3 0.9 -3 1.8 -8 6.4 -5 2.4 -4 0.9 -7 0.5 -3 0.7 -3 1.3 -7.6 4.5 -3.4 1.3 -2 0.4 -2 -0.2 -1 -0.5 -0.8 -1 -0.1 -1 0.9 -2.1 1.8 -1.9 3.1 -2 5.1 -1.9 9 -2.5 4 -2.1 8.6 -5.5 3.4 -1.8 4 -1.5 8 -2 2 -0.8 3 -1.7 7.2 -5.2 3.5 -2 2.3 -1 6 -1.6 3 -1.1 10 -7.4 4 -1.9 6 -1.7 2 -1.3 5 -4.4 3 -2.2 2 -0.9 6 -1.9 8 -7 2 -1 5 -1.7 7 -6.6 2 -1.1 4 -1.2 6 -6.2 2 -1.2 3 -0.8 1 -0.6 5 -5.7 1 -0.7 4 -1.4 5 -5.9 4 -1.6 4 -5.2 1 -0.8 3 -0.9 4 -5.5 1 -0.6 2 -0.5 1 -0.8 3 -4.7 1 -0.6 2 -0.5 3 -4.7 1 -0.9 2 -0.5 3 -4.8 1 -0.7 1 -0.1 1 -0.7 2 -3.8 1 -1 2 -0.7 2 -4 1 -0.9 1 0 1 -1 2 -3.9 2 -0.4 2 -4 2 0.2zM359.1 157.5l1.4 -1 1 1 -2 4.2 -5 7.2 -8 9.2 -11 10.8 -10.9 9.6 -8.1 6.1 -3 1.9 -1 0.1 4.3 -5.1 19.7 -20.1 18 -19.7z"/>
<path fill="#f6df29" d="M365.5 77.5l0.9 1 -0.9 4.1 -0.4 -2.1zM362.3 79.5l0.2 -0.3 0.9 1.3 0.2 2 -1.1 6.1 -1 0.3 -1 -1.1 -2 6.9 -1 0 -1 -0.5 -2 5.6 -1 0.6 -1 -0.8 -1 1.3 -1 3.1 -1 1.7 -2 -0.7 -2 4.9 -1 1.3 -2 -0.6 -3 6.1 -1 0.2 -1 -0.6 -1 0.5 -2 4.7 -1 1.3 -1 0 -1 -0.5 -1 0.4 -3 6 -1 0.5 -2 -0.6 -1 1 -2 4.2 -1 1.4 -1 0.5 -2 -0.5 -1 0.5 -3 5.5 -1 1.1 -1 0.3 -2 -0.4 -1 0.4 -4 6.4 -1 0.7 -1 0.2 -2 -0.4 -1 0.3 -1 1.2 -3 4.9 -1 1 -1 0.6 -3 -0.3 -1 0.3 -1 0.9 -3.4 5.1 -1.6 1.6 -2 0.6 -3 -0.1 -1 0.5 -5 6.5 -2 1.5 -1 0.2 -4 0 -1 0.4 -2 2.1 -3 4 -2 1.8 -2 0.9 -4 0 -2 0.5 -2 1.8 -4 4.8 -2.4 1.9 -2.6 1 -5 0.1 -2 0.7 -2 1.8 -4 4.4 -3 2.4 -3 1.2 -6 0.2 -2 0.4 -1 0.6 -7.8 7.2 -3.2 2.1 -4 1.2 -7 0.1 -2 0.6 -2 1.2 -9 7.7 -2 1.2 -3 1.3 -3 0.6 -4 0.1 -5 -0.4 -1 -0.1 -0.9 -0.6 7.8 -6 6.2 -4 5.9 -2.5 10 -1.9 2 -1.3 6.5 -5.3 4.5 -2.9 4 -1.6 6 -1.1 2 -0.7 8 -6.7 3 -2 3 -1.2 6 -1.3 2 -1.3 4.3 -4.2 2.7 -2.2 3 -1.5 4 -0.8 2 -0.7 5.9 -5.8 2.1 -1.7 2 -1 4 -0.8 1 -0.4 7 -7.1 2 -1 4 -0.9 1 -0.8 5 -5.8 2 -1.1 3 -0.5 1 -0.6 5 -6.1 2 -1 2 -0.3 1 -0.4 3.3 -4.5 1.7 -1.8 4 -1.2 4 -5.6 1 -0.7 3 -0.7 4 -5.7 1 -0.7 2 -0.2 1 -0.8 3 -4.9 1 -0.6 2 -0.3 3 -5 1 -0.9 2 -0.2 3 -5.1 1 -0.7 1 0.1 1 -0.6 2 -4.1 1 -1 1 0 1 -0.4 2 -4.3 1 -0.8 1 0.1 1 -0.9 2 -4.2 2 0 2 -4.3 1 0.1 1 0.9zM356.9 161.5l0.6 -0.2 0.2 0.2 -0.2 1 -1.1 2 -2.9 4.2 -4 4.7 -10 10.1 -6 5 -1 0.4 -0.2 -0.4 2.2 -3 8 -9 10 -11.1 3 -3zM149 228.5l4.5 -0.3 2.3 0.3 -6.8 5 -4.5 2.5 -2 0.6 -2 0.1 -1 -0.2 -0.8 -1 0 -1 0.5 -1 2.1 -2 3.8 -2z"/>
<path fill="#f5e626" d="M362.3 80.5l0.2 -0.3 0.5 1.3 0.1 3 -0.6 3.2 -1 0.1 -0.6 -1.3 0 -2 0.6 -2.2zM358.1 84.5l0.4 -0.7 1 0.4 0.6 1.3 0 2 -0.6 3 -1 3.5 -1 -0.1 -1 -1.1 -2 6.4 -1 0.5 -1 -1.1 -1 1.4 -1 3.4 -1 1.7 -2 -1.2 -2 5.4 -1 1.3 -2 -1.1 -3 6.6 -1 0.1 -1 -0.8 -1 0.3 -2 5.1 -1 1.4 -1 -0.1 -1 -0.7 -1 0.2 -2 4.8 -1 1.7 -1 0.5 -2 -1.1 -1 1 -2 4.6 -1 1.5 -1 0.5 -2 -0.9 -1 0.3 -3 6.1 -1 1.1 -1 0.3 -2 -0.9 -1 0.2 -3 5.6 -1 1.4 -1 0.8 -1 0.1 -2 -0.8 -1 0.2 -1 1.2 -3 5.5 -1 1 -1 0.5 -1 0 -2 -0.7 -1 0 -1 1 -3 5.2 -2 2.2 -2 0.5 -3 -0.8 -1 0.4 -4 6.1 -2 2.1 -2 0.8 -4 -0.8 -1 0.3 -5 6.9 -2 1.9 -1 0.6 -2 0.3 -4 -0.9 -1 0.2 -6 7.7 -2 1.8 -1.9 0.9 -3.1 0.1 -3.7 -1.1 0.1 -1 2.2 -3 2.6 -3 2.8 -2.4 2 -1.1 2 -0.6 5 -0.1 4.8 -5.8 2.2 -2.2 3 -1.6 5 -0.4 4.7 -5.8 2.3 -2.2 2 -0.9 4 -0.2 1 -0.9 3 -4.3 2 -2.2 2 -1 3 0 1 -0.5 3.2 -4.8 1.8 -2 2 -0.9 2 0.2 1 -0.4 3.2 -4.9 1.8 -2 1 -0.5 3 0 4 -6.3 1 -0.7 1 -0.3 2 0.2 4 -6.4 1 -0.5 2 0.2 1 -0.9 1.9 -3.8 1.1 -1.6 1 -0.5 2 0.3 3 -5.6 1 -0.9 2 0.3 3 -5.7 1 -0.6 1 0.4 1 -0.4 2 -4.6 1 -1 2 0.1 2 -4.8 1 -0.8 1 0.5 1 -0.9 1 -2.9 1 -1.7 2 0.7zM224.6 191.5l2.9 -0.5 2 0.2 1.3 0.3 0.2 1 -4.5 6 -2 2.1 -2 1.5 -2 0.9 -2 0.4 -2 -0.2 -2.5 -0.7 -0.6 -1 0.4 -1 2.4 -3 4.3 -3.9zM201.8 203.5l2.7 -0.7 2 -0.1 2.4 0.8 -0.1 1 -0.6 1 -2.3 3 -3 3 -2.8 2 -2.6 1.1 -3 0.3 -2.7 -0.4 -1.4 -1 0.1 -1 0.5 -1 2.9 -3 3.9 -3zM174.9 216.5l4.6 -0.9 2 0.2 0.9 0.7 -0.2 1 -0.5 1 -1.7 2 -3.2 3 -3.3 2.2 -3 1.3 -3 0.5 -3 -0.2 -1.8 -0.8 -0.3 -1 0.6 -1 3 -3 4.5 -3zM145.1 231.5l1.4 -0.2 0.8 0.2 -0.4 1 -1.3 1 -2.1 0.8 -1 -0.3 -0.2 -0.5 0.9 -1z"/>
<path fill="#f5ec22" d="M362.5 81.5l0.3 2 -0.3 3.1 -1 -1.1 0 -1zM358.2 85.5l0.3 -0.8 0.8 0.8 0.3 1 -0.2 3 -0.9 3.7 -1.3 -0.7 -0.4 -2 0.3 -2zM354.2 89.5l0.3 -0.5 0.9 0.5 0.6 1 0.1 1 -1.6 7 -1 0.4 -1 -2 -1 1.7 -1 4 -1 1.8 -1.2 -0.9 -0.6 -1 -0.1 -2 0.5 -2 1.4 -3.7 1 -0.8 1 1.2 1 -0.7 0.7 -3zM345.5 99.5l1.6 1 0.3 1 -1.9 7.1 -1 1.3 -1.6 -1.4 -0.3 -2 1.4 -5 0.5 -1.1zM339.9 105.5l0.6 -0.3 0.5 0.3 1.2 1 0.1 1 -1.8 6 -1 1.9 -1 0 -1 -1.5 -0.7 -0.4 0 -1 1.7 -5 1 -1.8zM334 111.5l0.5 -0.4 1 0.4 0.8 1 0.1 1 -1.7 6 -1.2 2 -1 -0.2 -0.7 -0.8 -0.8 -1 -0.1 -1 1.6 -4.7 1 -1.9zM328.1 117.5l0.8 0 1.2 1 0.1 2 -1.7 5.2 -1 1.7 -1 0.4 -1.5 -1.3 -0.4 -2 1.7 -5 1.2 -1.7zM320.4 124.5l1.1 -0.6 1 0.3 0.9 1.3 0 1 -1.9 5.9 -1 1.5 -1 0.4 -1.3 -0.8 -0.9 -2 1.3 -4zM312.6 131.5l0.9 -0.7 1 0 1 0.7 0.6 1 -0.1 1 -2.5 6.3 -1 1.2 -1 0.2 -1.2 -0.7 -0.7 -1 -0.2 -1 0.8 -3zM304.3 138.5l1.2 -0.5 1 0.2 1.1 1.3 0 1 -0.9 3 -1.5 3 -0.7 1.1 -1 0.8 -1 0 -1.3 -0.9 -0.6 -1 0 -1 1.5 -4zM294.4 146.5l1.1 -0.7 1 -0.2 1 0.4 0.6 0.5 0.3 1 -0.2 1 -1.1 3 -1.6 3 -1 1.1 -1 0.4 -1 -0.1 -1.7 -1.4 0 -2 1.7 -3.7zM283.8 154.5l1.7 -0.7 1 0 1 0.7 0.4 1 -0.1 1 -1.2 3 -2.1 3.3 -1 0.9 -1 0.4 -1 0 -1.2 -0.6 -0.7 -1 0.1 -2 1.8 -3.5zM273.1 162.5l1.6 0 1.2 1 -0.2 2 -0.9 2 -1.3 2.3 -2 2.3 -2 0.7 -1.2 -0.3 -1.3 -1 -0.3 -1 0.6 -2 2.8 -4 1.4 -1.3zM257.5 172.5l2 -0.8 2 0.2 0.7 0.6 0.2 1 -0.7 2 -2.2 3.6 -2 2 -2 0.8 -2 -0.4 -1.1 -1 -0.1 -1 0.2 -1 1.9 -3zM241.4 182.5l2.1 -0.8 2 0.1 1 0.7 0.1 1 -0.8 2 -2 3 -2.3 2.2 -2 1 -2.5 -0.2 -1.3 -1 -0.2 -1 0.3 -1 2.1 -3zM225 192.5l1.9 0 1.2 1 -0.5 2 -2.9 4 -2.2 1.7 -2 0.9 -2 0.2 -2.1 -0.8 -0.4 -1 0.3 -1 2.1 -3 3.1 -2.5zM202.1 204.5l1.4 -0.3 2 0.3 0.6 1 -0.8 2 -2.5 3 -2.6 2 -2.7 1.1 -3 -0.1 -1 -0.6 -0.3 -0.4 0 -1 2.2 -3 3.1 -2.4zM175.6 217.5l2.9 0 0.7 1 -0.9 2 -1.9 2 -2.7 2 -2.2 1.1 -3 0.5 -2.5 -0.6 -0.4 -1 0.5 -1 1.8 -2 3.6 -2.4z"/>
<path fill="#f6f21e" d="M358.2 86.5l0.3 -0.6 0.6 1.6 -0.6 4.8 -0.8 -0.8 -0.3 -1 0.2 -2zM354.2 90.5l0.3 -0.5 0.9 1.5 0 2 -0.9 4.2 -1 0.2 -0.5 -1.4 0 -2 0.5 -2.6zM349.9 95.5l0.6 -0.4 0.3 0.4 0.4 2 -0.7 4.2 -1 1.9 -0.9 -1.1 -0.3 -2 0.6 -3 0.6 -1.8zM345.5 100.5l0.7 1 0.2 2 -0.9 4.2 -1 1.4 -1.1 -1.6 -0.1 -2 1.2 -4.1zM339.9 106.5l0.8 0 0.5 2 -0.7 4 -1 2.1 -1 -0.2 -0.4 -0.9 -0.2 -2 0.7 -3 0.9 -1.9zM334.1 112.5l0.4 -0.3 0.4 0.3 0.6 1 0.1 1 -1.1 4.7 -1 1.5 -1 -0.6 -0.3 -0.6 -0.2 -2 0.8 -3 0.7 -1.6zM328.4 118.5l0.8 1 -0.1 3 -0.6 2.2 -1 1.9 -1 0.2 -0.9 -1.3 0.1 -3 1.3 -3 0.5 -0.8zM320.4 125.5l1.1 -0.5 0.6 0.5 0.4 2 -1 3.9 -1 1.7 -1 0.3 -0.8 -0.9 -0.4 -2 0.9 -3zM312.5 132.5l1 -0.6 1 0.3 0.5 1.3 -0.1 1 -0.4 2 -1 2.4 -1 1.2 -1 0.1 -0.7 -0.7 -0.4 -2 0.9 -3zM304.3 139.5l1.2 -0.4 0.6 0.4 0.5 1 0 1 -1.1 3.6 -1 1.7 -1 0.7 -1 -0.3 -0.6 -0.7 -0.2 -2 0.8 -2.5zM294.4 147.5l1.1 -0.6 1 0.1 0.7 1.5 -0.1 1 -0.6 2 -1 2.1 -1 1.1 -1 0.4 -1.2 -0.6 -0.5 -1 0 -1 0.7 -2.3zM283.9 155.5l1.6 -0.5 0.8 0.5 0.3 1 0 1 -1.1 2.9 -1 1.5 -1 0.9 -1 0.3 -1.3 -0.6 -0.5 -1 0.1 -1 1.2 -3zM271.2 164.5l1.3 -0.7 1 -0.1 1 0.8 -0.1 2 -1.9 3.7 -1.7 1.3 -1.3 0.1 -1.2 -1.1 0.1 -2 1.1 -2.1zM257.7 173.5l1.8 -0.5 1.1 0.5 0.2 1 -0.5 2 -1.2 2 -1.6 1.7 -1 0.5 -1 0.1 -0.9 -0.3 -0.7 -1 0.3 -2 1.3 -2.1zM241.7 183.5l1.8 -0.4 1 0.3 0.3 1.1 -0.3 1.3 -1 1.8 -2 2.1 -1.8 0.8 -1.2 0 -1.1 -1 0.3 -2 1.8 -2.4zM222.7 194.5l1.8 -0.5 1.3 0.5 0.2 1 -0.9 2 -1.6 1.8 -2 1.3 -2 0.3 -0.9 -0.4 -0.4 -1 0.9 -2 2 -2zM200.3 206.5l2.2 -0.4 0.8 0.4 0.1 1 -1.2 2 -1.7 1.5 -2 0.9 -2 0 -0.6 -0.4 -0.1 -1 0.6 -1 2.1 -2zM172.1 220.5l2.4 -0.8 1 0.5 0.1 0.3 -1.5 2 -1.6 1 -2 0.4 -1 -0.3 0.1 -1.1z"/>
<path fill="#f8f818" d="M358.5 87.5l0 3.3 -0.3 -1.3zM354.4 91.5l0.1 -0.3 0.4 2.3 -0.4 3.1 -1 -0.3 -0.1 -0.8 0.1 -1.7zM349.3 97.5l0.2 -0.6 1 -0.2 0 3.6 -1 2.3 -0.6 -2.1zM344.7 102.5l0.8 -0.6 0.4 1.6 -0.4 3 -1 1.5 -0.6 -2.5zM339.2 108.5l0.3 -0.7 1 0.2 0.1 0.5 -0.1 2.5 -1 2.6 -1 -1.3 0.1 -1.8zM333.3 114.5l1.2 -1 0.4 2 -0.4 2.5 -1 1.6 -0.8 -1.1 -0.1 -1zM327.2 120.5l0.3 -0.5 1 0.2 0.2 1.3 -0.2 1.6 -1 2.5 -1 -0.1 -0.3 -1 0.1 -2zM319.9 127.5l0.6 -0.9 1 -0.1 0.3 2 -0.3 1.4 -1 2.1 -1 0 -0.4 -1.5 0.1 -1zM313.1 133.5l0.4 -0.2 0.2 0.2 0.4 2 -0.6 2.2 -1 1.3 -1.1 -0.5 -0.1 -2 1.2 -2.7zM303.6 141.5l0.9 -0.8 1 0.3 0.2 1.5 -1.2 3.1 -1 0.6 -0.8 -0.7 -0.1 -1zM295 148.5l0.7 0 0.4 1 -0.3 2 -1.3 2.1 -1 0.1 -0.6 -1.2 0.1 -1 0.5 -1.5 1 -1.3zM283.2 157.5l1.3 -1 0.9 1 0 1 -0.9 2.1 -1 1 -1 0.1 -0.5 -1.2 0.1 -1zM272.1 165.5l0.6 0 0.5 1 -0.2 1 -1.2 2 -1.3 0.7 -0.8 -0.7 0 -1 0.8 -1.8zM257.1 175.5l1.4 -0.5 0.5 0.5 0 1 -1.3 2 -1.2 0.6 -0.9 -0.6 0.1 -1zM241.3 185.5l1.2 -0.1 0.1 1.1 -1.1 1.4 -1.2 0.6 -0.7 -1 0.6 -1z"/>
</g>
<g clip-path="url(#axc)">
<path d="M295.2 171.6 295.5 206.3 295.8 233.5 296.1 252.8 296.3 267.8 296.6 280.0 296.9 290.4 297.2 299.3 297.5 307.2 297.8 314.3 298 320.7 298.3 326.6 298.6 331.9 298.9 336.9 299.2 341.5 299.5 345.9 299.8 349.9 300 353.8 300.3 357.4 300.6 360.8 300.9 364.1 301.2 367.2 301.5 370.2 301.8 373.1 302 375.8 302.3 378.4 302.6 381.0 302.9 383.4 303.2 385.8 303.5 388.0 303.7 390.2 304 392.4 304.3 394.4 304.6 396.4 304.9 398.4 305.2 400.3 305.5 402.1 305.7 403.9 306 405.6 306.3 407.3 306.6 409.0 306.9 410.6 307.2 412.2 307.4 413.7 307.7 415.2 308 416.7 308.3 418.2 308.6 419.6 308.9 421.0 311.2 431.1 313.4 439.9 315.7 447.7 318 454.7 320.3 461.0 322.5 466.8 324.8 472.1 327.1 477.0 329.4 481.6 331.7 485.9 333.9 489.9 336.2 493.8 338.5 497.4 340.8 500.8 343.1 504.0 345.3 507.1 347.6 510.1 349.9 512.9 352.2 515.7 354.4 518.3 356.7 520.8 359 523.2 361.3 525.6 363.6 527.8 365.8 530.0 368.1 532.2 370.4 534.2 372.7 536.2 375 538.1 377.2 540.0 379.5 541.9 381.8 543.6 384.1 545.4 386.3 547.1 388.6 548.7 390.9 550.3 393.2 551.9 395.5 553.5 397.7 555.0 400 556.4 402.3 557.9 404.6 559.3 406.9 560.7 409.1 562.0 411.4 563.3 413.7 564.6 416 565.9 418.2 567.2 420.5 568.4 422.8 569.6 425.1 570.8 427.4 571.9 429.6 573.1 431.9 574.2 434.2 575.3 436.5 576.4 438.8 577.5 441 578.5 443.3 579.6 445.6 580.6 447.9 581.6 450.1 582.6 452.4 583.6 454.7 584.5 457 585.5 459.3 586.4 461.5 587.3 463.8 588.3 466.1 589.2 468.4 590.0 470.7 590.9 472.9 591.8 475.2 592.6 477.5 593.5 479.8 594.3 482 595.1 484.3 595.9 486.6 596.7 488.9 597.5 491.2 598.3 493.4 599.1 495.7 599.9 498 600.6 500.3 601.4 502.6 602.1 504.8 602.8 507.1 603.6 509.4 604.3 511.7 605.0 513.9 605.7 516.2 606.4 518.5 607.1 520.8 607.8 523.1 608.4 525.3 609.1 527.6 609.8 529.9 610.4 532.2 611.1 534.5 611.7 536.7 612.3 539 613.0 541.3 613.6 543.6 614.2 545.8 614.8 548.1 615.4 550.4 616.0 552.7 616.6 555 617.2 557.2 617.8 559.5 618.4 561.8 619.0 564.1 619.5 566.4 620.1 568.6 620.6 570.9 621.2 573.2 621.8 575.5 622.3 577.8 622.8 580 623.4 582.3 623.9 584.6 624.5 586.6 624.9 586.9 624.9 588.9 624.5 591.1 623.9 593.4 623.4 595.7 622.8 598 622.3 600.3 621.8 602.5 621.2 604.8 620.6 607.1 620.1 609.4 619.5 611.6 619.0 613.9 618.4 616.2 617.8 618.5 617.2 620.8 616.6 623 616.0 625.3 615.4 627.6 614.8 629.9 614.2 632.2 613.6 634.4 613.0 636.7 612.3 639 611.7 641.3 611.1 643.5 610.4 645.8 609.8 648.1 609.1 650.4 608.4 652.7 607.8 654.9 607.1 657.2 606.4 659.5 605.7 661.8 605.0 664.1 604.3 666.3 603.6 668.6 602.8 670.9 602.1 673.2 601.4 675.4 600.6 677.7 599.9 680 599.1 682.3 598.3 684.6 597.5 686.8 596.7 689.1 595.9 691.4 595.1 693.7 594.3 696 593.5 698.2 592.6 700.5 591.8 702.8 590.9 705.1 590.0 707.3 589.2 709.6 588.3 711.9 587.3 714.2 586.4 716.5 585.5 718.7 584.5 721 583.6 723.3 582.6 725.6 581.6 727.9 580.6 730.1 579.6 732.4 578.5 734.7 577.5 737 576.4 739.2 575.3 741.5 574.2 743.8 573.1 746.1 571.9 748.4 570.8 750.6 569.6 752.9 568.4 755.2 567.2 757.5 565.9 759.8 564.6 762 563.3 764.3 562.0 766.6 560.7 768.9 559.3 771.1 557.9 773.4 556.4 775.7 555.0 778 553.5 780.3 551.9 782.5 550.3 784.8 548.7 787.1 547.1 789.4 545.4 791.7 543.6 793.9 541.9 796.2 540.0 798.5 538.1 800.8 536.2 803.1 534.2 805.3 532.2 807.6 530.0 809.9 527.8 812.2 525.6 814.4 523.2 816.7 520.8 819 518.3 821.3 515.7 823.6 512.9 825.8 510.1 828.1 507.1 830.4 504.0 832.7 500.8 835 497.4 837.2 493.8 839.5 489.9 841.8 485.9 844.1 481.6 846.3 477.0 848.6 472.1 850.9 466.8 853.2 461.0 855.5 454.7 857.7 447.7 860 439.9 862.3 431.1 864.6 421.0 864.9 419.6 865.1 418.2 865.4 416.7 865.7 415.2 866 413.7 866.3 412.2 866.6 410.6 866.9 409.0 867.1 407.3 867.4 405.6 867.7 403.9 868 402.1 868.3 400.3 868.6 398.4 868.8 396.4 869.1 394.4 869.4 392.4 869.7 390.2 870 388.0 870.3 385.8 870.6 383.4 870.8 381.0 871.1 378.4 871.4 375.8 871.7 373.1 872 370.2 872.3 367.2 872.5 364.1 872.8 360.8 873.1 357.4 873.4 353.8 873.7 349.9 874 345.9 874.3 341.5 874.5 336.9 874.8 331.9 875.1 326.6 875.4 320.7 875.7 314.3 876 307.2 876.3 299.3 876.5 290.4 876.8 280.0 877.1 267.8 877.4 252.8 877.7 233.5 878 206.3 878.2 171.6 L879 624 L296 624 Z" fill="#d4d4d4" fill-opacity="0.4"/>
<path d="M295.2 171.6 295.5 206.3 295.8 233.5 296.1 252.8 296.3 267.8 296.6 280.0 296.9 290.4 297.2 299.3 297.5 307.2 297.8 314.3 298 320.7 298.3 326.6 298.6 331.9 298.9 336.9 299.2 341.5 299.5 345.9 299.8 349.9 300 353.8 300.3 357.4 300.6 360.8 300.9 364.1 301.2 367.2 301.5 370.2 301.8 373.1 302 375.8 302.3 378.4 302.6 381.0 302.9 383.4 303.2 385.8 303.5 388.0 303.7 390.2 304 392.4 304.3 394.4 304.6 396.4 304.9 398.4 305.2 400.3 305.5 402.1 305.7 403.9 306 405.6 306.3 407.3 306.6 409.0 306.9 410.6 307.2 412.2 307.4 413.7 307.7 415.2 308 416.7 308.3 418.2 308.6 419.6 308.9 421.0 311.2 431.1 313.4 439.9 315.7 447.7 318 454.7 320.3 461.0 322.5 466.8 324.8 472.1 327.1 477.0 329.4 481.6 331.7 485.9 333.9 489.9 336.2 493.8 338.5 497.4 340.8 500.8 343.1 504.0 345.3 507.1 347.6 510.1 349.9 512.9 352.2 515.7 354.4 518.3 356.7 520.8 359 523.2 361.3 525.6 363.6 527.8 365.8 530.0 368.1 532.2 370.4 534.2 372.7 536.2 375 538.1 377.2 540.0 379.5 541.9 381.8 543.6 384.1 545.4 386.3 547.1 388.6 548.7 390.9 550.3 393.2 551.9 395.5 553.5 397.7 555.0 400 556.4 402.3 557.9 404.6 559.3 406.9 560.7 409.1 562.0 411.4 563.3 413.7 564.6 416 565.9 418.2 567.2 420.5 568.4 422.8 569.6 425.1 570.8 427.4 571.9 429.6 573.1 431.9 574.2 434.2 575.3 436.5 576.4 438.8 577.5 441 578.5 443.3 579.6 445.6 580.6 447.9 581.6 450.1 582.6 452.4 583.6 454.7 584.5 457 585.5 459.3 586.4 461.5 587.3 463.8 588.3 466.1 589.2 468.4 590.0 470.7 590.9 472.9 591.8 475.2 592.6 477.5 593.5 479.8 594.3 482 595.1 484.3 595.9 486.6 596.7 488.9 597.5 491.2 598.3 493.4 599.1 495.7 599.9 498 600.6 500.3 601.4 502.6 602.1 504.8 602.8 507.1 603.6 509.4 604.3 511.7 605.0 513.9 605.7 516.2 606.4 518.5 607.1 520.8 607.8 523.1 608.4 525.3 609.1 527.6 609.8 529.9 610.4 532.2 611.1 534.5 611.7 536.7 612.3 539 613.0 541.3 613.6 543.6 614.2 545.8 614.8 548.1 615.4 550.4 616.0 552.7 616.6 555 617.2 557.2 617.8 559.5 618.4 561.8 619.0 564.1 619.5 566.4 620.1 568.6 620.6 570.9 621.2 573.2 621.8 575.5 622.3 577.8 622.8 580 623.4 582.3 623.9 584.6 624.5 586.6 624.9 586.9 624.9 588.9 624.5 591.1 623.9 593.4 623.4 595.7 622.8 598 622.3 600.3 621.8 602.5 621.2 604.8 620.6 607.1 620.1 609.4 619.5 611.6 619.0 613.9 618.4 616.2 617.8 618.5 617.2 620.8 616.6 623 616.0 625.3 615.4 627.6 614.8 629.9 614.2 632.2 613.6 634.4 613.0 636.7 612.3 639 611.7 641.3 611.1 643.5 610.4 645.8 609.8 648.1 609.1 650.4 608.4 652.7 607.8 654.9 607.1 657.2 606.4 659.5 605.7 661.8 605.0 664.1 604.3 666.3 603.6 668.6 602.8 670.9 602.1 673.2 601.4 675.4 600.6 677.7 599.9 680 599.1 682.3 598.3 684.6 597.5 686.8 596.7 689.1 595.9 691.4 595.1 693.7 594.3 696 593.5 698.2 592.6 700.5 591.8 702.8 590.9 705.1 590.0 707.3 589.2 709.6 588.3 711.9 587.3 714.2 586.4 716.5 585.5 718.7 584.5 721 583.6 723.3 582.6 725.6 581.6 727.9 580.6 730.1 579.6 732.4 578.5 734.7 577.5 737 576.4 739.2 575.3 741.5 574.2 743.8 573.1 746.1 571.9 748.4 570.8 750.6 569.6 752.9 568.4 755.2 567.2 757.5 565.9 759.8 564.6 762 563.3 764.3 562.0 766.6 560.7 768.9 559.3 771.1 557.9 773.4 556.4 775.7 555.0 778 553.5 780.3 551.9 782.5 550.3 784.8 548.7 787.1 547.1 789.4 545.4 791.7 543.6 793.9 541.9 796.2 540.0 798.5 538.1 800.8 536.2 803.1 534.2 805.3 532.2 807.6 530.0 809.9 527.8 812.2 525.6 814.4 523.2 816.7 520.8 819 518.3 821.3 515.7 823.6 512.9 825.8 510.1 828.1 507.1 830.4 504.0 832.7 500.8 835 497.4 837.2 493.8 839.5 489.9 841.8 485.9 844.1 481.6 846.3 477.0 848.6 472.1 850.9 466.8 853.2 461.0 855.5 454.7 857.7 447.7 860 439.9 862.3 431.1 864.6 421.0 864.9 419.6 865.1 418.2 865.4 416.7 865.7 415.2 866 413.7 866.3 412.2 866.6 410.6 866.9 409.0 867.1 407.3 867.4 405.6 867.7 403.9 868 402.1 868.3 400.3 868.6 398.4 868.8 396.4 869.1 394.4 869.4 392.4 869.7 390.2 870 388.0 870.3 385.8 870.6 383.4 870.8 381.0 871.1 378.4 871.4 375.8 871.7 373.1 872 370.2 872.3 367.2 872.5 364.1 872.8 360.8 873.1 357.4 873.4 353.8 873.7 349.9 874 345.9 874.3 341.5 874.5 336.9 874.8 331.9 875.1 326.6 875.4 320.7 875.7 314.3 876 307.2 876.3 299.3 876.5 290.4 876.8 280.0 877.1 267.8 877.4 252.8 877.7 233.5 878 206.3 878.2 171.6" fill="none" stroke="#fff" stroke-width="2.7" stroke-dasharray="12 10"/>
</g>
<path d="M295.5 172V624.5H879" fill="none" stroke="#262626" stroke-width="1"/>
<text x="353.5" y="640" text-anchor="middle" font-size="12" letter-spacing="-0.4" fill="#303030">0.1</text>
<text x="411.5" y="640" text-anchor="middle" font-size="12" letter-spacing="-0.4" fill="#303030">0.2</text>
<text x="469.5" y="640" text-anchor="middle" font-size="12" letter-spacing="-0.4" fill="#303030">0.3</text>
<text x="528.5" y="640" text-anchor="middle" font-size="12" letter-spacing="-0.4" fill="#303030">0.4</text>
<text x="586.5" y="640" text-anchor="middle" font-size="12" letter-spacing="-0.4" fill="#303030">0.5</text>
<text x="644.5" y="640" text-anchor="middle" font-size="12" letter-spacing="-0.4" fill="#303030">0.6</text>
<text x="703.5" y="640" text-anchor="middle" font-size="12" letter-spacing="-0.4" fill="#303030">0.7</text>
<text x="761.5" y="640" text-anchor="middle" font-size="12" letter-spacing="-0.4" fill="#303030">0.8</text>
<text x="819.5" y="640" text-anchor="middle" font-size="12" letter-spacing="-0.4" fill="#303030">0.9</text>
<text x="879.5" y="640" text-anchor="middle" font-size="12" letter-spacing="-0.4" fill="#303030">1</text>
<text x="284.4" y="629" text-anchor="end" font-size="12" letter-spacing="-0.4" fill="#303030">10</text>
<text x="285.8" y="624" font-size="8.6" fill="#303030">0</text>
<text x="284.4" y="475" text-anchor="end" font-size="12" letter-spacing="-0.4" fill="#303030">10</text>
<text x="285.8" y="470" font-size="8.6" fill="#303030">1</text>
<text x="284.4" y="320" text-anchor="end" font-size="12" letter-spacing="-0.4" fill="#303030">10</text>
<text x="285.8" y="315" font-size="8.6" fill="#303030">2</text>
<path d="M353.5 624v-5.8M411.5 624v-5.8M469.5 624v-5.8M528.5 624v-5.8M586.5 624v-5.8M644.5 624v-5.8M703.5 624v-5.8M761.5 624v-5.8M819.5 624v-5.8M878.5 624v-5.8M296 623.5h4.5M296 576.5h2.2M296 549.5h2.2M296 530.5h2.2M296 515.5h2.2M296 503.5h2.2M296 492.5h2.2M296 483.5h2.2M296 476.5h2.2M296 469.5h4.5M296 422.5h2.2M296 395.5h2.2M296 375.5h2.2M296 361.5h2.2M296 348.5h2.2M296 338.5h2.2M296 329.5h2.2M296 321.5h2.2M296 314.5h4.5M296 267.5h2.2M296 240.5h2.2M296 221.5h2.2M296 206.5h2.2M296 194.5h2.2M296 183.5h2.2M296 174.5h2.2" stroke="#262626" stroke-width="1" fill="none"/>
<text x="587" y="656" text-anchor="middle" font-size="13.2" fill="#303030">Time (secs)</text>
<text transform="translate(264,399.7) rotate(-90)" text-anchor="middle" font-size="13.2" fill="#303030">Frequency (Hz)</text>
<defs><linearGradient id="cb" x1="0" y1="0" x2="0" y2="1"><stop offset="0.0000" stop-color="#f9fb15"/><stop offset="0.0159" stop-color="#f7f51b"/><stop offset="0.0317" stop-color="#f6ef20"/><stop offset="0.0476" stop-color="#f5e924"/><stop offset="0.0635" stop-color="#f5e327"/><stop offset="0.0794" stop-color="#f7dc2a"/><stop offset="0.0952" stop-color="#fad62d"/><stop offset="0.1111" stop-color="#fccf30"/><stop offset="0.1270" stop-color="#fec934"/><stop offset="0.1429" stop-color="#fec338"/><stop offset="0.1587" stop-color="#febe3c"/><stop offset="0.1746" stop-color="#f8ba3d"/><stop offset="0.1905" stop-color="#f0ba36"/><stop offset="0.2063" stop-color="#e6bb2d"/><stop offset="0.2222" stop-color="#dcbd29"/><stop offset="0.2381" stop-color="#d1bf27"/><stop offset="0.2540" stop-color="#c5c22a"/><stop offset="0.2698" stop-color="#b9c431"/><stop offset="0.2857" stop-color="#abc739"/><stop offset="0.3016" stop-color="#9dc943"/><stop offset="0.3175" stop-color="#8fcb4e"/><stop offset="0.3333" stop-color="#81cc59"/><stop offset="0.3492" stop-color="#72cd64"/><stop offset="0.3651" stop-color="#64cd6f"/><stop offset="0.3810" stop-color="#57cc7a"/><stop offset="0.3968" stop-color="#4acb84"/><stop offset="0.4127" stop-color="#3fca8e"/><stop offset="0.4286" stop-color="#37c897"/><stop offset="0.4444" stop-color="#31c69f"/><stop offset="0.4603" stop-color="#2cc4a7"/><stop offset="0.4762" stop-color="#24c1ae"/><stop offset="0.4921" stop-color="#19bfb6"/><stop offset="0.5079" stop-color="#0bbdbd"/><stop offset="0.5238" stop-color="#02bac3"/><stop offset="0.5397" stop-color="#01b8ca"/><stop offset="0.5556" stop-color="#08b5d0"/><stop offset="0.5714" stop-color="#12b1d6"/><stop offset="0.5873" stop-color="#18addb"/><stop offset="0.6032" stop-color="#1ca9df"/><stop offset="0.6190" stop-color="#20a5e3"/><stop offset="0.6349" stop-color="#23a0e5"/><stop offset="0.6508" stop-color="#259be8"/><stop offset="0.6667" stop-color="#2797eb"/><stop offset="0.6825" stop-color="#2b91ef"/><stop offset="0.6984" stop-color="#2d8cf3"/><stop offset="0.7143" stop-color="#2e87f7"/><stop offset="0.7302" stop-color="#2f81fa"/><stop offset="0.7460" stop-color="#327cfc"/><stop offset="0.7619" stop-color="#3875fe"/><stop offset="0.7778" stop-color="#3e6fff"/><stop offset="0.7937" stop-color="#4269fe"/><stop offset="0.8095" stop-color="#4563fd"/><stop offset="0.8254" stop-color="#465efb"/><stop offset="0.8413" stop-color="#4758f8"/><stop offset="0.8571" stop-color="#4852f4"/><stop offset="0.8730" stop-color="#484df0"/><stop offset="0.8889" stop-color="#4747eb"/><stop offset="0.9048" stop-color="#4741e5"/><stop offset="0.9206" stop-color="#463cde"/><stop offset="0.9365" stop-color="#4537d5"/><stop offset="0.9524" stop-color="#4332cb"/><stop offset="0.9683" stop-color="#422ec0"/><stop offset="0.9841" stop-color="#402ab4"/><stop offset="1.0000" stop-color="#3e26a8"/></linearGradient></defs>
<rect x="898.5" y="172.5" width="20" height="452" fill="url(#cb)" stroke="#262626" stroke-width="1"/>
<text x="924.6" y="584.7" font-size="10.8" fill="#303030">0.1</text>
<text x="924.6" y="540.4" font-size="10.8" fill="#303030">0.2</text>
<text x="924.6" y="496.0" font-size="10.8" fill="#303030">0.3</text>
<text x="924.6" y="451.7" font-size="10.8" fill="#303030">0.4</text>
<text x="924.6" y="407.3" font-size="10.8" fill="#303030">0.5</text>
<text x="924.6" y="362.9" font-size="10.8" fill="#303030">0.6</text>
<text x="924.6" y="318.6" font-size="10.8" fill="#303030">0.7</text>
<text x="924.6" y="274.2" font-size="10.8" fill="#303030">0.8</text>
<text x="924.6" y="229.9" font-size="10.8" fill="#303030">0.9</text>
<text x="924.6" y="185.5" font-size="10.8" fill="#303030">1</text>
<path d="M918 580.7h-3.5M918 536.4h-3.5M918 492.0h-3.5M918 447.7h-3.5M918 403.3h-3.5M918 358.9h-3.5M918 314.6h-3.5M918 270.2h-3.5M918 225.9h-3.5M918 181.5h-3.5" stroke="#262626" stroke-width="1" fill="none"/>
<text transform="translate(955,400) rotate(-90)" text-anchor="middle" font-size="10.8" fill="#303030">Magnitude</text>
</svg>
</body>
</html>
